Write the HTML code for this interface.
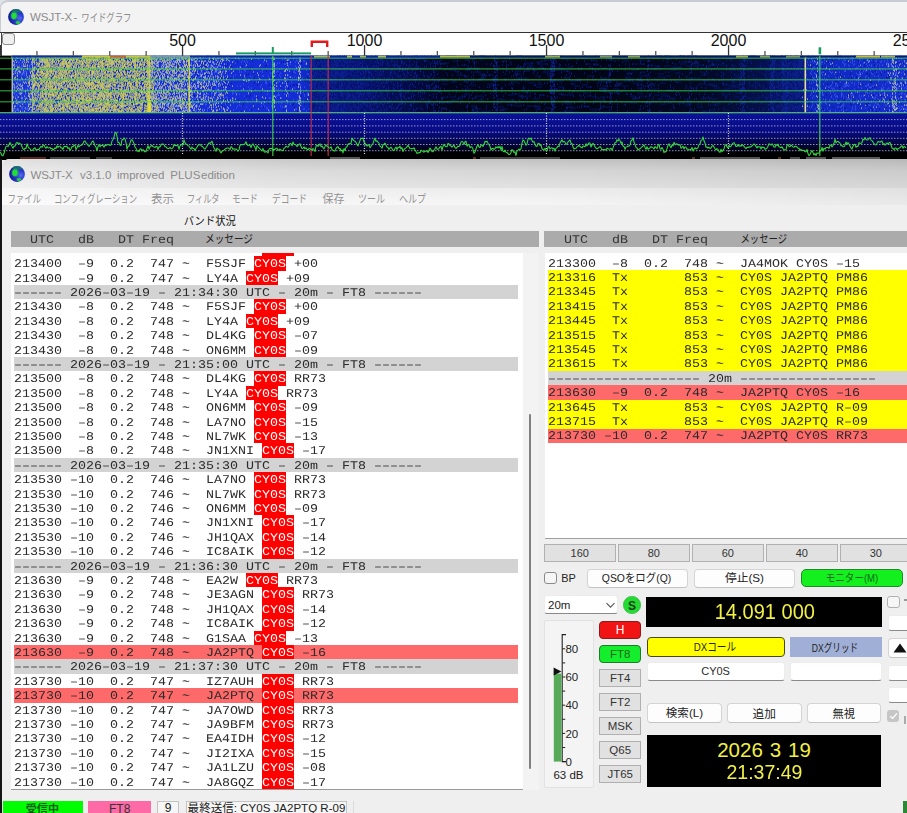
<!DOCTYPE html>
<html><head><meta charset="utf-8"><title>WSJT-X</title>
<style>
html,body{margin:0;padding:0}
body{width:907px;height:813px;overflow:hidden;position:relative;background:#f0f0f0;font-family:"Liberation Sans",sans-serif;font-size:11.5px;color:#111}
div,span,i,b,svg{position:absolute;box-sizing:border-box}
.mono{font-family:"Liberation Mono",monospace;font-size:13.333px;line-height:14.4px;white-space:pre;color:#2a2a2a}
.row{height:14.43px;overflow:visible}
.row .t{left:0;top:0.9px;transform:scaleX(1.12994);transform-origin:0 0;font-family:"Liberation Mono",monospace;font-size:11.8px;line-height:14.4px;white-space:pre;color:#2b2b2b;position:absolute;text-rendering:geometricPrecision}
.row b{position:static;font-weight:normal;color:#fff}
.row i{top:0;height:100%;width:32px;background:#fe0000}
.g{background:#d3d3d3}.r{background:#fe6a6a}.y{background:#ffff00}
.btn{background:#e1e1e1;border:1px solid #b0b0b0;text-align:center;color:#333;font-size:11px}
.wbtn{background:#fdfdfd;border:1px solid #d4d4d4;border-bottom-color:#c4c4c4;border-radius:4px;text-align:center}
.inp{background:#fff;border:1px solid #ececec;border-bottom:1px solid #8a8a8a;border-radius:3px}
.c{text-align:center}
</style></head><body>
<div style="left:0;top:0;width:907px;height:34px;background:#dfe2e7"></div><div style="left:0;top:0;width:915px;height:33px;background:#f3f3f3;border-top:2.5px solid #c8ccd2;border-left:1.5px solid #c8ccd2;border-top-left-radius:8px"></div><div style="left:0;top:31.5px;width:907px;height:1.3px;background:#333"></div><div style="left:0;top:32.8px;width:907px;height:23px;background:#fff"></div><div style="left:0.5px;top:32px;width:1.2px;height:24px;background:#444"></div><div style="left:2.4px;top:33.4px;width:12.2px;height:11.8px;background:#efefef;border:1px solid #8d8d8d;border-radius:3px"></div><svg style="left:6.9px;top:7.899999999999999px" width="18" height="18" viewBox="-9 -9 18 18"><defs><radialGradient id="gg16" cx=".74" cy=".58" r=".8"><stop offset="0" stop-color="#586af2"/><stop offset=".3" stop-color="#2e3ed2"/><stop offset=".75" stop-color="#1a22aa"/><stop offset="1" stop-color="#0e1478"/></radialGradient><clipPath id="gc16"><circle r="7.9"/></clipPath></defs><circle r="8.3" fill="#dfe6f4" opacity=".7"/><circle r="7.9" fill="url(#gg16)"/><g clip-path="url(#gc16)"><ellipse cx="1.6" cy="-7.4" rx="7" ry="3" fill="#148a60" opacity=".7"/><ellipse cx="-1.8" cy="-1.4" rx="3.8" ry="4.4" fill="#2aa66a" opacity=".5"/><ellipse cx="-2" cy="-1.2" rx="2.7" ry="3.2" fill="#22de38"/><ellipse cx="1.9" cy="5.6" rx="2.7" ry="2" fill="#2aa66a" opacity=".6"/><ellipse cx="1.9" cy="5.6" rx="1.9" ry="1.3" fill="#2cd03c"/></g></svg><svg style="left:0;top:33px" width="907" height="127" viewBox="0 33 907 127" shape-rendering="auto"><defs><linearGradient id="wfb" x1="0" x2="907" y1="0" y2="0" gradientUnits="userSpaceOnUse"><stop offset="0.0000" stop-color="#000000"/><stop offset="0.0127" stop-color="#000000"/><stop offset="0.0132" stop-color="#1a34d4"/><stop offset="0.2095" stop-color="#162ed8"/><stop offset="0.3308" stop-color="#142cd4"/><stop offset="0.3407" stop-color="#1028c0"/><stop offset="0.3440" stop-color="#0c1e92"/><stop offset="0.3969" stop-color="#09167a"/><stop offset="0.4520" stop-color="#050c48"/><stop offset="0.4906" stop-color="#02051c"/><stop offset="0.6615" stop-color="#020518"/><stop offset="0.7718" stop-color="#030824"/><stop offset="0.8379" stop-color="#06104a"/><stop offset="0.8732" stop-color="#0b1c80"/><stop offset="0.8864" stop-color="#0e2090"/><stop offset="0.8953" stop-color="#1028c0"/><stop offset="0.9482" stop-color="#122ac8"/><stop offset="1.0000" stop-color="#1830d0"/></linearGradient><linearGradient id="plb" x1="0" x2="0" y1="112.5" y2="153" gradientUnits="userSpaceOnUse"><stop offset="0" stop-color="#0a1298"/><stop offset=".45" stop-color="#080c84"/><stop offset=".75" stop-color="#040646"/><stop offset="1" stop-color="#000004"/></linearGradient><filter id="nb" x="0" y="0" width="100%" height="100%" filterUnits="userSpaceOnUse"><feGaussianBlur stdDeviation="0.35"/></filter></defs><rect x="0" y="55.6" width="907" height="56.99999999999999" fill="url(#wfb)"/><g fill="none" stroke-width="1.05" transform="translate(0,.1)" filter="url(#nb)"><path d="M0 56m23 0h2m7 0h1m2 0h2m2 0h1m4 0h1m3 0h1m1 0h2m1 0h2m4 0h1m4 0h4m3 0h1m2 0h1m3 0h2m2 0h1m2 0h1m1 0h1m4 0h1m1 0h1m2 0h3m1 0h1m1 0h1m2 0h4m2 0h1m4 0h1m2 0h1m2 0h1m8 0h1m2 0h1m2 0h1m3 0h1m1 0h1m1 0h1m1 0h1m30 0h1m5 0h2m5 0h1M0 57m16 0h1m11 0h1m2 0h1m2 0h1m2 0h1m1 0h1m4 0h1m3 0h1m3 0h2m2 0h4m2 0h2m3 0h1m1 0h1m1 0h1m2 0h1m1 0h1m1 0h1m2 0h2m2 0h1m6 0h1m2 0h4m1 0h2m2 0h1m1 0h1m1 0h2m1 0h2m3 0h1m3 0h1m1 0h2m3 0h1m1 0h2m1 0h3m1 0h1m1 0h2m3 0h2m3 0h1m5 0h1m19 0h1m2 0h1m11 0h1M0 58m39 0h2m2 0h1m4 0h2m1 0h1m2 0h1m4 0h1m3 0h1m1 0h2m3 0h1m1 0h2m1 0h1m1 0h2m1 0h4m1 0h2m2 0h1m6 0h4m2 0h1m1 0h1m3 0h2m2 0h2m1 0h1m2 0h2m3 0h1m5 0h1m1 0h2m2 0h3m7 0h7m32 0h2m32 0h1M0 59m39 0h2m1 0h4m1 0h1m1 0h1m3 0h1m10 0h2m1 0h1m1 0h3m1 0h1m2 0h2m4 0h1m1 0h1m1 0h6m2 0h2m1 0h1m1 0h1m1 0h1m2 0h7m4 0h2m1 0h1m10 0h1m2 0h1m1 0h3m1 0h1m2 0h2m3 0h1m1 0h1m6 0h1m3 0h1m4 0h1m6 0h1m5 0h1m7 0h1m35 0h1M0 60m33 0h1m2 0h1m5 0h3m1 0h2m4 0h2m3 0h2m1 0h1m3 0h1m6 0h1m2 0h1m1 0h4m1 0h1m1 0h1m2 0h1m1 0h3m2 0h1m2 0h2m2 0h1m1 0h1m1 0h1m3 0h4m2 0h1m1 0h1m2 0h1m4 0h1m7 0h4m5 0h1m2 0h2m5 0h1m10 0h2m3 0h1m15 0h1M0 61m40 0h1m1 0h1m1 0h1m2 0h1m4 0h1m1 0h1m1 0h1m1 0h1m3 0h5m2 0h1m2 0h1m3 0h1m2 0h1m2 0h1m7 0h2m1 0h1m1 0h1m5 0h2m3 0h1m2 0h7m2 0h3m4 0h1m1 0h1m4 0h6m1 0h1m1 0h1m4 0h1m1 0h2m1 0h2m5 0h1m10 0h1m13 0h2M0 62m24 0h1m1 0h1m1 0h1m4 0h2m5 0h3m1 0h1m1 0h2m1 0h2m1 0h3m1 0h1m1 0h1m2 0h3m1 0h2m2 0h1m2 0h1m2 0h2m1 0h1m1 0h1m3 0h3m1 0h2m3 0h1m2 0h1m1 0h5m2 0h2m1 0h2m1 0h3m1 0h2m1 0h2m2 0h1m1 0h1m1 0h5m1 0h3m2 0h1m2 0h1m1 0h2m1 0h1m1 0h1m4 0h2m4 0h1m2 0h1m22 0h1m1 0h1m14 0h1M0 63m34 0h1m2 0h1m6 0h5m2 0h1m3 0h1m4 0h1m1 0h1m1 0h3m2 0h1m1 0h1m6 0h1m4 0h1m1 0h1m2 0h3m3 0h1m3 0h1m1 0h1m1 0h3m2 0h1m2 0h4m5 0h1m2 0h2m1 0h1m2 0h1m2 0h1m1 0h1m12 0h2m1 0h1m4 0h1m15 0h1m5 0h1m6 0h1m12 0h1m24 0h1M0 64m23 0h1m1 0h1m10 0h1m1 0h1m3 0h1m5 0h2m2 0h1m3 0h1m2 0h1m2 0h2m1 0h2m4 0h1m2 0h1m5 0h1m2 0h1m3 0h1m5 0h1m1 0h1m1 0h2m2 0h2m2 0h1m2 0h6m4 0h1m3 0h1m2 0h1m3 0h3m2 0h2m3 0h5m3 0h1m3 0h2m12 0h2m1 0h2m4 0h1m3 0h1m37 0h1M0 65m27 0h1m14 0h1m3 0h5m3 0h1m5 0h4m2 0h7m2 0h2m4 0h2m1 0h1m1 0h1m1 0h1m3 0h1m1 0h2m2 0h1m1 0h1m1 0h1m1 0h1m3 0h1m2 0h2m1 0h1m1 0h1m1 0h1m1 0h1m8 0h2m2 0h4m2 0h3m6 0h3m15 0h1m2 0h1m9 0h1m4 0h1m3 0h1m2 0h1M0 66m27 0h1m11 0h1m4 0h4m1 0h1m1 0h3m5 0h2m5 0h4m3 0h2m5 0h1m2 0h1m2 0h3m3 0h1m1 0h1m2 0h1m1 0h1m2 0h2m3 0h1m1 0h1m1 0h1m2 0h1m3 0h1m3 0h2m1 0h1m2 0h1m2 0h1m2 0h2m1 0h1m1 0h1m8 0h1m3 0h1m23 0h1m8 0h1m13 0h1M0 67m18 0h1m15 0h2m4 0h2m1 0h3m1 0h1m1 0h1m2 0h1m1 0h2m1 0h2m2 0h1m1 0h1m2 0h2m1 0h1m3 0h3m2 0h2m2 0h1m2 0h1m2 0h1m1 0h1m1 0h4m1 0h1m3 0h1m1 0h1m3 0h1m1 0h1m2 0h2m1 0h2m2 0h2m1 0h2m1 0h2m4 0h1m2 0h1m3 0h2m1 0h1m1 0h1m1 0h1m5 0h1m15 0h2m3 0h1m6 0h1m5 0h1m7 0h1M0 68m32 0h1m1 0h1m1 0h1m3 0h1m3 0h1m1 0h1m2 0h1m6 0h1m1 0h1m1 0h1m1 0h1m4 0h1m1 0h3m1 0h1m1 0h1m2 0h1m1 0h1m1 0h1m1 0h1m1 0h3m3 0h2m1 0h1m4 0h1m3 0h1m6 0h1m6 0h1m4 0h1m1 0h3m1 0h1m4 0h1m1 0h3m4 0h2m2 0h2m3 0h2m25 0h1m7 0h1m6 0h1m9 0h1M0 69m36 0h1m1 0h1m1 0h5m1 0h2m2 0h2m1 0h2m2 0h1m5 0h1m1 0h1m1 0h2m4 0h1m1 0h1m1 0h1m4 0h1m1 0h1m2 0h1m2 0h1m3 0h1m5 0h1m2 0h3m2 0h1m2 0h2m1 0h1m2 0h1m1 0h1m1 0h1m4 0h1m5 0h1m4 0h1m2 0h2m1 0h3m1 0h1m4 0h1m2 0h1m11 0h1m1 0h1m4 0h1m1 0h1m1 0h1M0 70m23 0h1m9 0h2m2 0h2m2 0h1m1 0h1m1 0h1m1 0h1m1 0h2m2 0h1m4 0h3m1 0h6m1 0h1m2 0h1m1 0h1m2 0h1m4 0h1m1 0h1m1 0h1m9 0h1m2 0h1m1 0h1m1 0h2m6 0h3m1 0h1m3 0h2m3 0h1m5 0h1m3 0h1m6 0h1m5 0h1m1 0h4m5 0h1m8 0h2m14 0h1M0 71m32 0h1m1 0h1m2 0h1m2 0h2m2 0h1m2 0h1m2 0h6m5 0h2m3 0h1m2 0h1m1 0h2m2 0h1m1 0h1m3 0h1m1 0h1m4 0h1m2 0h2m2 0h5m1 0h2m4 0h2m1 0h1m3 0h2m3 0h1m2 0h3m2 0h1m2 0h1m5 0h2m1 0h2m6 0h1m2 0h1m8 0h1m19 0h1m9 0h1M0 72m32 0h1m5 0h1m2 0h1m4 0h2m1 0h3m3 0h3m1 0h2m1 0h1m2 0h2m1 0h1m6 0h1m1 0h5m2 0h3m1 0h2m2 0h1m4 0h1m3 0h1m3 0h1m1 0h2m2 0h1m4 0h1m3 0h1m3 0h2m1 0h2m1 0h1m3 0h1m1 0h1m2 0h1m1 0h3m1 0h1m1 0h2m4 0h1m3 0h1m2 0h1m21 0h1M0 73m33 0h1m7 0h1m2 0h1m2 0h2m2 0h1m1 0h1m1 0h1m5 0h1m1 0h1m4 0h1m1 0h1m1 0h2m1 0h2m10 0h2m5 0h1m4 0h1m5 0h1m6 0h2m2 0h1m1 0h1m1 0h2m5 0h1m4 0h1m2 0h3m6 0h1m2 0h1m4 0h1m16 0h1m16 0h1m38 0h1M0 74m13 0h1m22 0h1m3 0h2m2 0h1m1 0h3m1 0h1m1 0h2m1 0h2m2 0h1m1 0h2m2 0h2m9 0h1m1 0h3m1 0h1m2 0h2m2 0h1m1 0h1m3 0h3m3 0h1m1 0h1m2 0h1m1 0h1m2 0h2m2 0h1m1 0h1m3 0h2m2 0h1m8 0h2m1 0h1m1 0h1m4 0h1m2 0h1m6 0h1m3 0h1m5 0h1m3 0h1M0 75m32 0h4m3 0h1m2 0h2m1 0h3m2 0h1m3 0h1m3 0h2m1 0h5m5 0h4m7 0h1m1 0h2m1 0h1m1 0h3m2 0h1m4 0h2m1 0h1m2 0h3m1 0h1m7 0h1m1 0h4m2 0h1m2 0h3m1 0h2m2 0h2m1 0h1m2 0h1m1 0h1m3 0h2m2 0h1m7 0h1m3 0h1m6 0h2m6 0h1m6 0h1M0 76m29 0h1m1 0h1m1 0h2m3 0h1m2 0h2m1 0h5m2 0h1m2 0h3m1 0h1m1 0h1m1 0h1m4 0h1m1 0h1m2 0h1m2 0h1m4 0h1m2 0h1m1 0h1m8 0h2m4 0h1m3 0h1m4 0h1m1 0h2m3 0h1m2 0h1m3 0h1m2 0h1m1 0h3m2 0h1m5 0h1m2 0h2m3 0h1m1 0h2m5 0h1m16 0h1m4 0h1m29 0h1m8 0h1M0 77m31 0h2m1 0h1m1 0h1m2 0h1m9 0h1m3 0h4m5 0h1m1 0h1m3 0h1m6 0h1m1 0h2m2 0h2m2 0h1m6 0h1m3 0h1m2 0h1m1 0h1m1 0h1m1 0h3m1 0h1m2 0h1m2 0h3m3 0h1m2 0h1m3 0h1m3 0h2m1 0h1m5 0h1m1 0h3m2 0h2m3 0h1m2 0h1m14 0h1m5 0h1m6 0h1m3 0h1m24 0h1M0 78m33 0h1m1 0h3m1 0h1m2 0h1m2 0h1m3 0h1m4 0h1m1 0h1m1 0h2m2 0h1m2 0h3m6 0h1m4 0h1m1 0h3m3 0h3m3 0h1m2 0h1m7 0h2m7 0h1m4 0h1m2 0h1m1 0h2m11 0h1m1 0h1m2 0h1m4 0h2m3 0h1m10 0h1m6 0h1m14 0h1m3 0h1M0 79m31 0h1m1 0h2m2 0h1m1 0h1m4 0h1m3 0h1m5 0h2m1 0h1m1 0h1m2 0h1m1 0h1m3 0h1m2 0h2m3 0h1m4 0h3m2 0h1m2 0h1m2 0h3m1 0h2m2 0h2m1 0h1m2 0h1m1 0h2m2 0h1m1 0h2m1 0h1m2 0h2m3 0h2m1 0h1m2 0h1m1 0h2m1 0h4m1 0h1m5 0h1m5 0h2m5 0h1m22 0h1m1 0h1m2 0h1m2 0h1m13 0h1M0 80m33 0h2m5 0h1m1 0h1m1 0h2m2 0h2m3 0h1m2 0h3m2 0h1m3 0h2m6 0h1m2 0h1m1 0h1m2 0h1m1 0h1m1 0h1m2 0h4m2 0h1m1 0h1m4 0h1m1 0h2m6 0h2m1 0h1m2 0h1m3 0h1m2 0h2m5 0h2m2 0h3m1 0h1m3 0h1m4 0h1m1 0h1m1 0h1m12 0h1m3 0h1m17 0h1m4 0h2M0 81m31 0h2m1 0h2m4 0h1m1 0h1m3 0h2m1 0h3m3 0h2m2 0h2m2 0h2m1 0h4m3 0h2m2 0h3m2 0h2m2 0h2m1 0h1m2 0h1m4 0h3m1 0h1m1 0h2m2 0h4m3 0h1m2 0h1m1 0h1m3 0h5m1 0h1m4 0h1m1 0h2m2 0h1m3 0h3m4 0h2M0 82m29 0h1m2 0h1m2 0h2m2 0h1m1 0h1m1 0h2m4 0h2m3 0h1m1 0h1m4 0h2m3 0h1m1 0h1m4 0h2m2 0h1m1 0h1m1 0h1m2 0h2m2 0h2m1 0h1m1 0h1m1 0h1m3 0h1m2 0h1m6 0h1m2 0h2m2 0h3m10 0h1m2 0h2m1 0h3m1 0h1m4 0h5m1 0h1m1 0h1m1 0h1m12 0h1m15 0h1m40 0h1M0 83m35 0h2m1 0h1m1 0h3m2 0h1m2 0h1m1 0h1m1 0h1m1 0h1m2 0h3m1 0h1m1 0h1m3 0h1m1 0h1m7 0h1m2 0h1m1 0h1m2 0h1m2 0h5m6 0h2m1 0h2m1 0h1m2 0h1m2 0h1m4 0h1m3 0h2m1 0h1m3 0h2m1 0h2m3 0h2m2 0h1m7 0h1m16 0h1m4 0h1m28 0h1m4 0h1M0 84m18 0h1m10 0h1m4 0h1m5 0h2m2 0h1m1 0h3m1 0h1m2 0h1m1 0h1m1 0h3m1 0h1m4 0h1m2 0h1m1 0h2m1 0h1m1 0h1m1 0h2m5 0h1m2 0h7m2 0h1m2 0h3m6 0h1m2 0h1m2 0h1m6 0h1m2 0h1m1 0h2m1 0h2m1 0h1m2 0h1m2 0h1m2 0h1m1 0h1m1 0h2m1 0h1m3 0h1m10 0h2m4 0h1M0 85m14 0h1m4 0h1m14 0h4m5 0h1m2 0h1m3 0h1m1 0h1m1 0h1m1 0h1m2 0h1m5 0h1m1 0h1m1 0h2m2 0h1m1 0h3m2 0h2m1 0h1m1 0h1m1 0h5m1 0h1m1 0h4m2 0h4m4 0h2m4 0h1m2 0h1m3 0h1m1 0h2m1 0h1m1 0h3m4 0h2m6 0h1m1 0h2m3 0h1m2 0h1m46 0h1m18 0h1M0 86m34 0h1m2 0h2m5 0h9m11 0h2m1 0h2m1 0h1m2 0h1m1 0h1m1 0h1m5 0h1m1 0h1m3 0h1m1 0h1m1 0h3m1 0h2m2 0h2m3 0h5m3 0h1m2 0h3m3 0h1m3 0h4m2 0h1m3 0h1m3 0h1m3 0h1m35 0h1m20 0h1M0 87m16 0h1m17 0h1m7 0h1m3 0h1m1 0h1m1 0h3m5 0h1m2 0h2m4 0h7m4 0h1m1 0h1m1 0h3m2 0h1m4 0h1m1 0h2m2 0h1m1 0h3m2 0h5m2 0h1m8 0h1m2 0h1m1 0h1m3 0h1m1 0h1m2 0h1m3 0h1m1 0h1m1 0h1m2 0h3m1 0h4m5 0h1m14 0h1m12 0h1m16 0h1m6 0h1M0 88m30 0h1m2 0h1m2 0h1m1 0h1m13 0h1m1 0h1m4 0h2m1 0h2m1 0h2m3 0h3m1 0h3m2 0h2m1 0h1m1 0h1m1 0h2m2 0h3m1 0h2m3 0h1m2 0h1m1 0h1m5 0h1m1 0h4m1 0h2m2 0h2m5 0h1m1 0h2m1 0h1m3 0h1m3 0h1m2 0h1m2 0h2m1 0h1m2 0h1m15 0h2m10 0h1m7 0h1M0 89m14 0h1m17 0h2m4 0h3m1 0h1m1 0h2m2 0h1m2 0h1m1 0h3m1 0h3m4 0h1m1 0h1m4 0h1m2 0h2m2 0h1m2 0h1m1 0h3m2 0h1m2 0h3m1 0h1m1 0h1m2 0h1m1 0h1m1 0h1m1 0h4m8 0h1m2 0h1m5 0h2m2 0h2m1 0h1m3 0h1m2 0h1m2 0h1m1 0h1m2 0h1m2 0h2m1 0h1m14 0h1m4 0h1m8 0h2m3 0h1M0 90m27 0h1m2 0h1m3 0h1m9 0h1m1 0h1m1 0h1m1 0h4m1 0h1m3 0h1m3 0h1m2 0h1m1 0h1m4 0h1m3 0h4m2 0h1m2 0h1m2 0h3m4 0h4m2 0h1m3 0h1m5 0h1m1 0h2m2 0h1m1 0h1m2 0h2m1 0h1m1 0h1m1 0h3m3 0h1m3 0h2m2 0h1m2 0h2m3 0h1m16 0h1m3 0h1m8 0h2m6 0h1m14 0h1M0 91m31 0h1m3 0h1m1 0h2m2 0h2m1 0h1m1 0h1m2 0h2m2 0h1m3 0h2m6 0h2m5 0h1m3 0h2m1 0h3m2 0h1m1 0h2m5 0h3m1 0h2m2 0h1m1 0h1m1 0h1m7 0h2m1 0h1m3 0h1m1 0h3m1 0h3m1 0h1m1 0h4m6 0h1m1 0h1m2 0h1m3 0h1m16 0h1m4 0h1m2 0h1m2 0h1m2 0h1m11 0h1M0 92m33 0h1m6 0h1m1 0h1m2 0h1m4 0h3m1 0h4m2 0h1m1 0h1m3 0h1m3 0h1m1 0h3m5 0h4m1 0h4m3 0h1m1 0h1m1 0h1m2 0h2m4 0h2m4 0h2m6 0h1m1 0h1m1 0h2m2 0h4m4 0h2m5 0h3m5 0h2m3 0h1m1 0h1m16 0h1m6 0h1m6 0h1m3 0h1M0 93m28 0h1m1 0h2m2 0h1m1 0h2m3 0h2m1 0h2m2 0h1m3 0h1m2 0h2m3 0h2m2 0h2m3 0h1m2 0h1m1 0h2m1 0h4m5 0h1m3 0h1m2 0h1m1 0h1m3 0h5m1 0h6m2 0h2m1 0h1m1 0h1m1 0h2m1 0h1m1 0h1m3 0h1m4 0h4m1 0h1m4 0h2m11 0h1m5 0h2m21 0h1m38 0h1M0 94m31 0h1m2 0h1m3 0h1m1 0h1m1 0h3m1 0h7m4 0h1m2 0h4m4 0h2m1 0h1m1 0h1m2 0h2m2 0h1m1 0h1m1 0h2m1 0h3m3 0h1m1 0h1m1 0h2m2 0h1m1 0h1m4 0h5m2 0h1m5 0h3m1 0h1m4 0h1m1 0h1m1 0h1m1 0h1m1 0h2m2 0h2m3 0h1m1 0h1m6 0h1m15 0h1m6 0h1M0 95m28 0h1m6 0h1m2 0h3m5 0h1m1 0h1m1 0h3m2 0h1m2 0h1m1 0h2m2 0h1m1 0h1m3 0h1m1 0h4m6 0h2m2 0h2m1 0h1m2 0h2m4 0h4m1 0h1m1 0h4m4 0h1m2 0h1m1 0h1m1 0h1m1 0h2m1 0h3m7 0h4m1 0h1m5 0h3m5 0h1m29 0h1m38 0h1M0 96m32 0h1m4 0h1m3 0h1m1 0h1m1 0h1m2 0h1m3 0h1m2 0h2m1 0h2m1 0h1m1 0h1m2 0h1m4 0h1m1 0h3m2 0h1m3 0h2m10 0h2m1 0h2m1 0h3m4 0h2m1 0h1m6 0h2m1 0h1m1 0h4m3 0h2m3 0h1m1 0h1m2 0h2m7 0h2m1 0h1m1 0h1m2 0h1m3 0h2m1 0h1m13 0h1m11 0h1m29 0h1M0 97m18 0h1m19 0h1m1 0h1m1 0h2m1 0h2m1 0h3m3 0h1m2 0h1m4 0h2m3 0h1m1 0h1m2 0h2m3 0h1m3 0h1m1 0h1m2 0h2m1 0h1m4 0h3m2 0h1m2 0h2m1 0h1m1 0h1m2 0h3m1 0h1m1 0h1m4 0h1m8 0h1m2 0h3m1 0h3m3 0h1m2 0h3m1 0h1m11 0h1m2 0h2m19 0h1m5 0h1m7 0h1m16 0h1M0 98m15 0h1m5 0h1m12 0h1m1 0h1m3 0h1m3 0h1m2 0h1m2 0h1m5 0h2m2 0h1m3 0h1m2 0h1m1 0h1m2 0h3m1 0h1m2 0h5m2 0h1m2 0h3m1 0h1m1 0h1m3 0h1m4 0h1m4 0h2m3 0h1m2 0h1m2 0h1m5 0h1m1 0h1m2 0h1m9 0h1m1 0h1m4 0h3m3 0h1m9 0h3m6 0h1m6 0h1m30 0h1M0 99m29 0h1m3 0h1m1 0h1m5 0h1m2 0h1m1 0h1m5 0h2m3 0h1m2 0h1m2 0h2m2 0h2m5 0h1m4 0h2m1 0h2m1 0h2m2 0h1m1 0h1m1 0h1m7 0h1m2 0h1m2 0h2m2 0h1m3 0h1m3 0h2m1 0h1m1 0h2m4 0h1m5 0h1m1 0h1m1 0h1m6 0h2m18 0h1m2 0h1m2 0h1m8 0h1m2 0h1m11 0h1m10 0h1M0 100m16 0h1m13 0h2m1 0h2m1 0h2m1 0h2m1 0h1m1 0h2m2 0h2m1 0h1m2 0h1m9 0h3m4 0h1m3 0h1m1 0h2m3 0h1m2 0h2m1 0h5m4 0h1m2 0h4m1 0h1m1 0h2m2 0h1m3 0h1m3 0h1m2 0h1m7 0h1m1 0h1m8 0h1m1 0h2m2 0h1m1 0h1m1 0h1m2 0h1m3 0h1m10 0h1m4 0h1m4 0h1m2 0h1M0 101m24 0h1m9 0h1m1 0h1m5 0h2m1 0h3m2 0h1m1 0h1m5 0h1m1 0h2m1 0h4m1 0h1m4 0h1m4 0h2m2 0h3m1 0h1m1 0h3m4 0h2m3 0h1m3 0h1m2 0h2m3 0h1m1 0h1m2 0h1m3 0h1m1 0h2m1 0h2m2 0h1m4 0h1m1 0h1m2 0h3m2 0h4m5 0h2m10 0h1m5 0h1m3 0h1m12 0h1m35 0h1M0 102m33 0h1m10 0h1m2 0h4m3 0h1m2 0h2m1 0h1m1 0h1m2 0h1m2 0h1m1 0h5m1 0h3m1 0h1m2 0h2m3 0h2m1 0h1m1 0h1m1 0h1m1 0h1m5 0h1m1 0h1m1 0h1m1 0h1m1 0h1m3 0h1m1 0h1m3 0h2m1 0h2m3 0h1m1 0h2m2 0h1m1 0h1m1 0h1m3 0h1m5 0h1m3 0h1m7 0h2m8 0h1m10 0h1m4 0h1M0 103m33 0h1m5 0h2m1 0h2m2 0h1m5 0h1m5 0h2m3 0h2m3 0h1m1 0h1m5 0h1m5 0h1m2 0h1m8 0h1m1 0h2m2 0h3m1 0h3m11 0h1m3 0h1m3 0h2m2 0h1m2 0h1m3 0h3m2 0h1m4 0h1m1 0h1m15 0h1m8 0h1m2 0h1m1 0h1m10 0h1M0 104m40 0h3m1 0h1m3 0h1m1 0h2m4 0h1m2 0h4m2 0h1m1 0h2m2 0h3m2 0h2m1 0h2m5 0h3m3 0h1m2 0h1m2 0h2m1 0h1m3 0h2m1 0h2m2 0h1m4 0h1m1 0h1m1 0h2m4 0h1m2 0h1m3 0h2m1 0h1m2 0h3m7 0h2m21 0h1m9 0h1m6 0h1m22 0h1M0 105m33 0h3m1 0h1m1 0h3m4 0h1m2 0h1m1 0h1m2 0h4m5 0h3m5 0h3m2 0h1m1 0h2m3 0h2m6 0h1m2 0h1m3 0h7m1 0h2m1 0h2m2 0h2m2 0h1m1 0h2m2 0h3m3 0h1m1 0h1m9 0h1m2 0h1m2 0h1m1 0h1m1 0h1m4 0h1m2 0h1m13 0h1M0 106m14 0h1m5 0h1m15 0h2m8 0h1m1 0h1m1 0h3m2 0h1m4 0h1m5 0h4m5 0h2m1 0h1m2 0h1m2 0h2m2 0h2m1 0h1m4 0h3m5 0h2m2 0h2m1 0h5m1 0h1m2 0h1m1 0h3m3 0h1m10 0h1m5 0h3m1 0h1m20 0h1m19 0h2M0 107m36 0h1m2 0h2m1 0h2m1 0h1m4 0h2m4 0h1m6 0h1m2 0h2m1 0h1m4 0h2m4 0h2m3 0h1m2 0h1m2 0h1m1 0h1m5 0h1m2 0h6m1 0h1m1 0h2m2 0h2m2 0h1m2 0h1m6 0h2m6 0h1m2 0h2m5 0h2m1 0h1m3 0h1m1 0h1m25 0h1m4 0h1m33 0h1M0 108m25 0h1m8 0h1m3 0h1m2 0h1m1 0h2m1 0h1m2 0h2m1 0h1m7 0h2m1 0h2m6 0h1m5 0h1m1 0h1m2 0h2m4 0h1m3 0h1m1 0h6m2 0h3m2 0h1m3 0h1m2 0h1m4 0h2m2 0h1m3 0h1m1 0h1m7 0h1m2 0h1m4 0h1m2 0h2m11 0h1m7 0h1M0 109m29 0h1m2 0h1m1 0h1m1 0h1m2 0h1m4 0h2m5 0h2m4 0h4m1 0h2m1 0h1m4 0h4m2 0h2m2 0h2m2 0h3m2 0h5m1 0h1m1 0h2m1 0h3m1 0h1m1 0h1m1 0h1m4 0h3m1 0h1m6 0h1m4 0h4m2 0h2m3 0h1m1 0h1m5 0h2m1 0h1m14 0h1m4 0h1m17 0h1m10 0h1M0 110m13 0h1m27 0h1m2 0h2m1 0h2m1 0h2m2 0h1m1 0h1m2 0h1m5 0h1m1 0h1m4 0h1m8 0h1m2 0h2m2 0h2m1 0h3m2 0h1m3 0h1m2 0h13m1 0h3m5 0h2m1 0h1m4 0h1m1 0h1m1 0h1m1 0h1m4 0h1m2 0h1m2 0h2m4 0h2m11 0h1m23 0h2m29 0h1M0 111m20 0h1m14 0h1m2 0h1m3 0h1m1 0h1m2 0h2m1 0h3m2 0h3m5 0h1m4 0h1m2 0h1m2 0h1m6 0h2m6 0h4m2 0h2m1 0h4m3 0h1m4 0h1m2 0h1m1 0h2m1 0h1m1 0h2m1 0h1m3 0h2m1 0h1m1 0h3m4 0h2m3 0h1m1 0h2m1 0h2m3 0h2m2 0h1m4 0h1m3 0h1m2 0h1m1 0h1m1 0h1m9 0h1M0 112m31 0h1m9 0h2m1 0h4m1 0h1m2 0h1m1 0h2m3 0h8m1 0h2m5 0h2m4 0h4m1 0h3m1 0h1m3 0h2m1 0h1m1 0h9m2 0h1m2 0h1m3 0h5m2 0h1m1 0h1m2 0h1m1 0h2m6 0h1m1 0h1m1 0h3m1 0h1m2 0h1m24 0h1m3 0h1m15 0h1m4 0h1m15 0h1" stroke="#c6c262"/><path d="M0 56m33 0h1m3 0h1m8 0h1m5 0h1m2 0h1m5 0h1m1 0h1m5 0h1m18 0h1m1 0h1m2 0h1m11 0h1m8 0h1m3 0h1m6 0h4m4 0h1m3 0h1m12 0h1m23 0h1m12 0h1m8 0h1M0 57m33 0h1m4 0h1m4 0h1m2 0h2m1 0h1m1 0h1m3 0h1m4 0h1m5 0h1m6 0h1m5 0h2m2 0h1m15 0h1m18 0h1m16 0h1m14 0h1m28 0h1M0 58m21 0h1m14 0h1m5 0h1m3 0h1m8 0h1m8 0h1m2 0h1m8 0h1m14 0h2m13 0h1m19 0h1m13 0h2m11 0h1m17 0h1M0 59m28 0h1m1 0h1m1 0h2m12 0h1m3 0h1m5 0h1m1 0h1m2 0h2m5 0h1m23 0h2m23 0h1m3 0h1m1 0h1m13 0h1m7 0h1m3 0h1m72 0h1M0 60m49 0h1m13 0h1m5 0h2m1 0h2m13 0h1m6 0h2m2 0h1m4 0h1m2 0h1m5 0h1m8 0h3m3 0h1m2 0h1m7 0h1m8 0h1m6 0h1M0 61m27 0h1m4 0h1m1 0h1m4 0h1m6 0h1m4 0h1m7 0h1m20 0h2m4 0h1m2 0h1m10 0h1m4 0h1m2 0h1m7 0h1m7 0h1m19 0h1m2 0h1m14 0h1M0 62m16 0h1m19 0h1m8 0h1m22 0h1m8 0h1m1 0h1m2 0h1m37 0h2m9 0h1m19 0h1m5 0h1m7 0h1M0 63m39 0h1m12 0h1m5 0h1m2 0h1m1 0h1m4 0h1m13 0h1m18 0h1m7 0h1m4 0h1m1 0h1m10 0h1m7 0h1m4 0h1m7 0h1m1 0h1M0 64m39 0h1m7 0h1m7 0h1m1 0h1m2 0h1m3 0h1m2 0h1m2 0h1m5 0h1m4 0h2m13 0h1m2 0h1m3 0h1m3 0h1m9 0h1m6 0h1m2 0h1m9 0h1m6 0h1m4 0h1M0 65m13 0h1m22 0h1m4 0h1m45 0h1m1 0h2m10 0h1m3 0h3m14 0h1m1 0h1m3 0h1m8 0h1m6 0h1m2 0h1m57 0h1M0 66m48 0h1m7 0h1m6 0h2m5 0h1m5 0h1m21 0h1m11 0h1m5 0h1m7 0h1m2 0h1m18 0h1m6 0h1m3 0h1m5 0h1m8 0h1M0 67m42 0h1m38 0h1m7 0h1m8 0h1m3 0h1m14 0h1m17 0h1m14 0h1m3 0h1M0 68m33 0h1m5 0h1m11 0h1m13 0h1m2 0h1m21 0h1m8 0h1m7 0h2m3 0h1m9 0h1m5 0h1m6 0h1m5 0h1m4 0h1M0 69m33 0h1m14 0h1m10 0h1m1 0h1m17 0h1m1 0h1m1 0h1m2 0h1m8 0h1m1 0h1m3 0h1m7 0h1m5 0h2m3 0h1m12 0h1m15 0h1m39 0h1M0 70m51 0h1m19 0h1m17 0h2m1 0h1m13 0h1m7 0h1m6 0h1m15 0h1m5 0h2m3 0h1m10 0h1m12 0h1m11 0h1m1 0h1M0 71m31 0h1m6 0h1m3 0h1m3 0h1m2 0h1m8 0h1m1 0h1m4 0h1m2 0h1m18 0h1m1 0h1m3 0h1m9 0h1m1 0h1m3 0h1m1 0h1m5 0h1m14 0h4m10 0h1m21 0h1m4 0h1M0 72m20 0h1m9 0h1m6 0h1m2 0h1m1 0h1m21 0h1m4 0h1m21 0h1m1 0h1m10 0h1m7 0h1m4 0h1m3 0h1m24 0h1m2 0h1M0 73m30 0h1m5 0h1m5 0h2m14 0h3m5 0h1m11 0h1m10 0h1m2 0h2m1 0h1m1 0h1m6 0h1m19 0h1m13 0h1m1 0h2m6 0h1m8 0h1m60 0h1M0 74m37 0h1m5 0h1m31 0h1m16 0h1m5 0h1m3 0h1m4 0h1m1 0h2m3 0h1m3 0h2m4 0h1m2 0h1m93 0h1M0 75m37 0h2m1 0h1m8 0h1m7 0h1m2 0h1m6 0h1m1 0h1m5 0h1m4 0h2m10 0h1m19 0h1m18 0h1m6 0h1M0 76m50 0h1m13 0h1m6 0h1m1 0h1m2 0h1m9 0h1m2 0h1m7 0h2m3 0h1m5 0h1m9 0h1m13 0h1m2 0h1m1 0h1M0 77m15 0h1m29 0h2m10 0h3m1 0h1m9 0h1m2 0h1m12 0h1m9 0h1m4 0h1m7 0h1m8 0h1m2 0h1m2 0h1m4 0h1m3 0h1m7 0h1m8 0h1m26 0h1M0 78m34 0h1m5 0h1m5 0h1m1 0h1m4 0h1m7 0h1m2 0h1m6 0h1m3 0h1m1 0h1m6 0h1m6 0h1m9 0h1m9 0h2m21 0h1m4 0h2m3 0h1m9 0h1M0 79m40 0h2m1 0h1m6 0h1m1 0h1m10 0h1m2 0h1m6 0h1m6 0h1m17 0h1m6 0h1m4 0h2m1 0h1m5 0h1m2 0h2m5 0h1m16 0h1m64 0h1M0 80m30 0h1m6 0h1m3 0h1m5 0h1m19 0h1m1 0h2m1 0h1m4 0h1m1 0h1m2 0h1m3 0h1m5 0h1m2 0h1m1 0h1m1 0h1m9 0h2m2 0h1m6 0h1m5 0h2m14 0h1m2 0h1m7 0h1M0 81m29 0h1m13 0h2m7 0h1m1 0h1m7 0h1m2 0h1m15 0h1m2 0h1m10 0h1m15 0h1m1 0h1m19 0h1m45 0h1M0 82m46 0h2m5 0h1m9 0h2m5 0h1m21 0h1m3 0h3m2 0h1m12 0h2m5 0h1m6 0h1m9 0h1m12 0h1M0 83m34 0h1m11 0h1m2 0h1m1 0h1m4 0h1m3 0h1m3 0h1m5 0h1m4 0h1m3 0h1m1 0h1m4 0h2m5 0h1m4 0h1m5 0h1m14 0h1m5 0h1m3 0h1m12 0h2M0 84m33 0h1m4 0h1m15 0h1m18 0h1m1 0h1m8 0h1m2 0h1m15 0h1m10 0h1m22 0h1m7 0h1m31 0h1m16 0h1m17 0h1M0 85m29 0h1m3 0h1m5 0h1m2 0h1m5 0h1m12 0h1m37 0h2m5 0h1m1 0h1m5 0h1m20 0h1m38 0h1M0 86m33 0h1m5 0h1m15 0h1m4 0h2m19 0h1m4 0h1m1 0h1m3 0h1m3 0h1m14 0h1m9 0h2m13 0h1m3 0h1m3 0h1m1 0h1m6 0h1m8 0h1m13 0h1m10 0h1M0 87m32 0h2m4 0h1m4 0h1m5 0h1m5 0h2m17 0h1m14 0h1m13 0h1m23 0h1m3 0h1m1 0h2m9 0h1m4 0h1m11 0h1m63 0h1M0 88m47 0h1m2 0h1m4 0h1m2 0h1m18 0h1m3 0h1m7 0h1m3 0h1m6 0h1m2 0h1m38 0h1M0 89m36 0h1m15 0h1m3 0h1m8 0h1m30 0h1m8 0h1m14 0h1m5 0h1m16 0h1M0 90m42 0h2m1 0h1m3 0h1m4 0h1m6 0h1m20 0h1m2 0h1m21 0h2m16 0h1m7 0h1m4 0h1m4 0h1m26 0h1M0 91m34 0h1m12 0h1m3 0h1m12 0h1m6 0h1m1 0h2m3 0h1m4 0h1m1 0h1m5 0h1m8 0h1m3 0h1m2 0h1m4 0h1m2 0h1m5 0h1m3 0h1m13 0h3m4 0h1m1 0h3m29 0h2M0 92m38 0h1m24 0h2m4 0h1m5 0h1m1 0h1m11 0h1m3 0h1m1 0h1m5 0h1m2 0h1m5 0h1m6 0h2m7 0h1m4 0h1m1 0h1m7 0h1m3 0h1m1 0h2m34 0h1M0 93m46 0h1m2 0h1m7 0h1m1 0h1m10 0h1m10 0h1m1 0h1m1 0h1m5 0h1m2 0h1m16 0h1m3 0h1m25 0h1m4 0h1m4 0h1m1 0h1m15 0h1M0 94m45 0h1m7 0h1m11 0h1m1 0h1m13 0h1m17 0h1m6 0h1m11 0h2m4 0h1m10 0h1m10 0h1m8 0h1m12 0h1M0 95m32 0h1m9 0h1m6 0h1m3 0h2m4 0h1m25 0h1m16 0h1m1 0h1m5 0h1m3 0h1m48 0h1m50 0h1M0 96m42 0h1m10 0h1m27 0h1m2 0h1m6 0h1m1 0h1m10 0h1m6 0h1m2 0h1m6 0h1m4 0h1m4 0h1m13 0h3m2 0h1m1 0h1m2 0h1m17 0h1M0 97m32 0h2m24 0h1m2 0h1m4 0h1m9 0h1m11 0h1m11 0h1m3 0h1m3 0h1m8 0h1m4 0h2m20 0h1M0 98m58 0h1m9 0h1m8 0h1m9 0h1m9 0h2m4 0h1m19 0h1m1 0h1m9 0h1m1 0h1m1 0h1m7 0h1m4 0h1m3 0h1m25 0h1m20 0h1M0 99m30 0h1m14 0h1m1 0h1m2 0h1m4 0h1m16 0h2m7 0h1m2 0h1m5 0h1m3 0h1m1 0h3m4 0h1m8 0h1m10 0h1m2 0h2m7 0h1m10 0h1m2 0h1m30 0h1m3 0h1M0 100m35 0h1m10 0h1m15 0h1m5 0h1m5 0h1m1 0h1m2 0h1m3 0h1m3 0h1m25 0h2m1 0h2m11 0h1m5 0h1M0 101m33 0h1m14 0h1m2 0h1m1 0h1m18 0h1m3 0h2m9 0h1m5 0h1m4 0h1m11 0h1m5 0h1m5 0h1m10 0h1m44 0h1M0 102m19 0h1m14 0h1m3 0h1m2 0h2m2 0h1m5 0h1m1 0h1m27 0h2m3 0h2m2 0h1m9 0h1m7 0h1m5 0h1m5 0h1m9 0h1m2 0h1m4 0h1m3 0h1m2 0h1m1 0h1M0 103m47 0h2m12 0h1m5 0h1m1 0h1m7 0h1m2 0h2m1 0h1m4 0h2m2 0h2m13 0h2m4 0h1m2 0h1m4 0h1m7 0h1m6 0h1m3 0h2m12 0h1m17 0h1M0 104m29 0h1m3 0h1m12 0h1m28 0h1m2 0h1m12 0h1m8 0h1m6 0h1m2 0h1m3 0h1m18 0h1m2 0h1m11 0h2M0 105m47 0h1m4 0h1m6 0h1m2 0h1m3 0h2m22 0h1m5 0h1m11 0h1m6 0h1m5 0h2m3 0h1m6 0h1m8 0h1m2 0h1m33 0h1m6 0h1m1 0h1M0 106m38 0h2m1 0h1m2 0h1m13 0h2m3 0h1m6 0h1m2 0h1m6 0h1m14 0h1m10 0h1m9 0h1m4 0h1m3 0h1m8 0h1m17 0h1m29 0h1M0 107m30 0h1m15 0h1m7 0h1m7 0h1m15 0h1m3 0h1m1 0h1m1 0h2m12 0h1m13 0h1m6 0h1m11 0h1m4 0h2m2 0h1m6 0h1m12 0h1m5 0h1m2 0h1m14 0h1M0 108m45 0h1m7 0h1m1 0h1m1 0h1m4 0h1m6 0h1m16 0h1m13 0h1m11 0h1m13 0h1m4 0h1m9 0h1m4 0h1m9 0h2M0 109m33 0h1m4 0h1m3 0h1m7 0h1m2 0h1m1 0h1m5 0h1m7 0h1m9 0h1m7 0h1m8 0h1m6 0h1m3 0h1m8 0h1m10 0h1m10 0h1m8 0h1m2 0h1m1 0h1M0 110m37 0h1m14 0h1m7 0h1m2 0h1m11 0h1m3 0h2m1 0h1m11 0h1m26 0h1m1 0h1m7 0h1m6 0h1m2 0h1m4 0h1M0 111m32 0h1m7 0h1m5 0h1m29 0h1m8 0h1m7 0h1m3 0h1m9 0h1m11 0h1m28 0h1m27 0h1M0 112m33 0h2m2 0h1m12 0h2m19 0h2m1 0h1m2 0h1m18 0h1m12 0h1m17 0h1m5 0h2m5 0h1m10 0h2m3 0h1m5 0h1m21 0h1" stroke="#dcd648"/><path d="M0 56m40 0h1m1 0h1m4 0h1m9 0h1m2 0h1m1 0h1m10 0h1m6 0h1m2 0h1m2 0h1m2 0h1m6 0h1m5 0h1m26 0h1m1 0h1m15 0h1m11 0h1m3 0h1M0 57m61 0h1m22 0h1m5 0h1m14 0h1m1 0h1m2 0h1m3 0h2m10 0h1m19 0h1m2 0h1m10 0h1M0 58m34 0h1m6 0h1m20 0h1m5 0h1m2 0h1m23 0h1m15 0h1m5 0h1m16 0h1m41 0h1M0 59m27 0h1m6 0h1m1 0h1m14 0h1m3 0h1m18 0h2m7 0h1m18 0h1m8 0h1m2 0h1m15 0h1m2 0h1m5 0h1m7 0h1m4 0h1M0 60m35 0h1m3 0h2m4 0h1m2 0h1m6 0h1m10 0h2m16 0h2m5 0h2m24 0h1m18 0h1m5 0h1m3 0h1m39 0h1M0 61m53 0h1m33 0h1m11 0h1m17 0h1m5 0h1m14 0h1m1 0h1m1 0h1m23 0h1m27 0h1m7 0h1M0 62m43 0h1m7 0h1m12 0h1m5 0h1m2 0h2m6 0h1m5 0h1m4 0h1m14 0h1m15 0h1m14 0h1m5 0h1m58 0h1m5 0h1M0 63m32 0h1m5 0h1m10 0h2m16 0h1m4 0h2m2 0h1m2 0h2m5 0h2m7 0h1m9 0h1m2 0h1m12 0h1m15 0h1m1 0h1m2 0h1M0 64m34 0h1m11 0h1m22 0h1m5 0h1m3 0h1m6 0h1m1 0h1m25 0h1m1 0h1m2 0h2m51 0h1m30 0h1M0 65m44 0h1m8 0h1m5 0h1m4 0h1m9 0h1m3 0h1m44 0h1m19 0h1m32 0h1M0 66m29 0h1m7 0h1m4 0h2m6 0h1m4 0h1m25 0h1m2 0h2m7 0h1m1 0h1m5 0h1m6 0h1m6 0h1m26 0h2m3 0h1m1 0h1M0 67m19 0h1m26 0h1m6 0h1m5 0h2m15 0h1m9 0h1m4 0h1m12 0h1m16 0h1m6 0h1m1 0h1m1 0h1m15 0h1M0 68m45 0h1m4 0h1m10 0h1m1 0h1m12 0h1m4 0h1m12 0h1m1 0h1m9 0h1m2 0h1m4 0h1m4 0h3m8 0h1m18 0h1m5 0h1m2 0h1M0 69m39 0h1m18 0h1m1 0h1m24 0h1m2 0h1m3 0h2m8 0h1m7 0h1m13 0h1m2 0h3m4 0h1m11 0h1m3 0h1m2 0h1m9 0h1M0 70m52 0h1m4 0h1m3 0h1m8 0h1m7 0h4m3 0h1m5 0h1m2 0h1m7 0h1m5 0h1m1 0h1m20 0h1m1 0h1m6 0h1m1 0h1m21 0h1M0 71m48 0h1m21 0h1m5 0h1m2 0h1m5 0h2m7 0h1m17 0h1m7 0h1m10 0h1m16 0h2M0 72m48 0h1m4 0h1m7 0h1m12 0h1m7 0h2m3 0h1m10 0h1m3 0h1m26 0h1m2 0h1m11 0h1m10 0h1m11 0h1M0 73m45 0h2m3 0h1m5 0h1m8 0h1m1 0h1m1 0h1m9 0h1m4 0h1m1 0h1m4 0h1m8 0h2m1 0h1m6 0h1m6 0h1m16 0h1m8 0h1m10 0h1m3 0h1m35 0h1M0 74m39 0h1m5 0h1m3 0h1m13 0h1m3 0h1m4 0h1m8 0h1m1 0h1m20 0h2m7 0h1m12 0h1m4 0h1m8 0h1m7 0h1m2 0h1m9 0h1M0 75m26 0h1m25 0h1m2 0h1m12 0h1m7 0h3m14 0h1m2 0h1m1 0h1m2 0h1m6 0h1m2 0h1m1 0h1m2 0h1m10 0h1M0 76m32 0h1m3 0h1m24 0h1m1 0h1m1 0h1m11 0h1m3 0h2m1 0h1m6 0h2m12 0h1m11 0h1m2 0h1m13 0h1m1 0h1m7 0h1m10 0h1m25 0h1M0 77m42 0h3m2 0h1m17 0h3m8 0h1m2 0h2m3 0h1m3 0h1m1 0h1m4 0h1m2 0h1m5 0h1m13 0h1m19 0h1m8 0h1M0 78m43 0h2m5 0h1m1 0h1m15 0h2m8 0h1m1 0h1m21 0h1m11 0h1m4 0h1m2 0h1m2 0h1m4 0h1m12 0h1m26 0h1M0 79m38 0h1m7 0h2m5 0h1m2 0h1m13 0h1m3 0h1m2 0h2m23 0h1m4 0h1m16 0h1m7 0h1m15 0h2m21 0h1M0 80m43 0h1m10 0h1m8 0h1m7 0h1m2 0h1m9 0h1m22 0h1m26 0h1m6 0h1M0 81m41 0h1m15 0h1m13 0h2m3 0h1m3 0h1m24 0h1m15 0h1m27 0h1m7 0h1M0 82m33 0h1m8 0h1m8 0h1m3 0h1m2 0h1m16 0h1m7 0h1m2 0h2m18 0h3m11 0h1m1 0h1m4 0h1m2 0h2m11 0h1M0 83m37 0h1m6 0h1m27 0h1m28 0h1m4 0h2m4 0h1m4 0h1m4 0h1m15 0h1m1 0h1m4 0h1m3 0h2m22 0h1m3 0h1M0 84m13 0h1m23 0h1m7 0h1m5 0h1m10 0h2m6 0h1m6 0h1m3 0h1m17 0h1m4 0h1m3 0h1m4 0h1m7 0h1m26 0h1m2 0h1M0 85m38 0h1m8 0h1m1 0h1m1 0h1m3 0h1m22 0h1m3 0h1m3 0h1m20 0h1m5 0h1m7 0h1m1 0h1m28 0h1m17 0h1m7 0h1M0 86m53 0h1m24 0h1m8 0h1m15 0h2m7 0h1m25 0h1M0 87m39 0h1m19 0h2m2 0h1m1 0h1m9 0h1m3 0h1m1 0h1m9 0h1m5 0h1m1 0h1m18 0h1m21 0h1m31 0h1M0 88m41 0h2m3 0h1m2 0h1m1 0h1m4 0h1m40 0h1m9 0h1m8 0h1m17 0h3m9 0h1m2 0h1m15 0h1M0 89m19 0h1m21 0h1m31 0h1m8 0h1m20 0h1m8 0h1m22 0h2m2 0h1m8 0h1m7 0h1m6 0h1m16 0h1M0 90m57 0h1m7 0h1m8 0h1m17 0h1m2 0h1m8 0h2m16 0h1m14 0h1m11 0h1m26 0h1M0 91m36 0h1m8 0h1m16 0h2m11 0h1m12 0h1m3 0h1m9 0h1m5 0h1M0 92m37 0h1m8 0h1m18 0h1m1 0h2m9 0h1m12 0h1m10 0h1m5 0h1m16 0h1m6 0h1m7 0h1M0 93m20 0h1m22 0h1m9 0h2m8 0h1m9 0h1m10 0h1m4 0h1m27 0h1m1 0h1m2 0h1m1 0h1m8 0h1m8 0h1m5 0h1M0 94m35 0h1m19 0h2m7 0h1m25 0h1m1 0h1m11 0h1m2 0h1m5 0h1m6 0h1m10 0h1m9 0h1m6 0h1m2 0h1m10 0h1M0 95m36 0h1m4 0h1m14 0h1m8 0h1m12 0h3m36 0h1m3 0h1m7 0h1m15 0h1m3 0h2m38 0h1M0 96m24 0h1m21 0h1m2 0h2m3 0h1m9 0h1m4 0h2m17 0h1m1 0h1m15 0h1m2 0h1m18 0h1m3 0h1m51 0h1M0 97m35 0h1m5 0h1m9 0h1m7 0h2m7 0h1m2 0h1m2 0h1m3 0h1m3 0h1m48 0h2m9 0h1m21 0h1m4 0h1m7 0h1M0 98m26 0h1m8 0h1m3 0h1m6 0h1m12 0h1m2 0h1m3 0h1m4 0h1m6 0h1m13 0h1m1 0h1m5 0h2m4 0h1m8 0h1m5 0h1m14 0h1m5 0h1m1 0h1m23 0h1m14 0h1M0 99m32 0h1m4 0h1m1 0h1m9 0h1m6 0h1m1 0h2m2 0h1m6 0h1m5 0h1m12 0h1m10 0h2m4 0h1m4 0h1m17 0h1m3 0h1m1 0h1m2 0h1m5 0h1M0 100m43 0h1m6 0h1m12 0h1m5 0h1m3 0h1m19 0h1m12 0h1m3 0h1m12 0h1m10 0h1m3 0h1M0 101m38 0h1m2 0h1m2 0h1m17 0h1m4 0h1m1 0h1m1 0h1m25 0h1m1 0h1m5 0h1m3 0h1m3 0h1m14 0h1m3 0h1m3 0h1m13 0h1m24 0h1m5 0h1M0 102m46 0h1m8 0h1m5 0h1m4 0h2m7 0h1m9 0h1m12 0h1m2 0h1m25 0h2m7 0h1m9 0h1m3 0h1m23 0h1M0 103m38 0h1m12 0h1m1 0h1m1 0h1m10 0h1m5 0h1m11 0h1m10 0h1m15 0h1m23 0h1m12 0h1m4 0h1M0 104m28 0h1m10 0h1m5 0h1m1 0h1m1 0h1m24 0h1m9 0h1m9 0h1m9 0h1m6 0h1m6 0h1m5 0h1m22 0h1m6 0h1M0 105m28 0h1m16 0h1m12 0h1m1 0h1m8 0h1m4 0h1m5 0h1m1 0h1m22 0h1m12 0h1m8 0h1m2 0h1m17 0h1m8 0h1m33 0h1M0 106m33 0h1m6 0h1m8 0h1m6 0h2m4 0h1m2 0h1m13 0h1m2 0h1m48 0h1m4 0h1m4 0h1m6 0h1m1 0h2m24 0h1M0 107m41 0h1m6 0h2m5 0h1m2 0h1m11 0h1m2 0h1m15 0h1m6 0h1m1 0h1m9 0h1m1 0h1m2 0h1m6 0h1m23 0h1m19 0h1m25 0h1M0 108m42 0h1m4 0h1m3 0h1m16 0h1m11 0h1m4 0h1m1 0h1m5 0h1m12 0h1m8 0h1m6 0h1m5 0h1m9 0h2m7 0h1M0 109m17 0h1m19 0h1m5 0h1m2 0h3m15 0h1m1 0h1m8 0h1m45 0h2m5 0h1m8 0h1m16 0h1m64 0h1M0 110m18 0h1m17 0h1m16 0h1m16 0h2m4 0h1m9 0h1m3 0h1m10 0h1m20 0h1m11 0h1m10 0h1m24 0h1M0 111m41 0h1m3 0h1m3 0h1m10 0h1m1 0h1m1 0h1m7 0h1m2 0h1m1 0h1m1 0h2m7 0h1m15 0h1m17 0h1m3 0h1m9 0h2m7 0h1M0 112m30 0h1m9 0h1m7 0h1m24 0h1m6 0h1m54 0h1m2 0h1m7 0h1m14 0h1m7 0h1" stroke="#98b078"/><path d="M0 56m95 0h1m14 0h1m45 0h2m2 0h1m7 0h1m4 0h1m14 0h1m1 0h1m18 0h1m2 0h1m652 0h1m18 0h1m21 0h1M0 57m32 0h1m8 0h1m100 0h1m14 0h2m6 0h1m17 0h1m6 0h1m1 0h1m16 0h1m10 0h1m53 0h1m24 0h2m515 0h2m34 0h1m2 0h1m30 0h1M0 58m93 0h1m58 0h1m1 0h1m6 0h1m7 0h1m2 0h2m3 0h1m18 0h1m12 0h1m2 0h1m72 0h1m542 0h1m63 0h1m1 0h1M0 59m26 0h1m14 0h1m10 0h1m69 0h1m30 0h1m24 0h2m3 0h1m4 0h1m2 0h1m2 0h1m20 0h1m11 0h1m45 0h1m25 0h1m592 0h1M0 60m20 0h1m20 0h1m23 0h1m90 0h1m7 0h1m1 0h1m3 0h1m5 0h2m1 0h2m6 0h1m3 0h1m30 0h1m5 0h1m35 0h1m21 0h1m1 0h1m578 0h1m25 0h1M0 61m43 0h1m26 0h1m84 0h2m2 0h2m4 0h1m7 0h1m1 0h1m3 0h1m8 0h1m6 0h1m3 0h1m4 0h1m5 0h1m11 0h1m6 0h1m36 0h1m547 0h1m54 0h1m23 0h1M0 62m14 0h1m7 0h1m71 0h1m15 0h1m52 0h2m2 0h1m2 0h1m3 0h3m2 0h1m3 0h1m11 0h1m14 0h1m1 0h1m77 0h1m526 0h1m46 0h1m3 0h1m27 0h1M0 63m42 0h1m27 0h1m63 0h1m18 0h1m2 0h1m6 0h1m3 0h2m3 0h1m15 0h1m2 0h1m9 0h1m5 0h1m5 0h1m60 0h1m12 0h1m529 0h1m77 0h1M0 64m31 0h1m19 0h1m9 0h1m64 0h1m21 0h1m5 0h2m2 0h1m29 0h2m16 0h1m17 0h1m48 0h2m31 0h1m509 0h1m13 0h1m55 0h1m1 0h1m2 0h1M0 65m121 0h1m34 0h1m7 0h1m5 0h1m18 0h2m20 0h1m7 0h1m10 0h1m68 0h1m560 0h1m38 0h1M0 66m14 0h1m42 0h1m20 0h1m41 0h1m15 0h1m13 0h2m4 0h1m9 0h1m1 0h2m1 0h1m1 0h1m8 0h1m6 0h1m5 0h1m1 0h2m13 0h1m7 0h1m52 0h2m25 0h1m591 0h1m2 0h1M0 67m137 0h1m9 0h1m5 0h1m9 0h1m1 0h2m7 0h1m38 0h1m3 0h1m4 0h1m1 0h1m15 0h1m57 0h1m1 0h1m592 0h1M0 68m55 0h1m42 0h1m32 0h1m7 0h2m15 0h1m8 0h1m3 0h2m12 0h1m4 0h1m13 0h1m7 0h1m3 0h1m9 0h1m71 0h1m520 0h1m80 0h1M0 69m16 0h1m4 0h1m33 0h1m16 0h1m26 0h1m48 0h1m10 0h1m22 0h1m10 0h1m1 0h1m20 0h1m55 0h1m13 0h1m542 0h1m66 0h1m9 0h1M0 70m16 0h1m29 0h1m7 0h1m20 0h1m98 0h1m1 0h1m4 0h1m11 0h1m1 0h1m78 0h1m12 0h1m578 0h1m29 0h1M0 71m15 0h1m2 0h1m119 0h1m17 0h1m5 0h1m3 0h1m3 0h1m1 0h1m1 0h1m8 0h2m10 0h1m1 0h1m18 0h1m8 0h1m7 0h1m40 0h1m10 0h1m3 0h1m9 0h1m594 0h1M0 72m19 0h1m3 0h1m70 0h1m1 0h1m13 0h1m22 0h1m18 0h1m12 0h2m13 0h1m4 0h1m4 0h1m17 0h1m2 0h1m60 0h2m26 0h1m598 0h1M0 73m15 0h1m10 0h1m75 0h1m58 0h2m3 0h1m7 0h1m1 0h1m7 0h1m2 0h1m1 0h1m14 0h1m2 0h1m49 0h1m16 0h1m613 0h1m4 0h1M0 74m22 0h1m37 0h1m33 0h1m5 0h1m49 0h1m21 0h1m6 0h2m3 0h3m5 0h1m5 0h1m1 0h1m3 0h1m7 0h1m86 0h1m560 0h1m32 0h1M0 75m17 0h1m13 0h1m51 0h1m4 0h1m46 0h1m11 0h1m2 0h1m39 0h1m81 0h1m616 0h1m5 0h1M0 76m70 0h1m17 0h1m21 0h1m40 0h1m5 0h1m1 0h1m2 0h1m1 0h1m3 0h1m18 0h1m8 0h1m3 0h1m4 0h1m4 0h1m10 0h1m51 0h2m541 0h1M0 77m27 0h1m42 0h1m55 0h2m31 0h1m2 0h1m5 0h1m1 0h1m19 0h1m12 0h2m22 0h1m62 0h1m9 0h1m515 0h1M0 78m60 0h1m33 0h1m12 0h1m40 0h1m1 0h1m4 0h1m7 0h2m10 0h2m2 0h1m9 0h1m14 0h1m2 0h1m1 0h1m75 0h1m13 0h1m558 0h1m32 0h1m10 0h1M0 79m15 0h1m6 0h1m2 0h1m32 0h1m26 0h1m1 0h1m28 0h1m42 0h1m10 0h1m1 0h1m5 0h2m15 0h1m17 0h1m58 0h1m544 0h1m76 0h1M0 80m93 0h1m55 0h1m6 0h1m2 0h1m2 0h1m8 0h1m6 0h1m7 0h1m62 0h1M0 81m153 0h1m14 0h1m1 0h1m1 0h1m11 0h1m1 0h1m6 0h1m4 0h1m9 0h2m4 0h1m3 0h1m4 0h1m49 0h1m11 0h1m608 0h1M0 82m23 0h1m1 0h1m2 0h1m49 0h1m26 0h1m43 0h1m9 0h1m2 0h1m3 0h1m2 0h1m3 0h1m23 0h3m1 0h1m7 0h1m6 0h1m41 0h1m587 0h1m42 0h1m5 0h1m9 0h1M0 83m16 0h1m9 0h1m5 0h1m20 0h1m1 0h1m27 0h1m69 0h1m4 0h2m10 0h1m16 0h1m1 0h1m1 0h1m8 0h1m5 0h1m1 0h1m3 0h1m1 0h1m10 0h1m60 0h1m559 0h1m43 0h1m4 0h1m4 0h2m3 0h1M0 84m20 0h1m14 0h1m71 0h1m46 0h1m1 0h1m4 0h1m4 0h1m14 0h1m1 0h1m1 0h1m41 0h1m70 0h2m597 0h1M0 85m57 0h1m61 0h1m37 0h1m5 0h1m11 0h1m9 0h1m4 0h1m2 0h1m1 0h1m2 0h1m7 0h1m3 0h1m3 0h1m71 0h1m529 0h2m78 0h1m4 0h1m1 0h1M0 86m20 0h1m6 0h2m29 0h2m2 0h1m52 0h1m33 0h1m10 0h1m6 0h1m4 0h2m17 0h1m5 0h1m20 0h1m61 0h1m17 0h1m595 0h1m4 0h1M0 87m14 0h1m7 0h1m54 0h1m97 0h1m13 0h1m4 0h1m3 0h1m24 0h1m2 0h1m58 0h1m14 0h1m592 0h1m1 0h1M0 88m18 0h1m3 0h1m8 0h1m69 0h1m24 0h1m18 0h1m5 0h1m3 0h2m3 0h1m19 0h1m15 0h1m628 0h1m70 0h1M0 89m22 0h1m54 0h1m8 0h1m23 0h1m8 0h1m10 0h1m2 0h1m13 0h1m20 0h1m4 0h1m3 0h1m10 0h1m36 0h1m17 0h1m29 0h1m11 0h1m14 0h1m516 0h1m83 0h1M0 90m21 0h1m16 0h1m48 0h2m46 0h1m10 0h1m8 0h2m2 0h3m2 0h1m3 0h1m5 0h1m4 0h1m1 0h1m3 0h2m1 0h1m15 0h1m4 0h2m12 0h1m49 0h2m592 0h1m13 0h1M0 91m25 0h1m26 0h1m29 0h1m34 0h1m35 0h1m3 0h1m3 0h1m15 0h1m10 0h1m13 0h1m23 0h1m40 0h1m4 0h1m1 0h1m11 0h1m13 0h1m515 0h1m1 0h1M0 92m25 0h1m6 0h1m2 0h1m13 0h1m65 0h2m37 0h1m4 0h1m8 0h1m22 0h1m2 0h1m21 0h1m596 0h1m43 0h1M0 93m19 0h1m12 0h1m49 0h1m69 0h1m6 0h2m4 0h1m8 0h1m2 0h2m5 0h1m21 0h1m7 0h1m6 0h1m65 0h1m9 0h1m2 0h1m550 0h1m32 0h1m7 0h1m2 0h1M0 94m20 0h1m73 0h1m5 0h1m1 0h1m49 0h2m3 0h1m12 0h1m11 0h1m1 0h1m3 0h1m2 0h1m7 0h2m18 0h1m672 0h1M0 95m91 0h1m41 0h1m8 0h1m10 0h1m4 0h1m8 0h1m1 0h1m9 0h1m23 0h1m14 0h1m3 0h1m85 0h1m578 0h1M0 96m40 0h1m35 0h1m2 0h1m12 0h1m10 0h1m61 0h1m15 0h1m74 0h1m16 0h1m12 0h1m608 0h1M0 97m29 0h1m23 0h1m25 0h1m26 0h1m21 0h1m22 0h1m9 0h1m8 0h1m3 0h2m3 0h3m3 0h1m10 0h2m1 0h1m13 0h1m61 0h1m23 0h1m502 0h1m14 0h1m54 0h1m22 0h1m4 0h1m5 0h1M0 98m22 0h1m14 0h1m5 0h1m63 0h1m47 0h1m3 0h1m2 0h1m9 0h1m6 0h1m4 0h1m3 0h1m29 0h1m80 0h1m595 0h1M0 99m31 0h1m19 0h1m25 0h1m35 0h1m37 0h3m1 0h1m5 0h1m6 0h1m3 0h1m16 0h1m12 0h1m2 0h1m67 0h1m591 0h1m25 0h1M0 100m137 0h1m4 0h1m16 0h2m9 0h1m4 0h2m15 0h1m8 0h1m6 0h1m3 0h1m19 0h1m39 0h1m1 0h1m11 0h1m12 0h1m584 0h1M0 101m54 0h1m60 0h1m33 0h1m6 0h1m23 0h1m2 0h1m4 0h1m21 0h1m76 0h1m10 0h1m583 0h1m9 0h1M0 102m13 0h1m4 0h1m5 0h1m5 0h1m95 0h1m21 0h1m8 0h1m8 0h1m5 0h1m7 0h1m3 0h1m4 0h1m3 0h1m2 0h1m25 0h1m16 0h1m24 0h1m8 0h1m618 0h1M0 103m34 0h1m25 0h1m30 0h1m23 0h1m39 0h1m7 0h2m3 0h2m5 0h1m11 0h1m33 0h1m39 0h1m36 0h2m557 0h1m36 0h1M0 104m30 0h1m32 0h1m59 0h1m4 0h2m25 0h1m3 0h2m6 0h2m2 0h1m22 0h1m6 0h1m97 0h1m560 0h1m26 0h1M0 105m42 0h1m45 0h1m8 0h1m42 0h1m11 0h1m2 0h1m6 0h1m3 0h1m1 0h1m2 0h1m4 0h1m1 0h1m1 0h2m14 0h1m16 0h1m1 0h1m14 0h1m41 0h1m27 0h1m516 0h1m11 0h1m35 0h1m26 0h1m3 0h1m9 0h1M0 106m15 0h1m74 0h1m3 0h1m8 0h1m49 0h1m6 0h1m6 0h1m5 0h1m1 0h1m1 0h1m7 0h1m9 0h2m2 0h1m86 0h1m531 0h1m70 0h1m2 0h3M0 107m52 0h1m7 0h1m15 0h2m5 0h1m6 0h1m32 0h1m10 0h1m20 0h1m35 0h1m17 0h1m3 0h1m13 0h1m46 0h1m10 0h1m587 0h1m2 0h1M0 108m14 0h1m58 0h1m10 0h1m4 0h1m19 0h1m53 0h2m7 0h1m7 0h1m3 0h1m7 0h1m35 0h1m43 0h1m624 0h1M0 109m74 0h1m36 0h1m13 0h1m32 0h1m15 0h1m3 0h1m9 0h1m34 0h2m74 0h1m518 0h1m76 0h1M0 110m28 0h1m2 0h1m11 0h1m14 0h1m15 0h1m27 0h1m46 0h1m8 0h1m9 0h1m3 0h1m3 0h1m6 0h1m1 0h3m2 0h1m11 0h1m1 0h1m21 0h1m41 0h1m17 0h1m602 0h1m4 0h2M0 111m66 0h1m35 0h1m11 0h1m23 0h1m29 0h1m14 0h1m3 0h1m2 0h1m626 0h1M0 112m36 0h1m52 0h1m33 0h1m13 0h1m11 0h1m21 0h1m13 0h1m2 0h1m2 0h1m6 0h1m26 0h1m73 0h1m543 0h1m42 0h1m5 0h1m11 0h1" stroke="#9cb0e0"/><path d="M0 56m21 0h1m9 0h1m13 0h1m24 0h1m50 0h1m19 0h1m16 0h1m16 0h1m13 0h1m4 0h1m8 0h1m1 0h1m12 0h1m6 0h1m651 0h1m8 0h1m7 0h1M0 57m27 0h1m26 0h1m58 0h1m23 0h1m9 0h1m3 0h1m14 0h2m1 0h1m1 0h1m9 0h2m4 0h1m11 0h2m2 0h1m10 0h1m13 0h1m43 0h1m619 0h1M0 58m17 0h1m34 0h1m4 0h1m29 0h1m19 0h1m55 0h1m10 0h1m6 0h2m3 0h1m8 0h1m4 0h1m12 0h1m3 0h1m8 0h1m8 0h1m2 0h1m34 0h1m622 0h1M0 59m23 0h1m39 0h1m32 0h1m47 0h1m5 0h2m4 0h2m2 0h2m5 0h1m1 0h1m2 0h1m9 0h1m10 0h1m3 0h1m11 0h1m3 0h1m37 0h1m22 0h1m542 0h1M0 60m15 0h1m8 0h1m1 0h1m5 0h1m17 0h1m86 0h1m30 0h1m9 0h1m2 0h1m6 0h2m2 0h1m23 0h1m6 0h1m2 0h1m60 0h1m12 0h1m591 0h1M0 61m13 0h1m27 0h1m3 0h1m37 0h2m12 0h1m9 0h1m20 0h1m35 0h1m6 0h1m5 0h1m8 0h2m8 0h1m4 0h1m3 0h1m2 0h1m11 0h1m78 0h2m525 0h1m21 0h1m55 0h1M0 62m31 0h1m16 0h1m86 0h1m12 0h2m4 0h1m14 0h1m7 0h1m2 0h1m7 0h2m23 0h1m3 0h1m14 0h1m659 0h1m2 0h1M0 63m75 0h1m15 0h1m52 0h1m6 0h2m4 0h1m20 0h1m24 0h1m15 0h1m78 0h1m7 0h1m525 0h1m60 0h1m12 0h1M0 64m14 0h1m22 0h1m7 0h1m31 0h1m28 0h1m56 0h1m9 0h1m10 0h1m1 0h1m10 0h1m16 0h1m685 0h1M0 65m38 0h1m113 0h1m4 0h1m4 0h1m8 0h1m13 0h2m6 0h1m1 0h1m1 0h1m2 0h1m5 0h1m1 0h1m9 0h1m27 0h1m13 0h1m13 0h1m12 0h1m522 0h1M0 66m23 0h3m12 0h1m43 0h1m17 0h1m57 0h1m2 0h1m5 0h1m16 0h1m2 0h1m19 0h1m51 0h1m628 0h1m15 0h1M0 67m17 0h1m44 0h1m5 0h1m2 0h1m27 0h1m75 0h2m3 0h1m2 0h1m3 0h1m15 0h1m7 0h1m17 0h1M0 68m14 0h1m12 0h1m20 0h1m10 0h1m31 0h1m10 0h1m48 0h1m9 0h2m3 0h1m9 0h1m3 0h2m11 0h1m6 0h1m73 0h1m24 0h1m526 0h1M0 69m13 0h1m3 0h1m9 0h1m6 0h1m45 0h1m77 0h1m1 0h1m4 0h1m4 0h1m12 0h1m2 0h1m1 0h1m1 0h1m15 0h2m2 0h1m4 0h1m15 0h1m67 0h1m595 0h1M0 70m83 0h1m70 0h1m2 0h1m8 0h1m4 0h1m1 0h1m4 0h1m8 0h1m24 0h1m72 0h1m13 0h1m593 0h2M0 71m19 0h1m36 0h1m7 0h1m87 0h1m10 0h1m13 0h1m4 0h1m2 0h1m1 0h1m4 0h1m1 0h1m6 0h1m9 0h1m3 0h1m4 0h1m5 0h1m46 0h1m10 0h1m13 0h1m518 0h1M0 72m39 0h1m23 0h1m59 0h1m26 0h2m2 0h1m14 0h1m2 0h1m1 0h1m1 0h1m4 0h1m2 0h1m21 0h1m12 0h2m1 0h1m30 0h1m581 0h1M0 73m17 0h1m14 0h1m19 0h1m11 0h1m15 0h1m48 0h1m37 0h1m5 0h1m1 0h1m9 0h1m4 0h2m5 0h1m7 0h1m3 0h1m21 0h1m40 0h1m26 0h1m590 0h1m7 0h1M0 74m33 0h1m43 0h1m71 0h1m13 0h1m6 0h1m18 0h1m12 0h1m8 0h1m60 0h1m552 0h1m78 0h1M0 75m134 0h1m11 0h1m9 0h1m1 0h1m3 0h1m11 0h1m1 0h1m1 0h1m2 0h2m1 0h1m6 0h1m9 0h1m38 0h1m17 0h1m26 0h1m1 0h1m12 0h1m515 0h1M0 76m17 0h1m89 0h1m44 0h1m14 0h1m4 0h1m6 0h2m1 0h2m4 0h1m12 0h1m13 0h1m11 0h1m16 0h1m27 0h1m624 0h1M0 77m91 0h1m37 0h1m25 0h1m7 0h1m3 0h1m17 0h1m1 0h1m7 0h1m9 0h1m12 0h1m4 0h1m48 0h2m24 0h1m541 0h1M0 78m14 0h1m6 0h1m7 0h1m129 0h2m11 0h1m1 0h1m8 0h1m11 0h1m21 0h1m2 0h1m63 0h1m13 0h1m591 0h1m4 0h1M0 79m17 0h1m31 0h1m85 0h1m6 0h2m13 0h1m7 0h1m1 0h1m6 0h4m4 0h1m1 0h1m8 0h2m11 0h1m2 0h1m13 0h1m2 0h1m32 0h1m9 0h1M0 80m51 0h1m12 0h1m15 0h1m21 0h1m12 0h1m6 0h1m50 0h2m1 0h1m4 0h1m2 0h1m18 0h1m17 0h1m21 0h2m3 0h1m24 0h2m23 0h1m1 0h1m569 0h1m24 0h1M0 81m94 0h1m52 0h2m16 0h2m7 0h1m5 0h2m22 0h1m8 0h1m2 0h1m29 0h1m569 0h1M0 82m52 0h1m104 0h1m10 0h1m1 0h1m11 0h1m21 0h1m23 0h1m43 0h1M0 83m24 0h1m3 0h2m54 0h1m25 0h1m41 0h1m2 0h1m24 0h2m15 0h1m21 0h1m56 0h1m5 0h1m609 0h1m1 0h1M0 84m31 0h1m54 0h1m23 0h1m44 0h1m3 0h1m11 0h1m7 0h1m2 0h1m4 0h1m12 0h2m4 0h1m7 0h1m3 0h1m3 0h1m49 0h1m543 0h1m43 0h1m32 0h1m1 0h1M0 85m22 0h1m35 0h1m1 0h1m7 0h1m70 0h1m9 0h2m7 0h1m5 0h1m6 0h1m4 0h1m4 0h1m26 0h1m4 0h1m1 0h1m58 0h1m601 0h1M0 86m17 0h1m3 0h1m78 0h1m4 0h1m14 0h1m11 0h1m17 0h1m18 0h1m5 0h1m2 0h1m3 0h1m1 0h1m3 0h1m4 0h1m1 0h1m2 0h1m4 0h1m1 0h1m1 0h1m24 0h1m43 0h1m10 0h1m517 0h1m11 0h1M0 87m30 0h1m14 0h1m91 0h1m19 0h1m4 0h1m2 0h1m2 0h1m1 0h1m5 0h1m13 0h1m1 0h1m8 0h1m1 0h1m69 0h1m24 0h1m593 0h1M0 88m43 0h1m1 0h1m2 0h1m15 0h1m94 0h1m1 0h1m14 0h3m9 0h1m2 0h1m3 0h1m4 0h2m2 0h1m1 0h1m65 0h1m1 0h1m619 0h1m6 0h1M0 89m17 0h1m2 0h1m14 0h1m10 0h1m3 0h1m16 0h1m11 0h1m34 0h1m9 0h1m53 0h2m2 0h1m25 0h1m2 0h1m50 0h1m29 0h1m599 0h1M0 90m121 0h1m36 0h1m4 0h1m1 0h2m20 0h1m3 0h1m3 0h1m11 0h1m10 0h1m2 0h1m581 0h1m2 0h1m85 0h1m2 0h2M0 91m16 0h1m37 0h1m97 0h1m1 0h1m8 0h1m3 0h1m3 0h1m12 0h1m5 0h2m5 0h1m5 0h1m9 0h1m37 0h1m21 0h1m620 0h1M0 92m47 0h1m59 0h1m41 0h1m2 0h1m5 0h1m2 0h1m1 0h2m1 0h2m11 0h1m10 0h1m6 0h1m28 0h1M0 93m21 0h1m18 0h1m30 0h1m75 0h1m13 0h1m11 0h1m2 0h1m8 0h1m3 0h1m7 0h2m1 0h1m14 0h1m11 0h1m20 0h1M0 94m29 0h1m66 0h1m30 0h1m37 0h2m7 0h1m10 0h2m5 0h1m11 0h1m15 0h1m15 0h1m71 0h1M0 95m34 0h1m10 0h1m63 0h1m29 0h1m20 0h1m20 0h1m1 0h1m2 0h1m3 0h1m6 0h1m22 0h2m64 0h1m561 0h1m15 0h1m6 0h1m8 0h1m3 0h1M0 96m28 0h2m57 0h1m11 0h1m35 0h1m30 0h1m9 0h1m2 0h1m8 0h1m2 0h1m5 0h1m8 0h1m67 0h1m24 0h1m516 0h1m89 0h1M0 97m13 0h1m71 0h1m7 0h1m3 0h1m55 0h2m1 0h1m14 0h1m31 0h1m1 0h1m2 0h1m14 0h1m38 0h1m10 0h1m574 0h1m4 0h1m31 0h1m6 0h1m8 0h1M0 98m32 0h1m99 0h1m1 0h1m16 0h1m1 0h1m4 0h1m4 0h1m11 0h1m1 0h2m31 0h1m9 0h1m11 0h1m32 0h1m14 0h1m19 0h1M0 99m25 0h1m50 0h1m29 0h1m49 0h2m4 0h1m12 0h2m11 0h1m1 0h1m10 0h1m10 0h1m4 0h1m17 0h1m20 0h1m15 0h1m34 0h1m499 0h1m75 0h1M0 100m152 0h1m8 0h1m9 0h2m7 0h1m4 0h1m3 0h1m13 0h1m12 0h1m6 0h1m3 0h1m2 0h1m42 0h1m26 0h1m591 0h1m3 0h1M0 101m94 0h1m49 0h1m7 0h1m11 0h1m2 0h1m14 0h1m15 0h1m5 0h1m1 0h1m5 0h1m10 0h1m32 0h1m17 0h1m583 0h1m20 0h1m13 0h2M0 102m79 0h1m19 0h1m4 0h1m11 0h1m2 0h1m34 0h1m1 0h1m19 0h1m2 0h1m3 0h1m2 0h1m3 0h2m6 0h1m10 0h1m18 0h1m45 0h1m25 0h1m583 0h1m10 0h1m3 0h1M0 103m13 0h1m2 0h2m32 0h1m14 0h1m32 0h1m21 0h1m2 0h1m26 0h1m5 0h1m3 0h1m1 0h1m19 0h3m24 0h1m6 0h1m1 0h1m53 0h1m1 0h1m613 0h1m3 0h1m3 0h1M0 104m22 0h1m35 0h1m7 0h1m14 0h1m21 0h1m54 0h1m3 0h3m7 0h1m1 0h1m5 0h3m3 0h3m11 0h1m1 0h1m12 0h1m677 0h1m1 0h1M0 105m32 0h1m131 0h1m18 0h2m8 0h1m16 0h2m606 0h1m85 0h1M0 106m28 0h1m103 0h1m21 0h2m1 0h1m4 0h1m9 0h1m5 0h3m11 0h1m25 0h1m34 0h1m20 0h1m10 0h1m516 0h1m4 0h1M0 107m31 0h2m31 0h1m87 0h1m4 0h4m19 0h2m3 0h1m6 0h1m3 0h1m14 0h1m4 0h1m55 0h1m26 0h1m517 0h1m76 0h1M0 108m29 0h1m37 0h1m64 0h1m11 0h1m6 0h1m18 0h1m2 0h2m6 0h1m1 0h1m2 0h1m7 0h1m28 0h1m75 0h1m518 0h1m42 0h1m31 0h1m2 0h1M0 109m40 0h1m77 0h1m36 0h2m6 0h1m8 0h1m4 0h1m3 0h1m16 0h1m12 0h1m46 0h1m560 0h1m64 0h1m9 0h1m1 0h1m6 0h1M0 110m46 0h1m40 0h1m42 0h1m23 0h1m4 0h1m5 0h1m8 0h2m23 0h1m13 0h1m2 0h2m9 0h1m47 0h1m18 0h1m4 0h1M0 111m24 0h1m42 0h1m5 0h1m57 0h1m20 0h2m28 0h1m6 0h1m22 0h2m10 0h1m5 0h1m13 0h1m41 0h1m13 0h1m515 0h1m75 0h1M0 112m15 0h1m4 0h1m22 0h1m110 0h1m3 0h1m1 0h1m9 0h1m5 0h1m1 0h1m1 0h2m5 0h1m15 0h1m663 0h1m25 0h1m2 0h1" stroke="#c4c890"/><path d="M0 56m29 0h2m7 0h1m115 0h1m7 0h1m2 0h1m1 0h1m4 0h1m3 0h1m20 0h1m9 0h2m11 0h1m6 0h1m61 0h1m8 0h1m509 0h1m3 0h1m26 0h1m11 0h1m9 0h1m21 0h1m4 0h1m11 0h1M0 57m19 0h1m139 0h1m2 0h3m11 0h1m1 0h1m6 0h1m12 0h1m23 0h1m20 0h1m52 0h1m509 0h1m16 0h1m3 0h1m2 0h1m13 0h1m4 0h1m11 0h1m7 0h1m6 0h1m4 0h1m7 0h1m5 0h1m8 0h1M0 58m20 0h1m1 0h2m4 0h1m130 0h1m7 0h1m2 0h1m43 0h1m4 0h1m24 0h1m4 0h1m21 0h1m21 0h1m6 0h1m511 0h1m10 0h2m5 0h1m13 0h1m1 0h1m4 0h1m1 0h1m4 0h2m5 0h1m21 0h1m10 0h1M0 59m16 0h1m153 0h1m9 0h2m8 0h1m5 0h1m3 0h2m6 0h1m8 0h1m2 0h1m18 0h1m18 0h1m12 0h1m10 0h1m1 0h1m4 0h1m3 0h1m514 0h1m2 0h1m9 0h1m11 0h1m4 0h2m1 0h1m8 0h1m1 0h1m6 0h1m2 0h1m13 0h1m24 0h1M0 60m22 0h1m4 0h2m9 0h1m118 0h3m5 0h1m8 0h1m18 0h1m3 0h1m4 0h1m9 0h1m2 0h1m2 0h1m5 0h1m17 0h1m3 0h1m49 0h1m2 0h1m512 0h1m11 0h1m18 0h3m3 0h1m2 0h1m7 0h1m5 0h1m1 0h1m2 0h1m15 0h1M0 61m16 0h2m5 0h1m12 0h1m144 0h1m7 0h1m7 0h2m16 0h1m2 0h1m14 0h1m10 0h1m52 0h1m5 0h2m507 0h1m39 0h1m1 0h1m20 0h2m4 0h1m2 0h1m6 0h1m7 0h1M0 62m18 0h2m7 0h1m4 0h1m138 0h2m9 0h1m8 0h1m1 0h1m12 0h1m14 0h1m19 0h1m2 0h1m2 0h1m15 0h1m31 0h1m4 0h1m506 0h1m2 0h1m4 0h1m5 0h2m6 0h1m12 0h1m7 0h1m8 0h1m20 0h1m23 0h1M0 63m14 0h1m3 0h1m2 0h1m13 0h1m141 0h1m7 0h1m8 0h1m17 0h1m1 0h2m19 0h1m9 0h1m27 0h1m3 0h1m1 0h1m6 0h1m526 0h1m4 0h1m5 0h1m18 0h1m8 0h1m10 0h2m21 0h2m14 0h1m2 0h1M0 64m13 0h1m148 0h1m1 0h1m16 0h1m9 0h1m2 0h1m18 0h1m5 0h1m6 0h1m40 0h1m16 0h2m4 0h1m14 0h1m511 0h1m3 0h1m9 0h1m12 0h2m8 0h1m11 0h1m10 0h1m12 0h1M0 65m16 0h2m1 0h1m1 0h1m3 0h1m4 0h1m6 0h1m116 0h2m5 0h1m1 0h1m3 0h2m11 0h1m2 0h1m23 0h1m2 0h1m48 0h1m12 0h1m3 0h1m531 0h1m9 0h1m17 0h1m11 0h1m4 0h1m15 0h1m1 0h1m7 0h1m2 0h1m8 0h1M0 66m15 0h1m6 0h1m3 0h1m5 0h1m3 0h1m127 0h2m14 0h1m10 0h2m1 0h1m13 0h1m1 0h1m7 0h2m25 0h1m42 0h1m6 0h1m530 0h1m6 0h1m10 0h1m4 0h1m8 0h2m2 0h1m4 0h1m3 0h1m4 0h1m10 0h1m1 0h1m1 0h1m5 0h1M0 67m21 0h2m4 0h1m1 0h1m3 0h1m2 0h1m119 0h1m32 0h1m7 0h1m10 0h1m1 0h1m4 0h2m22 0h1m574 0h1m2 0h1m20 0h2M0 68m20 0h1m3 0h1m1 0h1m3 0h1m119 0h1m9 0h1m6 0h1m3 0h2m2 0h1m8 0h1m7 0h1m14 0h1m1 0h1m1 0h1m14 0h1m10 0h1m43 0h1m6 0h1m15 0h1m502 0h1m2 0h1m2 0h1m6 0h1m15 0h1m19 0h2m10 0h1m10 0h1m8 0h1m3 0h1m2 0h1M0 69m29 0h2m1 0h1m2 0h1m118 0h1m1 0h1m4 0h1m6 0h1m6 0h1m8 0h1m26 0h2m7 0h1m4 0h1m25 0h2m13 0h1m3 0h1m8 0h1m29 0h1m502 0h1m10 0h1m1 0h1m22 0h1m1 0h1m4 0h1m8 0h1m1 0h1m5 0h1m3 0h1m2 0h1m2 0h1m11 0h1m2 0h1M0 70m13 0h1m7 0h1m7 0h2m8 0h1m130 0h1m20 0h1m8 0h1m1 0h1m2 0h1m5 0h1m5 0h4m8 0h1m9 0h1m4 0h1m17 0h1m31 0h1m1 0h1m9 0h1m511 0h1m26 0h1m14 0h1m9 0h1m9 0h1m4 0h1m18 0h1M0 71m13 0h1m3 0h1m6 0h3m2 0h1m123 0h2m3 0h1m34 0h1m12 0h2m15 0h1m21 0h1m14 0h1m16 0h1m533 0h1m17 0h1m14 0h2m5 0h1m11 0h1m1 0h1M0 72m14 0h1m1 0h1m9 0h1m7 0h1m124 0h1m8 0h1m17 0h1m14 0h1m12 0h3m1 0h1m13 0h1m6 0h1m1 0h1m20 0h1m13 0h1m1 0h1m14 0h2m527 0h2m6 0h1m1 0h1m3 0h1m2 0h1m19 0h1m16 0h1m4 0h1m5 0h1m8 0h1m6 0h1M0 73m14 0h1m5 0h1m1 0h3m125 0h1m2 0h1m1 0h1m14 0h1m22 0h1m6 0h1m1 0h1m5 0h1m3 0h1m1 0h1m2 0h1m4 0h1m47 0h1m9 0h1m14 0h1m514 0h1m3 0h1m6 0h1m9 0h1m24 0h1m3 0h1m1 0h1m8 0h1m15 0h1m4 0h1m2 0h2m4 0h1M0 74m19 0h1m1 0h1m12 0h1m3 0h1m121 0h1m1 0h1m3 0h1m26 0h1m5 0h1m19 0h1m24 0h1m62 0h2m502 0h1m3 0h1m18 0h1m6 0h1m15 0h1m1 0h1m12 0h1M0 75m16 0h1m5 0h1m1 0h1m5 0h1m137 0h3m6 0h1m7 0h1m14 0h1m4 0h1m4 0h1m1 0h1m7 0h1m2 0h1m3 0h1m7 0h1m39 0h1m3 0h1m8 0h1m517 0h1m15 0h1m1 0h1m33 0h1m31 0h1m1 0h1m3 0h1m8 0h1M0 76m21 0h1m132 0h1m5 0h1m4 0h1m19 0h1m4 0h1m2 0h1m17 0h1m4 0h1m8 0h1m4 0h1m2 0h1m16 0h1m11 0h2m4 0h1m29 0h1m10 0h1m518 0h1m15 0h1m7 0h1m7 0h1m5 0h1m7 0h1m3 0h1m8 0h1m6 0h1M0 77m26 0h1m145 0h1m6 0h1m1 0h1m4 0h1m12 0h1m1 0h1m5 0h1m4 0h1m2 0h1m28 0h1m7 0h1m5 0h1m21 0h1m8 0h1m4 0h1m517 0h1m5 0h1m16 0h1m2 0h1m19 0h2m5 0h1m26 0h1m5 0h1m7 0h1M0 78m26 0h1m1 0h1m123 0h1m20 0h1m3 0h1m3 0h1m3 0h1m11 0h2m2 0h1m8 0h3m2 0h1m17 0h1m11 0h1m41 0h1m4 0h1m3 0h1m5 0h1m510 0h2m5 0h1m3 0h1m29 0h1m13 0h1m28 0h1m3 0h1M0 79m16 0h1m4 0h1m5 0h2m121 0h2m12 0h1m31 0h1m1 0h1m2 0h1m16 0h2m24 0h1m3 0h1m2 0h1m8 0h1m17 0h1m27 0h1m500 0h1m11 0h1m2 0h1m3 0h1m9 0h1m1 0h2m2 0h1m22 0h1m13 0h1m10 0h2M0 80m14 0h1m4 0h1m8 0h1m125 0h2m1 0h1m10 0h1m6 0h1m21 0h1m7 0h2m2 0h1m5 0h1m70 0h1m22 0h1m502 0h1m2 0h1m11 0h1m28 0h1m1 0h1m19 0h1m12 0h1m13 0h1M0 81m15 0h1m1 0h1m1 0h2m1 0h1m4 0h1m2 0h1m7 0h1m121 0h1m3 0h1m11 0h1m19 0h1m3 0h3m18 0h1m34 0h1m8 0h1m13 0h1m4 0h1m524 0h1m9 0h1m5 0h1m52 0h1m9 0h1m4 0h1m10 0h2M0 82m17 0h1m8 0h1m144 0h1m12 0h2m3 0h1m2 0h1m12 0h1m7 0h1m1 0h1m1 0h1m30 0h1m7 0h1m9 0h1m3 0h1m6 0h2m12 0h1m521 0h1m2 0h1m15 0h1m7 0h1m11 0h1m5 0h1m28 0h1m5 0h1m10 0h1M0 83m17 0h2m3 0h1m134 0h1m10 0h1m3 0h1m10 0h2m10 0h1m6 0h1m7 0h1m2 0h1m2 0h1m4 0h1m43 0h2m17 0h1m524 0h1m1 0h1m20 0h1m2 0h1m9 0h1m2 0h1m2 0h1m2 0h1m5 0h1m28 0h1m16 0h1M0 84m14 0h1m157 0h1m5 0h1m9 0h1m4 0h1m9 0h2m4 0h2m32 0h1m579 0h1m11 0h2m7 0h1m13 0h1m9 0h1m16 0h1M0 85m17 0h2m136 0h1m17 0h1m3 0h1m13 0h1m7 0h1m19 0h1m2 0h1m6 0h1m31 0h1m38 0h1m8 0h1m508 0h1m12 0h1m5 0h1m7 0h3m1 0h1m4 0h1m6 0h1m5 0h2m5 0h1m7 0h1M0 86m13 0h1m2 0h1m139 0h1m20 0h1m1 0h2m9 0h1m10 0h1m10 0h1m3 0h1m2 0h2m16 0h1m2 0h1m36 0h1m541 0h1m6 0h1m3 0h1m4 0h1m1 0h1m5 0h1m1 0h2m1 0h1m16 0h2m5 0h2m17 0h1m6 0h1m2 0h1m1 0h1m2 0h1M0 87m13 0h1m1 0h1m4 0h1m7 0h1m126 0h1m27 0h2m12 0h1m2 0h1m7 0h1m7 0h1m31 0h1m11 0h1m9 0h1m16 0h1m16 0h1m504 0h1m7 0h2m9 0h2m14 0h1m13 0h1m10 0h3m11 0h1m17 0h1M0 88m15 0h2m4 0h1m5 0h1m1 0h1m4 0h1m127 0h1m3 0h1m5 0h2m5 0h1m2 0h1m4 0h1m4 0h1m1 0h1m23 0h1m2 0h1m29 0h1m42 0h1m517 0h1m6 0h1m11 0h1m1 0h1m7 0h1m19 0h1m8 0h1m10 0h1m6 0h1m9 0h1m5 0h1m1 0h1M0 89m23 0h1m1 0h1m1 0h1m1 0h2m3 0h1m2 0h1m120 0h1m10 0h1m11 0h1m1 0h1m3 0h1m13 0h1m13 0h3m6 0h1m24 0h1m26 0h1m1 0h1m1 0h1m531 0h1m1 0h1m5 0h1m11 0h1m1 0h1m7 0h1m11 0h1m12 0h1m6 0h1m6 0h3m3 0h1m9 0h1M0 90m18 0h1m3 0h1m2 0h2m1 0h1m142 0h1m5 0h1m19 0h1m13 0h1m5 0h1m1 0h1m6 0h1m6 0h1m7 0h1m8 0h1m4 0h1m50 0h1m515 0h1m5 0h1m8 0h1m10 0h1m25 0h2m6 0h1m6 0h1m10 0h1M0 91m21 0h1m2 0h1m7 0h1m127 0h1m3 0h1m31 0h1m9 0h1m3 0h1m1 0h1m7 0h1m26 0h1m16 0h2m3 0h1m555 0h1m3 0h1m25 0h1m25 0h1m2 0h1m20 0h1M0 92m13 0h1m1 0h1m3 0h1m2 0h1m11 0h1m145 0h1m8 0h1m3 0h1m17 0h1m3 0h1m2 0h2m12 0h1m2 0h1m59 0h1m2 0h1m4 0h1m511 0h1m4 0h1m1 0h1m7 0h1m2 0h1m7 0h1m17 0h1m5 0h2m4 0h1M0 93m13 0h2m3 0h1m3 0h1m2 0h1m12 0h2m110 0h1m7 0h1m22 0h1m9 0h1m3 0h1m7 0h2m6 0h2m3 0h1m2 0h1m13 0h1m44 0h1m28 0h1m503 0h1m10 0h1m29 0h1m2 0h1m11 0h1m1 0h1m4 0h1m4 0h1m21 0h2M0 94m14 0h1m1 0h1m2 0h1m5 0h1m10 0h2m120 0h1m37 0h2m9 0h2m2 0h1m13 0h1m6 0h1m6 0h1m8 0h1m18 0h1m16 0h1m3 0h1m15 0h1m517 0h1m7 0h1m4 0h1m5 0h2m7 0h1m14 0h1m16 0h1m1 0h2m9 0h1m3 0h1m1 0h1m2 0h1M0 95m16 0h1m4 0h1m8 0h1m2 0h1m3 0h1m114 0h1m4 0h1m6 0h1m3 0h1m16 0h1m6 0h1m12 0h2m8 0h1m20 0h1m40 0h3m27 0h1m502 0h1m11 0h2m10 0h1m6 0h1m10 0h2m5 0h1m3 0h1m12 0h1m2 0h1M0 96m15 0h1m1 0h1m3 0h1m9 0h1m2 0h1m4 0h1m117 0h1m9 0h1m6 0h1m7 0h1m2 0h1m19 0h1m5 0h1m8 0h2m22 0h1m9 0h1m21 0h1m11 0h1m9 0h1m5 0h1m508 0h1m17 0h1m4 0h2m5 0h1m7 0h1m9 0h1m1 0h1m4 0h1m8 0h1m12 0h1m14 0h1M0 97m17 0h1m7 0h1m4 0h1m124 0h1m7 0h1m24 0h1m4 0h1m4 0h1m5 0h1m2 0h1m18 0h1m604 0h1m3 0h1m1 0h1m3 0h1m4 0h1m12 0h1m15 0h1m18 0h1M0 98m13 0h1m10 0h1m6 0h1m142 0h1m1 0h1m13 0h2m3 0h1m1 0h1m2 0h1m1 0h1m6 0h1m4 0h1m10 0h1m1 0h1m5 0h1m29 0h1m5 0h2m10 0h1m530 0h1m30 0h1m29 0h2m2 0h1m4 0h1m9 0h1m3 0h1m1 0h1m1 0h1M0 99m16 0h2m3 0h2m4 0h1m149 0h1m3 0h1m5 0h1m4 0h4m2 0h1m1 0h1m3 0h1m2 0h1m8 0h1m7 0h1m27 0h1m23 0h1m23 0h1m522 0h1m1 0h1m7 0h1m13 0h3m1 0h1m8 0h1m14 0h1m2 0h1m19 0h1m5 0h1M0 100m15 0h1m5 0h1m5 0h1m4 0h1m130 0h1m1 0h2m10 0h1m3 0h1m16 0h1m16 0h1m4 0h1m12 0h1m12 0h1m10 0h1m35 0h1m3 0h1m10 0h1m508 0h1m7 0h1m3 0h1m6 0h1m9 0h1m3 0h2m4 0h1m3 0h1m4 0h1m14 0h1m7 0h1m12 0h1m3 0h1M0 101m15 0h1m1 0h2m2 0h2m5 0h1m2 0h1m3 0h1m1 0h1m119 0h1m2 0h2m12 0h1m17 0h2m3 0h1m3 0h1m3 0h1m3 0h1m4 0h1m5 0h1m32 0h1m28 0h1m20 0h1m515 0h1m10 0h1m5 0h1m3 0h1m10 0h1m11 0h1m3 0h1m3 0h1m1 0h1m13 0h1m16 0h1M0 102m20 0h1m4 0h1m10 0h1m127 0h1m2 0h1m13 0h1m3 0h1m18 0h1m1 0h1m3 0h1m3 0h1m2 0h2m2 0h1m11 0h1m3 0h1m9 0h1m24 0h1m23 0h1m6 0h1m503 0h1m4 0h1m7 0h1m16 0h1m15 0h2m2 0h1m3 0h1m3 0h1m3 0h1m1 0h1m14 0h2M0 103m15 0h1m2 0h1m1 0h4m3 0h1m1 0h1m2 0h1m133 0h2m13 0h1m10 0h2m1 0h1m1 0h1m5 0h1m10 0h2m9 0h1m7 0h1m42 0h1m1 0h1m2 0h1m5 0h1m13 0h1m519 0h1m3 0h1m11 0h3m13 0h1m4 0h1m16 0h1m19 0h1M0 104m17 0h2m6 0h1m9 0h1m2 0h1m114 0h1m24 0h1m10 0h1m2 0h1m10 0h1m1 0h2m5 0h1m12 0h1m37 0h1m9 0h1m16 0h1m525 0h1m9 0h1m16 0h1m33 0h2M0 105m17 0h1m1 0h1m9 0h1m120 0h1m12 0h1m8 0h1m9 0h1m14 0h1m7 0h1m33 0h1m567 0h1m4 0h1m29 0h1m25 0h3m3 0h1m10 0h1m19 0h1M0 106m19 0h1m3 0h1m135 0h1m1 0h1m2 0h1m1 0h1m7 0h1m8 0h1m4 0h2m7 0h1m11 0h1m10 0h1m16 0h1m3 0h1m19 0h1m2 0h1m6 0h1m8 0h1m20 0h1m539 0h1m1 0h1m11 0h1m20 0h1m2 0h1m6 0h1m11 0h1m2 0h1M0 107m21 0h2m4 0h1m5 0h1m138 0h1m4 0h1m10 0h1m9 0h1m47 0h1m35 0h1m1 0h1m524 0h1m1 0h1m25 0h2m1 0h1m11 0h1m39 0h1m2 0h1m6 0h1M0 108m13 0h1m3 0h1m3 0h2m1 0h1m2 0h2m6 0h1m119 0h1m3 0h1m11 0h1m6 0h1m3 0h1m4 0h3m3 0h1m13 0h2m6 0h1m5 0h1m5 0h1m8 0h1m29 0h2m18 0h1m534 0h1m5 0h1m15 0h1m11 0h1m9 0h1m33 0h1M0 109m13 0h1m1 0h1m2 0h1m3 0h1m2 0h2m1 0h1m155 0h2m7 0h1m2 0h1m5 0h1m92 0h2m6 0h2m3 0h1m506 0h1m36 0h1m21 0h1m26 0h1m2 0h3M0 110m15 0h3m9 0h1m125 0h1m13 0h1m28 0h1m10 0h1m13 0h1m11 0h1m15 0h1m557 0h1m16 0h1m5 0h1m10 0h1m1 0h1m2 0h1m8 0h1m14 0h1m3 0h1m17 0h1m7 0h1m5 0h1M0 111m13 0h2m3 0h1m3 0h1m14 0h1m113 0h1m12 0h1m1 0h1m8 0h1m5 0h1m13 0h2m2 0h1m2 0h2m3 0h1m61 0h1m36 0h1m515 0h1m6 0h2m4 0h1m15 0h1m18 0h1m18 0h1m9 0h1M0 112m19 0h1m3 0h1m1 0h1m129 0h1m1 0h1m32 0h1m3 0h1m15 0h1m3 0h1m6 0h1m17 0h1m13 0h1m20 0h1m541 0h1m1 0h1m12 0h1m7 0h1m39 0h1m25 0h1" stroke="#4060f0" opacity="0.8"/><path d="M0 56m259 0h1m21 0h1m33 0h3m2 0h1m1 0h1m5 0h2m1 0h1m8 0h1m1 0h1m1 0h1m1 0h1m2 0h1m12 0h1m2 0h2m8 0h1m2 0h1m4 0h1m1 0h4m8 0h1m1 0h1m13 0h1m1 0h3m2 0h1m6 0h1m2 0h1m6 0h1m327 0h1m3 0h2m10 0h1m3 0h2m3 0h1m4 0h3m4 0h1m18 0h1m13 0h1m1 0h1m2 0h1m13 0h1M0 57m219 0h1m46 0h1m47 0h1m3 0h1m2 0h2m4 0h1m5 0h1m4 0h1m9 0h1m9 0h3m1 0h1m2 0h1m14 0h1m7 0h1m1 0h1m12 0h1m12 0h1m1 0h3m1 0h1m9 0h1m327 0h1m1 0h1m2 0h1m7 0h1m1 0h1m6 0h2m3 0h1m3 0h1m4 0h1M0 58m221 0h1m87 0h1m6 0h1m10 0h1m2 0h1m2 0h1m6 0h1m4 0h2m4 0h1m4 0h1m3 0h1m12 0h1m8 0h2m2 0h1m9 0h1m1 0h1m1 0h1m9 0h1m2 0h1m2 0h1m8 0h2m334 0h1m8 0h1m3 0h6m7 0h1m9 0h3m2 0h1m45 0h1m5 0h1m14 0h1m27 0h1M0 59m211 0h1m16 0h1m57 0h1m25 0h1m5 0h1m5 0h1m6 0h1m3 0h1m3 0h1m1 0h1m9 0h2m3 0h2m5 0h1m1 0h1m1 0h1m3 0h1m4 0h1m1 0h1m1 0h2m2 0h1m3 0h2m1 0h1m6 0h3m13 0h1m9 0h1m348 0h1m2 0h2m2 0h1m2 0h1m3 0h1m3 0h3m1 0h1m109 0h1M0 60m311 0h2m3 0h2m5 0h1m2 0h1m2 0h2m13 0h1m6 0h1m1 0h1m1 0h1m1 0h1m2 0h1m2 0h1m1 0h3m7 0h1m1 0h1m6 0h2m3 0h1m4 0h1m4 0h1m8 0h1m6 0h1m4 0h1m10 0h1m2 0h1m329 0h2m4 0h1m16 0h1m3 0h1m1 0h1m2 0h1m29 0h1m5 0h1M0 61m252 0h1m33 0h1m1 0h1m26 0h1m3 0h1m2 0h1m11 0h1m10 0h1m8 0h1m10 0h1m2 0h1m15 0h1m4 0h1m4 0h1m6 0h1m8 0h1m6 0h1m5 0h2m2 0h1m1 0h1m3 0h1m1 0h1m2 0h1m326 0h1m10 0h2m9 0h1m1 0h2m13 0h1m44 0h1m8 0h1m5 0h1M0 62m205 0h1m9 0h1m21 0h1m43 0h1m1 0h1m26 0h1m5 0h1m15 0h3m2 0h1m3 0h1m12 0h1m5 0h1m3 0h1m1 0h1m5 0h2m1 0h1m2 0h1m7 0h1m12 0h1m5 0h1m2 0h1m6 0h1m2 0h1m4 0h4m8 0h2m326 0h1m5 0h1m4 0h1m7 0h1m4 0h1m4 0h1m1 0h1m1 0h2m5 0h1m2 0h1m18 0h1m2 0h1m44 0h1m3 0h1m22 0h1M0 63m205 0h1m38 0h1m56 0h1m8 0h1m5 0h1m13 0h1m3 0h1m5 0h1m2 0h1m7 0h1m2 0h1m1 0h1m3 0h1m6 0h2m1 0h1m1 0h1m4 0h1m6 0h1m4 0h2m2 0h1m6 0h1m4 0h2m6 0h1m4 0h1m3 0h1m2 0h1m1 0h1m335 0h1m1 0h1m12 0h2m4 0h1m2 0h2m15 0h1m92 0h1m5 0h1M0 64m227 0h1m92 0h1m2 0h1m3 0h1m1 0h1m4 0h1m2 0h1m1 0h1m4 0h3m2 0h1m2 0h2m7 0h2m2 0h1m4 0h1m1 0h1m1 0h4m3 0h2m1 0h1m4 0h2m5 0h1m1 0h1m6 0h1m3 0h1m9 0h1m1 0h1m2 0h1m5 0h1m5 0h1m1 0h1m323 0h3m1 0h1m2 0h1m21 0h1m5 0h1m4 0h1m10 0h1m71 0h1M0 65m266 0h1m48 0h1m1 0h1m2 0h2m7 0h2m3 0h2m9 0h1m12 0h1m1 0h1m2 0h2m2 0h1m1 0h1m1 0h1m4 0h1m6 0h1m5 0h1m6 0h1m1 0h1m3 0h1m3 0h1m15 0h1m2 0h1m4 0h1m2 0h1m1 0h1m2 0h1m326 0h1m14 0h1m3 0h1m3 0h1m2 0h1m67 0h1m4 0h1m9 0h1m3 0h1m21 0h1M0 66m205 0h1m19 0h1m5 0h1m10 0h1m22 0h1m6 0h1m46 0h1m11 0h1m1 0h1m1 0h2m8 0h1m5 0h1m9 0h1m8 0h1m1 0h1m3 0h1m8 0h1m1 0h1m8 0h1m1 0h2m8 0h1m1 0h1m7 0h1m6 0h1m2 0h3m5 0h1m2 0h1m325 0h1m4 0h1m12 0h1m1 0h1m4 0h1m1 0h1m24 0h1m7 0h1m6 0h1M0 67m312 0h1m5 0h1m1 0h1m6 0h1m7 0h2m3 0h1m7 0h1m2 0h1m2 0h1m25 0h2m1 0h1m2 0h1m3 0h3m8 0h1m2 0h3m2 0h1m9 0h1m8 0h1m8 0h1m327 0h1m1 0h1m3 0h1m1 0h1m5 0h1m5 0h1m6 0h1m3 0h1m5 0h2m7 0h1m10 0h1m13 0h1M0 68m248 0h1m1 0h1m1 0h1m72 0h1m4 0h2m2 0h1m2 0h2m2 0h2m6 0h1m11 0h1m2 0h1m15 0h1m5 0h1m2 0h1m2 0h1m1 0h1m4 0h1m2 0h3m4 0h1m1 0h1m4 0h2m15 0h2m328 0h1m5 0h1m2 0h1m2 0h1m2 0h1m10 0h1m2 0h1m35 0h1m22 0h1m25 0h2M0 69m223 0h1m26 0h1m53 0h1m25 0h1m4 0h1m1 0h1m10 0h1m6 0h1m3 0h1m6 0h1m4 0h1m1 0h2m11 0h3m3 0h1m10 0h1m8 0h1m14 0h1m5 0h1m334 0h1m12 0h1m1 0h1m1 0h2m12 0h1m4 0h1M0 70m209 0h1m39 0h1m10 0h1m50 0h1m3 0h1m4 0h1m1 0h1m6 0h2m8 0h1m4 0h1m11 0h2m6 0h1m16 0h2m1 0h1m7 0h2m3 0h1m12 0h1m1 0h1m7 0h2m5 0h1m10 0h2m322 0h1m2 0h1m3 0h1m14 0h1m2 0h2m6 0h1m7 0h2m18 0h1m37 0h1m26 0h1m8 0h1M0 71m266 0h1m4 0h1m39 0h1m2 0h1m3 0h1m4 0h2m8 0h1m2 0h1m2 0h1m4 0h1m3 0h1m4 0h2m5 0h1m2 0h1m5 0h1m2 0h1m9 0h1m6 0h1m6 0h1m2 0h1m17 0h2m10 0h1m6 0h1m323 0h1m1 0h3m1 0h1m3 0h1m7 0h3m10 0h2m1 0h1m3 0h1m2 0h1m33 0h1m39 0h1m10 0h1M0 72m195 0h1m121 0h2m2 0h1m5 0h1m1 0h1m3 0h1m6 0h1m6 0h1m2 0h1m1 0h1m7 0h2m1 0h2m8 0h1m1 0h1m8 0h1m1 0h1m17 0h1m1 0h1m1 0h2m1 0h1m2 0h1m3 0h1m3 0h1m5 0h1m335 0h1m3 0h1m3 0h1m2 0h1m1 0h1m3 0h1m9 0h1m2 0h1m9 0h1m67 0h1m11 0h1m20 0h1M0 73m206 0h1m46 0h1m24 0h1m13 0h1m19 0h1m7 0h1m4 0h1m3 0h1m19 0h1m2 0h2m4 0h1m3 0h1m1 0h1m1 0h2m4 0h1m6 0h2m4 0h2m6 0h1m5 0h2m1 0h1m4 0h1m5 0h1m1 0h3m12 0h1m2 0h1m337 0h2m2 0h1m8 0h1m1 0h1m12 0h1m2 0h1m47 0h1m6 0h1m9 0h1m12 0h1M0 74m207 0h1m38 0h1m1 0h1m64 0h1m1 0h1m7 0h2m8 0h2m19 0h1m1 0h1m2 0h1m2 0h1m1 0h1m1 0h2m12 0h2m6 0h1m6 0h1m14 0h1m7 0h1m5 0h3m2 0h1m8 0h1m339 0h1m7 0h1m7 0h1m3 0h1m4 0h1m36 0h1m9 0h1m15 0h1m9 0h1M0 75m197 0h1m48 0h1m26 0h1m43 0h1m7 0h1m7 0h1m4 0h1m2 0h1m7 0h1m16 0h1m2 0h1m3 0h2m1 0h1m4 0h1m3 0h3m2 0h1m7 0h1m1 0h1m2 0h1m3 0h1m6 0h1m3 0h1m1 0h1m6 0h1m3 0h2m4 0h2m321 0h1m5 0h1m3 0h1m8 0h1m1 0h1m3 0h1m4 0h1m7 0h1m1 0h1m68 0h1m11 0h1M0 76m310 0h1m4 0h1m3 0h1m1 0h3m14 0h2m2 0h1m3 0h1m1 0h1m3 0h1m7 0h2m5 0h1m13 0h1m7 0h1m2 0h3m8 0h1m12 0h1m7 0h1m6 0h1m4 0h1m325 0h1m3 0h1m13 0h1m1 0h2m3 0h1m1 0h1m4 0h1m3 0h1m1 0h2m35 0h1m3 0h1m46 0h1m16 0h1M0 77m254 0h1m16 0h1m35 0h1m3 0h1m4 0h1m7 0h2m5 0h1m7 0h1m5 0h1m1 0h1m2 0h1m12 0h1m2 0h1m3 0h1m4 0h1m1 0h1m8 0h1m1 0h1m1 0h1m8 0h1m20 0h1m2 0h1m2 0h2m2 0h1m2 0h1m3 0h1m325 0h1m5 0h1m9 0h2m10 0h1m9 0h1m1 0h1m7 0h1m44 0h1m29 0h1m2 0h1M0 78m230 0h1m52 0h1m30 0h2m2 0h1m7 0h1m4 0h2m4 0h1m6 0h1m5 0h2m3 0h1m5 0h1m2 0h1m1 0h1m4 0h1m5 0h1m2 0h2m2 0h3m3 0h1m3 0h1m5 0h1m2 0h1m4 0h1m1 0h1m2 0h1m5 0h2m2 0h2m1 0h1m7 0h1m1 0h1m324 0h2m5 0h1m3 0h2m1 0h1m4 0h1m3 0h1m3 0h1m10 0h1m10 0h1m40 0h1m8 0h1m26 0h1m1 0h1M0 79m221 0h1m31 0h1m35 0h1m15 0h1m9 0h1m3 0h1m2 0h2m4 0h1m9 0h2m8 0h3m4 0h1m2 0h1m8 0h1m7 0h1m8 0h1m3 0h1m6 0h2m1 0h1m1 0h1m4 0h1m2 0h1m5 0h3m6 0h1m10 0h1m3 0h1m323 0h1m13 0h1m5 0h1m48 0h1m16 0h1m43 0h1M0 80m223 0h1m80 0h1m8 0h2m5 0h3m5 0h1m6 0h1m4 0h1m2 0h1m6 0h2m23 0h2m4 0h2m1 0h2m3 0h1m15 0h1m1 0h1m3 0h2m2 0h1m2 0h1m11 0h1m1 0h2m1 0h1m1 0h1m328 0h1m4 0h1m3 0h1m4 0h2m3 0h1m1 0h1m9 0h1m1 0h1m4 0h1m19 0h1m3 0h1m11 0h1m35 0h1m7 0h1M0 81m225 0h1m31 0h1m30 0h1m16 0h1m1 0h1m5 0h1m4 0h1m12 0h1m6 0h1m3 0h1m1 0h1m1 0h1m3 0h1m24 0h2m5 0h4m5 0h1m13 0h1m4 0h1m1 0h1m2 0h1m6 0h1m3 0h1m3 0h1m350 0h1m4 0h1m1 0h2m10 0h1m3 0h1m30 0h2m16 0h1M0 82m193 0h1m93 0h1m30 0h1m4 0h1m6 0h1m9 0h1m14 0h2m6 0h1m15 0h1m1 0h1m6 0h1m5 0h1m2 0h1m12 0h2m2 0h1m1 0h1m11 0h1m3 0h2m5 0h1m321 0h1m12 0h1m3 0h1m5 0h1m2 0h1m2 0h2m4 0h1m4 0h1m1 0h1m4 0h1m61 0h2m20 0h1m5 0h1M0 83m231 0h1m22 0h1m4 0h1m13 0h1m36 0h2m7 0h1m2 0h1m4 0h1m9 0h1m5 0h1m3 0h1m14 0h1m1 0h1m3 0h1m4 0h1m3 0h2m2 0h1m3 0h2m2 0h1m3 0h2m1 0h1m1 0h1m2 0h1m2 0h1m4 0h1m1 0h3m3 0h1m1 0h1m5 0h1m4 0h1m1 0h1m2 0h2m323 0h1m2 0h1m1 0h1m3 0h1m1 0h1m1 0h1m2 0h1m2 0h1m3 0h1m12 0h2m5 0h1m99 0h1M0 84m316 0h1m3 0h2m3 0h1m11 0h2m1 0h1m4 0h2m4 0h1m4 0h1m1 0h2m8 0h2m6 0h1m9 0h2m4 0h1m11 0h2m2 0h1m1 0h1m3 0h2m1 0h1m4 0h1m16 0h1m322 0h1m6 0h1m1 0h1m4 0h1m1 0h1m1 0h1m7 0h1m3 0h1m34 0h1m6 0h1M0 85m202 0h1m8 0h1m16 0h1m28 0h1m11 0h1m23 0h2m1 0h2m19 0h1m10 0h2m2 0h2m3 0h2m1 0h1m9 0h1m2 0h2m1 0h1m12 0h1m5 0h1m1 0h1m5 0h1m1 0h1m3 0h1m1 0h2m8 0h1m3 0h2m4 0h1m5 0h2m2 0h1m343 0h1m1 0h1m5 0h1m1 0h1m5 0h1m11 0h1m3 0h1m5 0h1m15 0h1m39 0h1m2 0h1m41 0h1M0 86m221 0h1m7 0h1m41 0h1m18 0h1m20 0h1m1 0h1m2 0h1m4 0h1m5 0h1m7 0h2m1 0h1m4 0h3m5 0h1m3 0h1m2 0h2m9 0h2m3 0h1m9 0h3m3 0h1m3 0h1m6 0h1m2 0h1m6 0h1m6 0h2m4 0h1m9 0h3m325 0h1m3 0h1m1 0h2m4 0h1m6 0h1m15 0h2m21 0h1m53 0h1M0 87m311 0h1m2 0h1m1 0h1m4 0h1m2 0h1m11 0h3m3 0h1m10 0h1m1 0h1m4 0h2m5 0h2m4 0h1m3 0h1m9 0h1m10 0h2m4 0h1m1 0h1m8 0h1m1 0h1m12 0h1m4 0h1m3 0h1m323 0h1m1 0h1m2 0h1m2 0h1m5 0h1m1 0h1m14 0h1m5 0h1m2 0h1m35 0h1m32 0h1M0 88m280 0h1m4 0h1m2 0h1m28 0h1m1 0h1m3 0h1m4 0h4m6 0h1m5 0h1m6 0h2m11 0h1m2 0h1m4 0h1m3 0h1m3 0h2m6 0h2m1 0h1m4 0h1m1 0h1m10 0h1m13 0h1m1 0h1m4 0h1m3 0h1m326 0h1m2 0h1m1 0h1m9 0h1m3 0h1m12 0h1m5 0h2m1 0h1m71 0h1M0 89m221 0h1m77 0h1m12 0h1m6 0h1m6 0h1m20 0h1m3 0h1m3 0h1m13 0h2m4 0h1m8 0h1m2 0h1m1 0h1m4 0h1m2 0h1m7 0h1m2 0h1m1 0h1m2 0h1m2 0h1m1 0h1m2 0h1m8 0h1m7 0h1m336 0h2m8 0h1m2 0h2m1 0h1m2 0h1m3 0h1m12 0h1m58 0h1m29 0h1M0 90m235 0h1m3 0h1m13 0h1m60 0h1m10 0h1m6 0h1m11 0h1m8 0h1m1 0h2m3 0h1m8 0h1m14 0h1m6 0h1m1 0h1m5 0h1m4 0h1m8 0h2m1 0h1m1 0h1m1 0h1m13 0h1m327 0h1m7 0h1m6 0h1m5 0h2m40 0h1m30 0h1m9 0h1M0 91m276 0h1m19 0h1m5 0h1m12 0h1m1 0h2m3 0h1m1 0h1m1 0h1m3 0h1m7 0h1m11 0h1m4 0h1m10 0h1m20 0h1m3 0h2m7 0h1m3 0h2m3 0h1m4 0h1m3 0h1m1 0h1m1 0h1m1 0h2m1 0h1m4 0h1m327 0h1m9 0h1m4 0h1m1 0h1m3 0h2m1 0h1m3 0h1m4 0h1m1 0h1m1 0h2m3 0h1m12 0h1m22 0h1m29 0h1M0 92m225 0h1m57 0h1m5 0h1m25 0h2m5 0h1m3 0h1m3 0h1m2 0h1m4 0h1m4 0h1m1 0h1m4 0h1m2 0h1m4 0h1m2 0h1m1 0h1m3 0h1m6 0h1m2 0h1m7 0h1m4 0h1m4 0h1m9 0h1m5 0h2m4 0h1m6 0h3m2 0h1m1 0h1m333 0h1m7 0h1m16 0h1m1 0h1m2 0h1m102 0h1M0 93m261 0h1m42 0h1m8 0h2m18 0h1m1 0h1m1 0h2m7 0h1m4 0h1m2 0h1m3 0h1m6 0h1m3 0h1m4 0h1m2 0h3m4 0h1m9 0h2m1 0h1m2 0h2m1 0h1m6 0h1m2 0h1m13 0h2m7 0h1m1 0h1m326 0h1m2 0h1m1 0h1m1 0h3m6 0h1m18 0h1m8 0h1m3 0h1m3 0h1M0 94m272 0h1m43 0h1m7 0h1m3 0h1m3 0h1m6 0h1m6 0h1m14 0h1m10 0h1m4 0h2m6 0h1m1 0h1m3 0h1m3 0h1m6 0h1m3 0h2m2 0h1m4 0h1m4 0h1m4 0h2m4 0h3m326 0h1m12 0h3m4 0h1m1 0h1m1 0h1m2 0h2m13 0h2m45 0h1m5 0h1m8 0h1M0 95m193 0h1m56 0h1m61 0h1m1 0h1m3 0h1m5 0h1m8 0h1m1 0h1m2 0h1m6 0h1m7 0h1m2 0h1m8 0h1m7 0h3m9 0h1m3 0h2m4 0h1m1 0h1m4 0h1m5 0h1m5 0h2m23 0h1m320 0h1m1 0h1m1 0h1m9 0h1m2 0h1m1 0h4m4 0h1m2 0h1m2 0h1m7 0h1m18 0h1m5 0h1m3 0h1m42 0h1m4 0h1M0 96m194 0h1m51 0h1m54 0h1m13 0h1m2 0h1m3 0h1m2 0h1m4 0h1m4 0h1m8 0h2m5 0h1m2 0h1m7 0h1m13 0h1m8 0h1m4 0h2m7 0h1m9 0h1m1 0h1m1 0h2m3 0h1m2 0h1m14 0h1m324 0h1m2 0h3m3 0h2m9 0h2m1 0h1m6 0h1m8 0h1m1 0h1m17 0h1m26 0h1m33 0h1m17 0h1M0 97m249 0h1m7 0h1m59 0h1m10 0h2m2 0h2m4 0h3m4 0h1m5 0h1m1 0h1m6 0h1m3 0h1m2 0h1m3 0h1m12 0h1m1 0h1m1 0h1m5 0h1m4 0h1m1 0h1m4 0h1m4 0h1m6 0h1m4 0h1m8 0h2m2 0h2m332 0h3m2 0h1m2 0h1m6 0h1m1 0h2m4 0h1m83 0h1M0 98m310 0h1m4 0h2m2 0h1m12 0h1m8 0h2m1 0h1m4 0h1m6 0h2m10 0h1m2 0h1m5 0h1m1 0h1m6 0h1m2 0h1m1 0h2m13 0h1m3 0h2m4 0h1m1 0h1m5 0h2m1 0h1m6 0h2m337 0h1m1 0h1m4 0h1m3 0h3m7 0h1m4 0h1m18 0h1m5 0h1m17 0h1m35 0h1m27 0h1M0 99m225 0h1m60 0h1m23 0h1m1 0h1m2 0h1m3 0h1m6 0h1m1 0h1m6 0h1m4 0h1m2 0h1m2 0h1m24 0h1m6 0h1m7 0h2m1 0h1m2 0h1m4 0h1m3 0h2m11 0h1m2 0h1m6 0h3m10 0h1m326 0h1m3 0h1m3 0h1m1 0h1m6 0h1m2 0h2m8 0h1m2 0h3m89 0h1M0 100m199 0h1m38 0h1m75 0h1m3 0h1m10 0h1m6 0h1m1 0h1m1 0h1m2 0h1m1 0h1m6 0h1m7 0h1m2 0h2m3 0h1m1 0h2m2 0h1m5 0h1m1 0h1m1 0h3m4 0h1m8 0h2m4 0h2m1 0h1m6 0h1m5 0h1m6 0h3m2 0h1m328 0h1m4 0h1m1 0h1m23 0h2m2 0h1m1 0h1m1 0h1m35 0h1m5 0h1m7 0h1m37 0h1M0 101m321 0h1m2 0h1m7 0h1m1 0h1m15 0h1m1 0h1m2 0h1m3 0h3m3 0h1m1 0h1m1 0h1m1 0h1m5 0h3m9 0h1m2 0h3m2 0h1m3 0h1m3 0h2m1 0h1m3 0h1m8 0h1m2 0h1m2 0h1m338 0h1m15 0h1m2 0h1m6 0h1m3 0h1m47 0h1m44 0h1m8 0h1M0 102m231 0h1m12 0h1m8 0h1m13 0h1m26 0h1m18 0h1m7 0h1m4 0h1m5 0h1m9 0h1m5 0h1m2 0h2m3 0h1m2 0h1m4 0h1m4 0h1m6 0h1m5 0h3m8 0h1m3 0h2m6 0h1m8 0h1m3 0h1m3 0h1m7 0h1m3 0h1m1 0h1m2 0h1m327 0h2m5 0h1m11 0h1m1 0h1m4 0h1m7 0h1M0 103m226 0h1m41 0h1m8 0h1m15 0h1m30 0h1m1 0h1m3 0h1m6 0h1m3 0h1m5 0h1m1 0h1m5 0h1m4 0h1m11 0h1m8 0h1m7 0h1m4 0h1m10 0h1m6 0h1m1 0h1m12 0h1m2 0h1m3 0h3m330 0h3m7 0h2m12 0h1m5 0h1m1 0h1m9 0h1m58 0h1m10 0h1m10 0h1m6 0h1M0 104m243 0h1m49 0h1m6 0h1m3 0h1m5 0h1m2 0h2m3 0h1m6 0h1m3 0h1m1 0h2m4 0h1m10 0h3m1 0h1m3 0h1m6 0h1m4 0h1m11 0h1m5 0h2m9 0h1m10 0h2m5 0h1m4 0h1m9 0h1m1 0h1m2 0h1m3 0h1m322 0h1m1 0h1m9 0h3m5 0h1m1 0h2m13 0h1m8 0h1m31 0h1m9 0h1m7 0h1m6 0h2m34 0h1M0 105m212 0h1m79 0h1m18 0h1m1 0h3m2 0h1m11 0h1m3 0h1m7 0h1m3 0h1m4 0h1m4 0h2m3 0h1m1 0h1m24 0h1m4 0h2m3 0h2m9 0h1m2 0h1m5 0h1m7 0h1m6 0h1m330 0h1m3 0h1m5 0h2m7 0h2m4 0h1m3 0h2m1 0h2m3 0h1m2 0h1m10 0h1m35 0h1m15 0h1m19 0h1M0 106m222 0h1m19 0h1m68 0h2m1 0h1m2 0h1m4 0h1m4 0h1m6 0h1m12 0h1m11 0h2m11 0h1m1 0h1m5 0h3m5 0h2m1 0h1m2 0h1m4 0h1m9 0h1m1 0h1m9 0h1m5 0h1m1 0h1m331 0h1m4 0h2m1 0h1m5 0h1m11 0h1m12 0h1M0 107m224 0h1m29 0h1m8 0h1m30 0h1m6 0h1m9 0h1m1 0h1m6 0h2m17 0h2m2 0h1m11 0h1m8 0h1m7 0h1m1 0h2m5 0h1m3 0h1m4 0h1m2 0h1m4 0h1m3 0h1m9 0h1m1 0h1m6 0h2m8 0h2m327 0h1m3 0h1m1 0h2m2 0h1m3 0h2m6 0h2m1 0h1m5 0h1m3 0h1m2 0h1m34 0h1m52 0h1M0 108m285 0h1m25 0h1m2 0h1m12 0h1m2 0h1m1 0h1m17 0h3m10 0h1m1 0h1m2 0h1m12 0h1m9 0h1m2 0h1m4 0h1m1 0h1m9 0h1m1 0h1m1 0h1m22 0h1m321 0h2m4 0h2m1 0h1m3 0h1m1 0h1m5 0h1m3 0h1m6 0h1m45 0h1m5 0h2m25 0h1M0 109m311 0h3m3 0h1m18 0h1m7 0h1m3 0h1m4 0h1m2 0h1m4 0h2m5 0h1m9 0h2m6 0h1m2 0h1m4 0h1m3 0h1m1 0h3m8 0h1m1 0h2m4 0h1m4 0h1m10 0h1m2 0h1m328 0h2m2 0h1m1 0h1m11 0h1m4 0h1m4 0h1m1 0h1m2 0h1m22 0h1m55 0h1m10 0h1M0 110m251 0h1m31 0h1m28 0h1m7 0h1m7 0h1m19 0h1m6 0h1m4 0h2m2 0h1m3 0h1m4 0h1m3 0h1m1 0h1m10 0h1m7 0h3m2 0h1m12 0h1m6 0h1m2 0h1m3 0h1m1 0h1m330 0h1m6 0h1m2 0h1m1 0h2m1 0h1m1 0h2m4 0h1m1 0h1m2 0h1m7 0h1m2 0h1m8 0h1m9 0h1m47 0h1m2 0h1M0 111m226 0h1m14 0h1m55 0h1m14 0h1m9 0h3m26 0h1m6 0h1m5 0h1m2 0h1m11 0h1m12 0h1m4 0h1m11 0h3m1 0h1m4 0h2m3 0h3m1 0h1m8 0h1m1 0h1m325 0h3m1 0h1m2 0h1m2 0h2m2 0h2m5 0h1m1 0h1m3 0h2m1 0h1m8 0h2m6 0h1m19 0h1m44 0h1m10 0h1m8 0h1M0 112m312 0h1m1 0h1m1 0h1m3 0h3m3 0h1m1 0h1m4 0h1m2 0h1m2 0h1m7 0h1m2 0h1m5 0h2m2 0h1m2 0h1m5 0h1m1 0h1m2 0h2m6 0h1m10 0h1m1 0h1m3 0h1m3 0h2m2 0h1m1 0h1m11 0h1m7 0h1m9 0h1m321 0h1m3 0h1m10 0h1m10 0h1m3 0h1m4 0h1m4 0h2m4 0h1m18 0h1m19 0h1" stroke="#06104e" opacity="0.55"/><path d="M0 56m446 0h10m23 0h6m31 0h6m134 0h6m2 0h6m9 0h6m2 0h10m53 0h6M0 57m489 0h6m22 0h6m41 0h6m15 0h6m5 0h6m70 0h6m39 0h6m41 0h6M0 58m450 0h6m23 0h6m19 0h6m36 0h6m24 0h6m23 0h6m117 0h6m41 0h6M0 59m470 0h6m85 0h6m16 0h6m17 0h6m9 0h6m39 0h6m41 0h6m23 0h11m30 0h6M0 60m544 0h6m40 0h6m13 0h6m24 0h6m59 0h6m31 0h6m17 0h6M0 61m453 0h6m42 0h6m33 0h6m78 0h6m78 0h6m1 0h6m22 0h9m31 0h6M0 62m536 0h6m139 0h10m3 0h6M0 63m430 0h6m2 0h11m75 0h10m17 0h6m136 0h6m43 0h6M0 64m440 0h6m91 0h11m37 0h6m2 0h6m33 0h6m1 0h6m35 0h6m6 0h6m13 0h6m42 0h6M0 65m461 0h6m60 0h6m60 0h6m49 0h6m44 0h6m5 0h7m3 0h6m16 0h6M0 66m494 0h6m51 0h6m97 0h6m4 0h6m16 0h6m1 0h6m6 0h6m20 0h6m6 0h6m19 0h6M0 67m451 0h6m62 0h6m3 0h7m32 0h6m98 0h11m74 0h6M0 68m466 0h11m38 0h6m17 0h6m13 0h6m38 0h6m47 0h6m15 0h6m19 0h6m43 0h6M0 69m445 0h6m23 0h6m59 0h6m106 0h6m72 0h6m22 0h8m19 0h6M0 70m450 0h6m9 0h6m61 0h6m6 0h6m3 0h12m29 0h6m7 0h6m18 0h6m33 0h6m54 0h6m6 0h6m17 0h6M0 71m454 0h6m55 0h6m3 0h6m34 0h6m195 0h6M0 72m473 0h8m62 0h6m91 0h6M0 73m627 0h6m42 0h6m22 0h6M0 74m479 0h6m30 0h6m105 0h6m26 0h6M0 75m457 0h6m18 0h6m1 0h6m19 0h6m125 0h6m51 0h6m27 0h6m33 0h6M0 76m463 0h6m12 0h6m48 0h6m6 0h6m34 0h6m46 0h6m20 0h6m112 0h6M0 77m625 0h6m27 0h6m69 0h10m42 0h6M0 78m480 0h6m6 0h6m19 0h10m37 0h6m31 0h6m78 0h16m36 0h6m33 0h6M0 79m441 0h6m31 0h6m32 0h6m79 0h6m21 0h6m2 0h6m10 0h6m131 0h15M0 80m469 0h6m1 0h6m9 0h6m56 0h6m17 0h6m27 0h6m22 0h6m19 0h6m59 0h7m33 0h6M0 81m433 0h6m3 0h6m103 0h6m1 0h6m6 0h9m19 0h6m2 0h6m12 0h6m8 0h6m59 0h6m62 0h6M0 82m451 0h6m54 0h6m32 0h6m48 0h6m66 0h6m96 0h6M0 83m529 0h6m61 0h6m15 0h6m10 0h6m21 0h6m88 0h6M0 84m442 0h6m39 0h6m15 0h6m23 0h6m27 0h6m40 0h6m28 0h6m44 0h6m3 0h6M0 85m468 0h6m19 0h6m83 0h6m27 0h6m16 0h6m5 0h6m52 0h7m10 0h6m2 0h9m12 0h6M0 86m489 0h6m79 0h6m22 0h6m6 0h6m2 0h6m84 0h6m11 0h6m13 0h6m5 0h6m16 0h6M0 87m433 0h6m97 0h6m16 0h6m22 0h6m141 0h6m38 0h6M0 88m599 0h6m32 0h6m44 0h10m17 0h6m8 0h6m38 0h6M0 89m465 0h6m81 0h6m41 0h6m8 0h6m32 0h6m66 0h6m59 0h7M0 90m431 0h6m15 0h6m93 0h6m2 0h6m38 0h6m57 0h6M0 91m434 0h6m4 0h6m129 0h6m15 0h6m11 0h6m45 0h6m48 0h6M0 92m523 0h6m75 0h6m170 0h6M0 93m583 0h6m25 0h6m17 0h6m93 0h6M0 94m464 0h6m44 0h6m38 0h6m97 0h6m125 0h6M0 95m508 0h6m25 0h6m17 0h12m80 0h6m62 0h6m49 0h6M0 96m475 0h8m35 0h6m1 0h6m55 0h6m38 0h6m2 0h6m1 0h6m10 0h9m105 0h6M0 97m441 0h6m2 0h6m4 0h6m55 0h6m66 0h6m2 0h6m128 0h6m19 0h9M0 98m471 0h6m155 0h6m32 0h6m27 0h9m33 0h15m5 0h6m10 0h6M0 99m457 0h6m34 0h6m30 0h6m93 0h6m19 0h6m2 0h6m13 0h6m10 0h6m5 0h6M0 100m452 0h6m20 0h6m17 0h6m2 0h6m64 0h6m14 0h6m160 0h6M0 101m447 0h6m110 0h6m24 0h6m88 0h6m56 0h8m16 0h6M0 102m442 0h6m48 0h6m4 0h6m6 0h6m8 0h6m28 0h6m54 0h6m10 0h6m2 0h6m85 0h6m21 0h6M0 103m439 0h6m1 0h6m179 0h6m9 0h6m15 0h6m5 0h6m2 0h6m22 0h6m20 0h6m6 0h6m32 0h6M0 104m566 0h6m88 0h6m129 0h6M0 105m507 0h6m172 0h6m22 0h6M0 106m471 0h6m39 0h6m5 0h6m1 0h6m43 0h6m185 0h6M0 107m498 0h6m31 0h6m26 0h6m11 0h6m10 0h12m85 0h6m72 0h8M0 108m441 0h6m25 0h6m67 0h6m19 0h6M0 109m440 0h7m28 0h6m21 0h6m27 0h6m55 0h6m146 0h6M0 110m499 0h6m204 0h6m8 0h6m43 0h6m3 0h6M0 111m472 0h6m4 0h9m73 0h10m127 0h6m92 0h6M0 112m459 0h6m11 0h6m69 0h6m3 0h6m8 0h6m11 0h6m6 0h6m1 0h6m87 0h12m18 0h6m3 0h6" stroke="#0b1a74" opacity="0.6"/><path d="M0 56m326 0h1m1 0h1m8 0h1m1 0h1m4 0h1m7 0h1m18 0h1m8 0h1m2 0h1m20 0h1m17 0h1m1 0h1m6 0h1m3 0h1m3 0h1m30 0h1m24 0h1m56 0h3m2 0h1m3 0h1m22 0h1m11 0h1m17 0h1m14 0h1m18 0h1m31 0h1m10 0h1m51 0h1m3 0h1m15 0h1m8 0h1m1 0h1m7 0h1m2 0h1m1 0h2m2 0h1M0 57m312 0h1m15 0h1m4 0h2m1 0h1m4 0h1m4 0h1m8 0h1m2 0h1m40 0h1m5 0h1m9 0h1m4 0h1m16 0h1m27 0h1m14 0h1m13 0h1m58 0h1m2 0h1m6 0h1m38 0h1m10 0h1m27 0h1m6 0h1m3 0h1m25 0h1m6 0h1m38 0h1m6 0h1m9 0h1m15 0h1m2 0h1m10 0h1m4 0h1m6 0h3m1 0h2M0 58m311 0h1m5 0h1m43 0h2m26 0h1m2 0h1m2 0h1m4 0h1m7 0h1m10 0h1m2 0h1m34 0h1m9 0h1m25 0h2m1 0h1m12 0h1m17 0h1m16 0h1m7 0h2m8 0h1m19 0h1m28 0h1m35 0h1m5 0h1m3 0h1m23 0h1m12 0h1m18 0h1m16 0h1m12 0h1m39 0h3m1 0h1M0 59m314 0h1m3 0h1m5 0h1m9 0h1m10 0h1m10 0h1m19 0h1m2 0h3m9 0h1m5 0h1m2 0h1m7 0h1m7 0h2m1 0h2m2 0h1m70 0h1m2 0h1m11 0h1m11 0h1m12 0h1m17 0h1m1 0h2m13 0h1m41 0h1m19 0h1m35 0h2m7 0h1m12 0h1m13 0h1m26 0h1m13 0h1m25 0h1m1 0h1m3 0h1m9 0h1m1 0h1M0 60m311 0h2m2 0h1m9 0h1m2 0h1m11 0h1m2 0h1m6 0h1m41 0h1m17 0h1m13 0h1m1 0h1m5 0h1m7 0h1m24 0h1m1 0h2m3 0h1m8 0h1m12 0h1m30 0h1m24 0h2m1 0h2m12 0h1m9 0h1m13 0h1m1 0h1m7 0h1m4 0h1m4 0h1m6 0h1m29 0h1m14 0h1m62 0h1m4 0h1m11 0h2m25 0h1m1 0h1m1 0h2m6 0h1m2 0h2M0 61m320 0h1m13 0h1m4 0h1m4 0h1m19 0h1m12 0h1m4 0h1m3 0h1m4 0h1m9 0h1m22 0h2m8 0h1m2 0h1m1 0h1m17 0h1m36 0h2m10 0h1m46 0h1m2 0h1m27 0h1m11 0h1m18 0h1m24 0h1m6 0h3m35 0h1m3 0h1m1 0h1m3 0h2m43 0h1m3 0h1m27 0h3M0 62m322 0h1m5 0h1m5 0h1m10 0h1m5 0h2m1 0h1m20 0h1m18 0h1m2 0h1m3 0h2m6 0h1m4 0h1m1 0h1m11 0h1m8 0h1m31 0h1m3 0h2m1 0h1m19 0h2m5 0h1m6 0h1m40 0h3m68 0h1m44 0h1m11 0h1m8 0h1m19 0h1m63 0h1m1 0h1m7 0h1M0 63m337 0h1m8 0h1m13 0h2m15 0h2m3 0h1m5 0h1m12 0h1m2 0h1m29 0h1m1 0h1m37 0h1m16 0h1m3 0h2m34 0h1m6 0h1m14 0h1m22 0h1m63 0h1m31 0h1m19 0h1m19 0h1m9 0h2m17 0h1m9 0h1m20 0h1m1 0h1m8 0h1m2 0h1m1 0h2M0 64m322 0h1m4 0h1m7 0h1m8 0h1m14 0h1m20 0h1m6 0h1m8 0h1m6 0h1m12 0h1m13 0h1m4 0h1m1 0h1m2 0h1m16 0h1m16 0h1m11 0h1m9 0h1m9 0h1m4 0h1m12 0h1m22 0h1m4 0h1m1 0h1m4 0h1m8 0h1m17 0h1m7 0h1m30 0h1m3 0h1m2 0h1m10 0h1m31 0h1m15 0h1m26 0h1m20 0h1m1 0h1m30 0h1m1 0h1m7 0h2M0 65m316 0h1m4 0h1m3 0h1m3 0h1m4 0h1m1 0h2m24 0h1m19 0h1m9 0h1m1 0h2m10 0h1m2 0h1m2 0h1m51 0h1m25 0h1m2 0h1m2 0h1m5 0h1m5 0h1m9 0h1m6 0h1m25 0h1m8 0h1m4 0h1m42 0h1m1 0h1m8 0h1m28 0h1m42 0h1m11 0h1m8 0h2m12 0h1m5 0h1m10 0h1m26 0h3m9 0h3m1 0h1m1 0h1M0 66m313 0h1m8 0h1m1 0h1m8 0h1m2 0h1m11 0h1m4 0h1m13 0h1m4 0h1m1 0h1m1 0h1m12 0h1m7 0h2m1 0h1m15 0h1m9 0h1m6 0h1m1 0h1m11 0h1m10 0h1m9 0h1m5 0h1m18 0h2m11 0h1m16 0h1m17 0h1m8 0h1m1 0h3m4 0h1m12 0h1m27 0h1m8 0h1m37 0h2m2 0h1m6 0h1m47 0h1m10 0h1m8 0h1m13 0h1m1 0h1m1 0h1m26 0h1m2 0h1m4 0h1m5 0h1M0 67m331 0h1m3 0h1m25 0h2m4 0h1m10 0h1m15 0h1m4 0h1m8 0h1m1 0h1m4 0h1m1 0h2m5 0h1m5 0h1m9 0h1m30 0h1m25 0h1m8 0h1m10 0h1m2 0h1m6 0h1m2 0h1m21 0h1m1 0h1m35 0h1m19 0h1m18 0h1m67 0h1m8 0h1m10 0h1m42 0h1m9 0h1m3 0h1m7 0h1M0 68m315 0h1m21 0h1m10 0h1m3 0h1m11 0h2m7 0h1m13 0h1m11 0h1m2 0h1m2 0h1m14 0h1m14 0h1m3 0h1m38 0h1m15 0h1m48 0h1m6 0h2m1 0h1m24 0h1m2 0h1m7 0h1m2 0h1m55 0h1m41 0h2m9 0h1m6 0h1m5 0h1m15 0h1m9 0h2m1 0h2m21 0h1m2 0h2m1 0h2m8 0h2m3 0h2M0 69m315 0h1m12 0h1m6 0h2m3 0h1m3 0h1m5 0h1m4 0h1m4 0h1m5 0h2m9 0h1m8 0h1m10 0h1m2 0h1m1 0h1m2 0h1m1 0h1m6 0h1m1 0h2m2 0h1m48 0h1m17 0h1m6 0h3m30 0h2m4 0h1m9 0h1m1 0h1m4 0h2m2 0h1m23 0h1m1 0h1m11 0h1m18 0h1m25 0h2m8 0h1m12 0h1m73 0h1m15 0h1m19 0h1m2 0h1m8 0h2m2 0h1M0 70m313 0h1m12 0h1m1 0h1m10 0h1m11 0h1m1 0h1m3 0h1m7 0h1m25 0h2m6 0h1m3 0h1m1 0h1m6 0h1m20 0h1m10 0h1m22 0h1m28 0h2m8 0h1m26 0h1m17 0h2m1 0h1m54 0h1m15 0h1m65 0h1m19 0h1m14 0h1m11 0h1m4 0h2m3 0h1m34 0h2M0 71m320 0h1m7 0h1m15 0h1m7 0h1m10 0h1m2 0h1m1 0h1m6 0h1m4 0h1m2 0h1m10 0h1m4 0h1m2 0h1m4 0h1m12 0h1m56 0h1m28 0h1m5 0h1m11 0h1m9 0h1m15 0h5m12 0h1m27 0h1m16 0h1m4 0h1m29 0h1m58 0h1m33 0h1m2 0h1m7 0h1m21 0h2m8 0h1m1 0h1M0 72m336 0h1m5 0h1m22 0h1m2 0h2m12 0h1m7 0h2m19 0h1m3 0h1m7 0h1m9 0h2m22 0h1m13 0h1m15 0h1m6 0h2m1 0h1m5 0h1m5 0h1m13 0h1m37 0h1m30 0h1m17 0h1m39 0h1m14 0h1m2 0h1m21 0h2m9 0h1m19 0h1m9 0h1m9 0h1m1 0h1m27 0h1m1 0h2m6 0h2m4 0h1M0 73m317 0h1m5 0h2m10 0h1m2 0h1m2 0h1m1 0h1m2 0h1m2 0h1m10 0h1m2 0h1m5 0h1m9 0h1m10 0h1m3 0h1m8 0h1m3 0h2m5 0h1m31 0h1m13 0h1m54 0h1m1 0h1m15 0h1m3 0h1m11 0h1m1 0h2m16 0h1m1 0h1m12 0h1m24 0h1m30 0h1m82 0h1m17 0h1m1 0h2m26 0h2m10 0h1m4 0h1m6 0h1M0 74m314 0h2m8 0h3m8 0h1m1 0h1m13 0h1m19 0h1m8 0h1m14 0h1m8 0h1m10 0h1m15 0h1m5 0h1m67 0h1m17 0h1m23 0h1m2 0h1m1 0h1m1 0h1m16 0h1m37 0h2m20 0h1m16 0h1m33 0h1m6 0h1m14 0h1m11 0h1m17 0h1m5 0h1m1 0h1m1 0h1m25 0h1m12 0h2m2 0h1m6 0h1M0 75m316 0h1m4 0h1m11 0h1m5 0h1m1 0h1m4 0h1m14 0h1m15 0h1m3 0h1m8 0h1m7 0h1m5 0h1m5 0h1m5 0h1m6 0h1m6 0h1m3 0h1m12 0h1m4 0h1m11 0h1m8 0h1m10 0h1m4 0h1m6 0h1m53 0h1m2 0h1m12 0h1m42 0h2m112 0h1m19 0h1m9 0h1m11 0h1m5 0h3m5 0h1m8 0h1m1 0h1M0 76m312 0h1m14 0h1m11 0h1m2 0h1m1 0h1m8 0h1m43 0h1m2 0h1m6 0h1m5 0h1m3 0h1m6 0h1m2 0h1m37 0h1m29 0h1m1 0h1m15 0h1m2 0h1m4 0h1m29 0h2m17 0h1m3 0h1m18 0h1m14 0h1m37 0h1m32 0h1m6 0h1m34 0h1m19 0h1m1 0h1m4 0h1m22 0h1M0 77m314 0h2m27 0h1m20 0h1m4 0h1m3 0h1m18 0h1m6 0h1m5 0h1m8 0h1m1 0h1m11 0h2m3 0h1m31 0h1m5 0h1m11 0h1m11 0h1m15 0h1m27 0h1m10 0h1m10 0h1m3 0h1m3 0h1m30 0h1m48 0h1m29 0h1m61 0h1m2 0h1m25 0h1m1 0h2m8 0h1m1 0h1m2 0h1m2 0h1M0 78m319 0h1m5 0h1m34 0h1m2 0h1m4 0h2m8 0h1m5 0h1m3 0h2m13 0h1m7 0h1m7 0h1m39 0h1m13 0h1m76 0h2m40 0h1m16 0h1m16 0h1m13 0h1m23 0h1m26 0h1m31 0h1m7 0h1m8 0h1m12 0h1m2 0h1m9 0h1m6 0h1M0 79m315 0h1m9 0h1m5 0h1m3 0h1m17 0h1m6 0h1m1 0h1m3 0h1m2 0h1m3 0h1m2 0h1m1 0h1m1 0h1m6 0h1m4 0h1m9 0h1m11 0h1m1 0h1m15 0h1m18 0h1m16 0h1m24 0h4m7 0h1m1 0h1m7 0h1m4 0h1m5 0h1m24 0h1m18 0h1m9 0h1m7 0h1m7 0h1m41 0h1m9 0h1m33 0h1m10 0h1m15 0h1m3 0h2m20 0h1m9 0h1m21 0h1m3 0h1m1 0h1m1 0h1m7 0h3m3 0h1M0 80m330 0h1m8 0h1m3 0h1m3 0h1m47 0h1m4 0h2m4 0h1m8 0h1m8 0h1m1 0h1m12 0h1m15 0h1m49 0h1m15 0h1m5 0h2m21 0h2m2 0h1m24 0h1m13 0h1m14 0h1m5 0h1m2 0h1m10 0h1m18 0h1m9 0h1m16 0h1m14 0h1m24 0h1m4 0h1m2 0h1m17 0h1m2 0h2m25 0h2m10 0h2m2 0h1m8 0h1M0 81m316 0h1m4 0h1m1 0h2m1 0h1m4 0h2m8 0h1m15 0h1m13 0h1m14 0h1m1 0h1m12 0h1m2 0h1m22 0h1m10 0h1m14 0h1m10 0h2m2 0h1m24 0h2m2 0h1m27 0h1m24 0h1m1 0h1m77 0h1m1 0h1m15 0h1m22 0h1m32 0h1m28 0h1m6 0h1m3 0h1m25 0h1m1 0h2m4 0h1m3 0h1m2 0h2m1 0h1M0 82m326 0h1m8 0h1m40 0h1m6 0h1m2 0h1m4 0h1m5 0h1m17 0h1m3 0h1m14 0h1m31 0h2m5 0h1m21 0h1m15 0h1m27 0h1m10 0h1m1 0h1m27 0h1m6 0h1m18 0h1m2 0h2m5 0h1m59 0h1m55 0h1m1 0h1m7 0h1m1 0h1m4 0h1m5 0h1m14 0h1m6 0h1m4 0h2m3 0h2M0 83m319 0h1m3 0h1m4 0h2m27 0h2m2 0h2m15 0h1m2 0h1m3 0h1m1 0h1m9 0h1m24 0h1m48 0h1m46 0h1m25 0h1m2 0h1m13 0h1m44 0h1m40 0h1m3 0h1m38 0h1m13 0h1m17 0h2m15 0h1m4 0h1m24 0h1m2 0h1m7 0h1m1 0h1m1 0h1m2 0h2M0 84m315 0h1m8 0h1m2 0h1m22 0h1m9 0h1m3 0h1m28 0h1m7 0h1m8 0h1m1 0h1m5 0h1m3 0h1m9 0h1m27 0h1m32 0h1m1 0h1m57 0h2m2 0h1m14 0h1m33 0h1m34 0h1m57 0h1m23 0h1m2 0h1m13 0h5m4 0h1m21 0h1m1 0h1m4 0h1m4 0h2m1 0h1m4 0h1m3 0h1M0 85m313 0h1m1 0h1m11 0h1m13 0h2m1 0h1m23 0h1m5 0h1m19 0h1m5 0h1m25 0h1m1 0h1m2 0h1m3 0h1m39 0h1m17 0h3m9 0h1m28 0h2m14 0h1m3 0h1m45 0h1m14 0h1m21 0h1m11 0h1m8 0h1m11 0h1m45 0h1m22 0h1m19 0h1m10 0h3m7 0h1m1 0h2M0 86m312 0h1m26 0h1m1 0h1m11 0h1m4 0h2m17 0h1m6 0h1m12 0h2m1 0h1m8 0h1m3 0h1m12 0h2m1 0h1m6 0h1m1 0h1m26 0h1m27 0h1m56 0h1m1 0h3m42 0h1m9 0h1m2 0h1m32 0h1m1 0h1m1 0h2m5 0h1m31 0h1m3 0h1m6 0h1m16 0h1m27 0h1m29 0h1m1 0h1m8 0h1m2 0h1m1 0h1M0 87m314 0h1m2 0h1m2 0h1m34 0h1m2 0h1m1 0h1m1 0h1m20 0h1m4 0h1m26 0h1m13 0h1m6 0h1m19 0h1m10 0h1m11 0h1m7 0h1m1 0h1m5 0h1m27 0h1m27 0h1m30 0h1m7 0h1m57 0h1m2 0h1m18 0h1m30 0h1m41 0h1m11 0h1m13 0h2m2 0h1m2 0h1m1 0h1m7 0h2M0 88m319 0h1m1 0h1m2 0h1m1 0h1m12 0h1m6 0h1m46 0h1m3 0h1m28 0h1m1 0h1m5 0h2m2 0h1m1 0h1m52 0h1m2 0h1m4 0h2m8 0h2m11 0h1m26 0h1m2 0h1m8 0h1m11 0h1m4 0h1m25 0h1m17 0h1m16 0h1m16 0h1m14 0h1m11 0h1m5 0h1m4 0h1m8 0h1m33 0h1m2 0h3m10 0h1m7 0h1m7 0h1m1 0h2m7 0h2m1 0h1m1 0h1m4 0h1m1 0h1M0 89m316 0h1m1 0h1m4 0h1m1 0h1m10 0h1m14 0h1m17 0h1m8 0h1m7 0h1m1 0h1m5 0h1m5 0h3m6 0h1m11 0h1m7 0h1m2 0h1m11 0h1m17 0h1m31 0h3m4 0h1m10 0h1m10 0h1m26 0h1m5 0h1m6 0h1m41 0h1m25 0h1m12 0h1m4 0h1m43 0h1m46 0h5m21 0h1m3 0h1m3 0h1m5 0h1m4 0h3M0 90m320 0h1m1 0h1m8 0h1m24 0h1m5 0h1m4 0h1m1 0h1m10 0h1m4 0h1m7 0h1m1 0h1m7 0h1m1 0h1m16 0h2m11 0h1m29 0h1m9 0h1m4 0h1m13 0h1m27 0h1m5 0h1m20 0h1m1 0h2m1 0h1m4 0h1m9 0h1m70 0h1m7 0h1m47 0h1m38 0h1m5 0h1m6 0h1m16 0h1m8 0h1m11 0h1M0 91m323 0h1m2 0h1m4 0h1m5 0h1m1 0h2m12 0h1m4 0h1m1 0h1m3 0h1m2 0h1m19 0h1m10 0h3m7 0h1m6 0h1m22 0h1m1 0h1m25 0h1m26 0h1m1 0h1m5 0h1m47 0h2m1 0h2m3 0h1m15 0h2m50 0h1m7 0h1m13 0h1m42 0h2m13 0h1m23 0h1m11 0h2m2 0h1m15 0h1m8 0h1m1 0h1m1 0h1m1 0h1m7 0h2M0 92m322 0h3m7 0h1m25 0h1m13 0h1m2 0h2m3 0h1m20 0h1m5 0h2m9 0h1m1 0h1m18 0h1m16 0h1m15 0h1m10 0h1m9 0h1m2 0h1m29 0h1m23 0h2m2 0h1m17 0h1m4 0h1m12 0h1m18 0h1m6 0h1m41 0h1m17 0h1m1 0h1m61 0h1m31 0h1m3 0h1m9 0h4M0 93m334 0h1m7 0h1m13 0h1m3 0h1m3 0h1m2 0h3m22 0h1m12 0h1m6 0h1m9 0h1m1 0h1m16 0h1m48 0h1m4 0h1m9 0h1m6 0h1m14 0h1m2 0h1m3 0h1m15 0h5m14 0h1m40 0h3m38 0h1m36 0h1m33 0h1m18 0h1m3 0h1m7 0h1m16 0h1m12 0h2m1 0h1m1 0h1M0 94m324 0h1m1 0h1m1 0h1m1 0h1m3 0h1m6 0h1m4 0h1m11 0h2m1 0h1m1 0h1m6 0h1m10 0h1m5 0h1m4 0h1m6 0h3m16 0h1m14 0h1m2 0h1m12 0h1m65 0h1m19 0h1m17 0h1m7 0h1m33 0h1m14 0h1m7 0h1m7 0h2m2 0h2m17 0h1m25 0h1m3 0h1m11 0h1m7 0h1m4 0h1m7 0h1m16 0h1m44 0h1m1 0h1m10 0h1m2 0h1M0 95m311 0h1m10 0h1m9 0h1m2 0h1m5 0h1m6 0h2m2 0h1m22 0h1m24 0h1m13 0h1m14 0h1m41 0h1m13 0h1m7 0h1m2 0h1m24 0h1m18 0h1m2 0h1m35 0h1m3 0h1m6 0h1m19 0h1m39 0h1m25 0h1m85 0h1m7 0h3m4 0h1m6 0h1m1 0h2M0 96m325 0h1m1 0h2m20 0h1m3 0h1m5 0h1m3 0h1m4 0h1m4 0h1m4 0h1m8 0h1m13 0h1m1 0h1m7 0h1m1 0h1m6 0h1m34 0h1m6 0h1m1 0h2m3 0h1m26 0h2m5 0h1m43 0h1m6 0h1m18 0h1m6 0h1m14 0h1m53 0h1m17 0h1m21 0h1m52 0h1m1 0h2m24 0h1m11 0h2m2 0h2M0 97m341 0h1m6 0h1m5 0h1m3 0h1m15 0h1m21 0h1m3 0h1m32 0h1m2 0h1m10 0h1m27 0h1m7 0h1m10 0h1m40 0h1m3 0h1m10 0h2m2 0h1m2 0h1m26 0h1m22 0h1m1 0h1m1 0h1m23 0h1m3 0h1m5 0h1m7 0h1m15 0h1m10 0h1m8 0h1m13 0h1m4 0h1m16 0h2m15 0h2m27 0h1m2 0h1m6 0h1m2 0h1m1 0h1M0 98m318 0h1m5 0h1m6 0h1m3 0h1m11 0h1m5 0h1m1 0h1m15 0h1m12 0h1m4 0h1m14 0h1m3 0h2m1 0h1m24 0h1m4 0h2m15 0h1m9 0h1m24 0h1m28 0h1m4 0h1m24 0h1m2 0h1m42 0h1m4 0h1m6 0h1m28 0h1m21 0h1m27 0h1m53 0h1m28 0h1m9 0h1m2 0h1M0 99m315 0h3m5 0h1m1 0h1m5 0h1m1 0h1m12 0h1m9 0h1m10 0h1m29 0h1m3 0h1m4 0h1m14 0h1m1 0h1m18 0h1m29 0h1m8 0h1m5 0h1m38 0h1m24 0h1m43 0h1m53 0h1m2 0h1m19 0h1m21 0h1m1 0h1m43 0h3m23 0h1m4 0h1m5 0h1m4 0h2M0 100m311 0h1m1 0h1m9 0h1m19 0h1m11 0h1m2 0h2m1 0h1m9 0h1m5 0h1m5 0h1m1 0h1m15 0h1m12 0h1m13 0h1m24 0h1m43 0h1m14 0h1m6 0h1m31 0h1m1 0h2m49 0h1m6 0h1m4 0h1m42 0h1m14 0h1m12 0h1m21 0h1m15 0h1m4 0h1m9 0h1m3 0h1m11 0h1m1 0h1m15 0h2m8 0h2m2 0h1M0 101m313 0h1m3 0h1m4 0h1m11 0h2m13 0h1m2 0h1m7 0h1m2 0h1m11 0h1m13 0h1m1 0h1m2 0h1m7 0h1m26 0h1m7 0h1m1 0h1m1 0h1m20 0h1m31 0h1m57 0h3m55 0h1m4 0h1m31 0h1m5 0h1m12 0h1m83 0h1m13 0h1m5 0h2m1 0h1m9 0h3m1 0h1M0 102m317 0h1m5 0h1m1 0h1m6 0h2m2 0h1m10 0h1m5 0h1m10 0h2m1 0h1m21 0h1m8 0h1m1 0h1m24 0h1m2 0h1m64 0h1m3 0h1m15 0h1m1 0h1m11 0h1m23 0h2m1 0h1m50 0h1m5 0h1m9 0h1m34 0h1m7 0h1m19 0h1m13 0h1m13 0h1m31 0h1m26 0h1m10 0h1m1 0h1m2 0h1M0 103m317 0h1m23 0h1m7 0h1m13 0h2m4 0h1m3 0h1m1 0h2m3 0h2m2 0h1m2 0h2m12 0h2m2 0h1m7 0h1m12 0h1m2 0h1m3 0h1m5 0h1m20 0h1m8 0h1m24 0h1m3 0h1m17 0h1m24 0h1m3 0h1m5 0h1m13 0h1m8 0h1m9 0h1m8 0h1m6 0h1m8 0h2m35 0h1m2 0h1m33 0h1m47 0h1m8 0h2m1 0h1m17 0h1m8 0h1m1 0h1m1 0h1m11 0h1M0 104m316 0h1m4 0h1m1 0h1m4 0h1m4 0h1m4 0h1m9 0h1m12 0h1m2 0h1m5 0h1m3 0h1m4 0h1m12 0h1m6 0h1m1 0h1m2 0h1m5 0h1m16 0h1m3 0h1m3 0h1m57 0h2m1 0h1m47 0h1m6 0h4m7 0h1m49 0h1m4 0h1m6 0h1m54 0h1m10 0h1m6 0h1m3 0h1m6 0h1m19 0h1m7 0h1m5 0h1m1 0h1m25 0h1m13 0h2M0 105m329 0h1m1 0h1m5 0h2m5 0h1m15 0h1m5 0h1m15 0h2m14 0h1m11 0h2m14 0h1m5 0h2m3 0h1m29 0h1m29 0h1m13 0h1m2 0h1m8 0h1m28 0h1m28 0h1m18 0h1m24 0h1m23 0h1m23 0h1m15 0h1m20 0h1m4 0h1m24 0h1m27 0h1m4 0h1m8 0h1m4 0h1M0 106m343 0h1m11 0h1m2 0h1m8 0h1m1 0h1m7 0h1m11 0h2m7 0h1m12 0h1m15 0h1m39 0h1m18 0h1m6 0h1m40 0h1m17 0h2m30 0h1m18 0h1m36 0h1m4 0h1m1 0h1m95 0h1m3 0h1m37 0h1M0 107m319 0h2m2 0h1m1 0h1m11 0h1m6 0h1m10 0h1m2 0h1m2 0h1m15 0h1m11 0h1m1 0h1m5 0h1m29 0h1m11 0h1m26 0h2m8 0h1m17 0h2m1 0h1m56 0h2m10 0h1m10 0h1m1 0h1m1 0h1m29 0h1m5 0h1m55 0h1m69 0h1m27 0h2m10 0h1m2 0h1m8 0h1M0 108m319 0h1m12 0h1m3 0h1m13 0h1m35 0h1m6 0h1m2 0h2m3 0h1m15 0h1m2 0h1m6 0h1m5 0h1m52 0h1m7 0h1m58 0h1m12 0h2m32 0h1m42 0h1m30 0h1m15 0h1m32 0h1m14 0h1m3 0h1m28 0h3m10 0h2m1 0h2m3 0h1M0 109m336 0h1m4 0h1m9 0h1m5 0h1m13 0h1m1 0h1m17 0h1m3 0h1m4 0h1m8 0h1m3 0h1m2 0h1m5 0h1m73 0h2m28 0h1m11 0h1m12 0h3m36 0h1m2 0h1m17 0h1m28 0h1m8 0h1m44 0h1m19 0h1m3 0h1m21 0h1m1 0h1m9 0h1m15 0h1m1 0h1m1 0h2m9 0h1m1 0h2M0 110m313 0h1m27 0h1m16 0h1m5 0h1m7 0h1m3 0h1m4 0h1m2 0h1m1 0h1m12 0h1m15 0h1m18 0h1m11 0h1m25 0h2m18 0h1m2 0h3m2 0h1m1 0h1m21 0h1m19 0h1m7 0h1m42 0h1m3 0h1m9 0h1m7 0h1m21 0h1m7 0h1m2 0h1m19 0h1m20 0h1m17 0h1m33 0h2m14 0h1m3 0h1m4 0h1m4 0h2m6 0h1m5 0h1M0 111m336 0h1m6 0h1m21 0h1m12 0h2m33 0h1m19 0h1m1 0h1m2 0h1m2 0h1m7 0h2m16 0h1m9 0h1m58 0h1m14 0h1m13 0h1m61 0h1m20 0h2m10 0h1m28 0h1m19 0h1m31 0h2m1 0h1m28 0h2m7 0h1m1 0h4M0 112m315 0h1m8 0h2m9 0h1m5 0h1m2 0h1m14 0h1m19 0h1m5 0h1m6 0h2m3 0h1m1 0h1m2 0h1m5 0h1m26 0h1m2 0h2m12 0h1m2 0h1m40 0h1m21 0h1m34 0h1m46 0h1m40 0h1m7 0h1m8 0h1m30 0h1m1 0h1m1 0h1m23 0h1m23 0h1m8 0h1m35 0h1" stroke="#1024a0" opacity="0.8"/></g><rect x="11.6" y="56" width="1.2" height="56.5" fill="#d8dcc8"/><rect x="32" y="56" width="1" height="56.5" fill="#a8c0a0" opacity=".7"/><rect x="45.5" y="56" width="1" height="56.5" fill="#a8c0a0" opacity=".5"/><rect x="148.6" y="56" width="1.6" height="56.5" fill="#d8d84a" opacity=".75"/><rect x="147.6" y="100" width="3.6" height="12" fill="#e8e030" opacity=".8"/><rect x="188.6" y="56" width="1.4" height="56.5" fill="#dcd84c" opacity=".9"/><rect x="804.5" y="56" width="1.6" height="56.5" fill="#e4dca4"/><rect x="12" y="55.6" width="895" height="1.6" fill="#1a36c8" opacity=".5"/><rect x="12" y="55.6" width="70" height="2" fill="#0c22a0" opacity=".85"/><rect x="82" y="55.6" width="28" height="2" fill="#e8d030" opacity=".85"/><rect x="110" y="55.6" width="16" height="2" fill="#f05a18" opacity=".85"/><rect x="126" y="55.6" width="24" height="2" fill="#e0d038" opacity=".85"/><rect x="150" y="55.6" width="40" height="2" fill="#8aa0b0" opacity=".85"/><rect x="190" y="55.6" width="250" height="2" fill="#0c22a0" opacity=".85"/><rect x="440" y="55.6" width="467" height="2" fill="#081460" opacity=".85"/><rect x="314" y="55.6" width="16" height="2" fill="#c8cc60" opacity=".85"/><rect x="347" y="55.6" width="5" height="2" fill="#d8d848" opacity=".85"/><rect x="360" y="55.6" width="6" height="2" fill="#c8cc50" opacity=".85"/><rect x="378" y="55.6" width="8" height="2" fill="#d0d050" opacity=".85"/><rect x="440" y="55.6" width="30" height="2" fill="#d8d848" opacity=".85"/><rect x="545" y="55.6" width="15" height="2" fill="#b8c058" opacity=".85"/><rect x="600" y="55.6" width="12" height="2" fill="#9aa870" opacity=".85"/><rect x="628" y="55.6" width="12" height="2" fill="#a8b460" opacity=".85"/><rect x="736" y="55.6" width="12" height="2" fill="#c0c458" opacity=".85"/><rect x="760" y="55.6" width="10" height="2" fill="#a8b860" opacity=".85"/><rect x="786" y="55.6" width="14" height="2" fill="#98a860" opacity=".85"/><rect x="856" y="55.6" width="24" height="2" fill="#f0d838" opacity=".85"/><rect x="881" y="55.6" width="14" height="2" fill="#c0c860" opacity=".85"/><rect x="0" y="57.6" width="907" height="1.2" fill="#38d848" opacity=".72"/><rect x="0" y="68.30000000000001" width="907" height="1.2" fill="#38d848" opacity=".72"/><rect x="0" y="79.2" width="907" height="1.2" fill="#38d848" opacity=".72"/><rect x="0" y="90.2" width="907" height="1.2" fill="#38d848" opacity=".72"/><rect x="0" y="101.2" width="907" height="1.2" fill="#38d848" opacity=".72"/><rect x="0" y="112.0" width="907" height="1.2" fill="#38d848" opacity=".72"/><rect x="0" y="113.2" width="907" height="40" fill="url(#plb)"/><rect x="0" y="152.5" width="907" height="7.5" fill="#000"/><line x1="0" x2="907" y1="119.6" y2="119.6" stroke="#dcdcf4" stroke-width=".9" stroke-dasharray="1.5 1.5" opacity=".72"/><line x1="0" x2="907" y1="125.9" y2="125.9" stroke="#dcdcf4" stroke-width=".9" stroke-dasharray="1.5 1.5" opacity=".72"/><line x1="0" x2="907" y1="132.2" y2="132.2" stroke="#dcdcf4" stroke-width=".9" stroke-dasharray="1.5 1.5" opacity=".72"/><line x1="0" x2="907" y1="138.3" y2="138.3" stroke="#dcdcf4" stroke-width=".9" stroke-dasharray="1.5 1.5" opacity=".72"/><line x1="0" x2="907" y1="144.5" y2="144.5" stroke="#dcdcf4" stroke-width=".9" stroke-dasharray="1.5 1.5" opacity=".72"/><line x1="0" x2="907" y1="150.7" y2="150.7" stroke="#dcdcf4" stroke-width=".9" stroke-dasharray="1.5 1.5" opacity=".72"/><line x1="182.5" x2="182.5" y1="113" y2="155" stroke="#f0f0f8" stroke-width="1.2" stroke-dasharray="1 1.5" opacity=".9"/><line x1="364.5" x2="364.5" y1="113" y2="155" stroke="#f0f0f8" stroke-width="1.2" stroke-dasharray="1 1.5" opacity=".9"/><line x1="546.5" x2="546.5" y1="113" y2="155" stroke="#f0f0f8" stroke-width="1.2" stroke-dasharray="1 1.5" opacity=".9"/><line x1="728.5" x2="728.5" y1="113" y2="155" stroke="#f0f0f8" stroke-width="1.2" stroke-dasharray="1 1.5" opacity=".9"/><rect x="272.3" y="56" width="1.05" height="100" fill="#3ee03e"/><rect x="819.3" y="56" width="1.05" height="100" fill="#3ee04a"/><rect x="310.6" y="56" width="1.1" height="100" fill="#c83048"/><rect x="327.6" y="56" width="1.1" height="100" fill="#c83048"/><path d="M0.0 152.2 1.0 153.3 2.0 155.6 3.0 155.8 4.0 153.3 5.0 149.5 6.0 146.6 7.0 145.9 8.0 146.6 9.0 144.4 10.0 142.4 11.0 144.6 12.0 146.5 13.0 148.3 14.0 146.0 15.0 146.3 16.0 143.3 17.0 142.4 18.0 143.7 19.0 142.8 20.0 143.8 21.0 143.9 22.0 146.8 23.0 148.9 24.0 149.6 25.0 148.3 26.0 148.4 27.0 143.8 28.0 146.5 29.0 148.1 30.0 148.6 31.0 150.2 32.0 150.5 33.0 149.7 34.0 148.3 35.0 147.7 36.0 150.1 37.0 149.6 38.0 149.3 39.0 149.4 40.0 147.8 41.0 146.4 42.0 147.4 43.0 145.3 44.0 145.0 45.0 147.1 46.0 148.3 47.0 146.6 48.0 147.8 49.0 147.9 50.0 147.4 51.0 148.9 52.0 148.3 53.0 150.1 54.0 149.2 55.0 147.8 56.0 148.5 57.0 145.8 58.0 147.4 59.0 146.2 60.0 146.2 61.0 148.1 62.0 147.7 63.0 149.4 64.0 146.7 65.0 146.2 66.0 146.8 67.0 146.3 68.0 148.6 69.0 147.7 70.0 150.0 71.0 149.1 72.0 146.5 73.0 146.8 74.0 145.0 75.0 145.3 76.0 149.6 77.0 147.7 78.0 145.2 79.0 147.0 80.0 145.7 81.0 145.2 82.0 145.0 83.0 143.6 84.0 141.3 85.0 141.1 86.0 142.9 87.0 143.9 88.0 145.2 89.0 146.5 90.0 145.0 91.0 143.9 92.0 141.9 93.0 140.9 94.0 143.0 95.0 145.7 96.0 147.1 97.0 150.5 98.0 146.7 99.0 144.4 100.0 146.9 101.0 145.4 102.0 145.2 103.0 145.4 104.0 147.2 105.0 145.1 106.0 145.7 107.0 144.7 108.0 144.5 109.0 144.7 110.0 145.5 111.0 145.1 112.0 141.0 113.0 139.5 114.0 137.0 115.0 133.1 116.0 132.2 117.0 136.2 118.0 142.6 119.0 142.4 120.0 145.0 121.0 145.5 122.0 139.6 123.0 139.7 124.0 137.9 125.0 139.0 126.0 142.7 127.0 149.2 128.0 146.1 129.0 146.1 130.0 143.1 131.0 140.0 132.0 139.8 133.0 141.4 134.0 143.5 135.0 147.2 136.0 148.1 137.0 151.2 138.0 150.7 139.0 151.7 140.0 149.0 141.0 148.8 142.0 151.0 143.0 149.5 144.0 150.9 145.0 151.9 146.0 151.6 147.0 148.4 148.0 145.6 149.0 149.2 150.0 146.8 151.0 146.0 152.0 145.3 153.0 146.6 154.0 146.9 155.0 147.7 156.0 146.3 157.0 146.4 158.0 149.7 159.0 146.7 160.0 147.1 161.0 145.1 162.0 143.9 163.0 143.9 164.0 144.8 165.0 146.7 166.0 146.7 167.0 148.1 168.0 148.5 169.0 148.5 170.0 147.2 171.0 148.7 172.0 148.7 173.0 147.7 174.0 144.5 175.0 145.7 176.0 145.1 177.0 145.8 178.0 145.6 179.0 149.2 180.0 145.8 181.0 144.8 182.0 144.5 183.0 144.7 184.0 139.8 185.0 142.8 186.0 144.4 187.0 144.3 188.0 145.8 189.0 145.9 190.0 147.7 191.0 149.3 192.0 146.9 193.0 148.6 194.0 148.4 195.0 150.5 196.0 148.5 197.0 147.2 198.0 145.2 199.0 145.0 200.0 144.3 201.0 145.7 202.0 146.2 203.0 147.2 204.0 148.3 205.0 149.2 206.0 147.5 207.0 146.1 208.0 144.5 209.0 142.8 210.0 143.5 211.0 142.3 212.0 141.2 213.0 145.1 214.0 147.9 215.0 149.5 216.0 151.1 217.0 148.0 218.0 149.2 219.0 149.6 220.0 151.3 221.0 153.0 222.0 151.2 223.0 150.5 224.0 150.2 225.0 149.2 226.0 148.5 227.0 147.9 228.0 147.9 229.0 148.5 230.0 149.5 231.0 146.6 232.0 147.4 233.0 149.4 234.0 148.8 235.0 149.2 236.0 149.0 237.0 149.8 238.0 151.2 239.0 149.8 240.0 145.3 241.0 144.8 242.0 144.5 243.0 144.7 244.0 144.4 245.0 143.8 246.0 141.7 247.0 144.4 248.0 145.7 249.0 144.9 250.0 145.2 251.0 147.6 252.0 144.9 253.0 143.9 254.0 145.7 255.0 147.1 256.0 150.2 257.0 145.6 258.0 146.9 259.0 147.8 260.0 148.8 261.0 150.0 262.0 150.9 263.0 148.4 264.0 151.6 265.0 152.3 266.0 151.4 267.0 151.7 268.0 153.0 269.0 149.3 270.0 148.3 271.0 148.7 272.0 148.3 273.0 150.0 274.0 149.2 275.0 149.4 276.0 148.3 277.0 148.2 278.0 150.5 279.0 149.8 280.0 149.0 281.0 150.1 282.0 150.5 283.0 150.7 284.0 148.2 285.0 147.8 286.0 146.3 287.0 146.8 288.0 147.2 289.0 145.7 290.0 143.6 291.0 143.6 292.0 145.9 293.0 142.0 294.0 144.3 295.0 144.5 296.0 144.9 297.0 146.6 298.0 145.3 299.0 144.4 300.0 143.7 301.0 146.6 302.0 148.6 303.0 148.2 304.0 146.8 305.0 148.9 306.0 147.7 307.0 149.3 308.0 149.9 309.0 148.4 310.0 148.8 311.0 149.5 312.0 149.9 313.0 148.5 314.0 149.8 315.0 151.5 316.0 146.2 317.0 145.0 318.0 146.4 319.0 145.5 320.0 143.7 321.0 146.7 322.0 146.0 323.0 147.6 324.0 148.9 325.0 146.6 326.0 144.7 327.0 146.3 328.0 146.7 329.0 148.0 330.0 148.0 331.0 146.7 332.0 149.5 333.0 150.2 334.0 150.9 335.0 151.0 336.0 148.4 337.0 147.2 338.0 146.5 339.0 148.9 340.0 148.2 341.0 151.0 342.0 149.7 343.0 152.9 344.0 148.5 345.0 150.6 346.0 147.3 347.0 146.8 348.0 144.3 349.0 143.7 350.0 143.6 351.0 143.7 352.0 138.1 353.0 139.6 354.0 140.8 355.0 141.2 356.0 142.3 357.0 144.5 358.0 146.0 359.0 143.2 360.0 140.5 361.0 138.3 362.0 138.5 363.0 138.0 364.0 142.1 365.0 143.1 366.0 145.4 367.0 146.2 368.0 145.2 369.0 144.5 370.0 147.7 371.0 146.2 372.0 144.5 373.0 143.5 374.0 140.3 375.0 138.1 376.0 141.4 377.0 140.7 378.0 142.2 379.0 143.2 380.0 146.1 381.0 146.8 382.0 148.3 383.0 145.0 384.0 144.1 385.0 143.1 386.0 145.2 387.0 147.0 388.0 147.4 389.0 149.5 390.0 148.0 391.0 147.2 392.0 148.6 393.0 150.4 394.0 150.4 395.0 148.5 396.0 147.0 397.0 149.5 398.0 147.3 399.0 147.7 400.0 146.1 401.0 149.1 402.0 147.6 403.0 151.4 404.0 149.5 405.0 148.6 406.0 147.8 407.0 146.9 408.0 145.2 409.0 146.9 410.0 148.7 411.0 148.7 412.0 148.6 413.0 148.9 414.0 147.8 415.0 149.8 416.0 151.6 417.0 153.5 418.0 153.1 419.0 152.4 420.0 152.7 421.0 150.2 422.0 150.9 423.0 151.6 424.0 152.3 425.0 150.9 426.0 151.2 427.0 150.7 428.0 152.5 429.0 150.1 430.0 148.0 431.0 149.6 432.0 151.6 433.0 151.7 434.0 150.1 435.0 148.7 436.0 146.8 437.0 149.0 438.0 149.4 439.0 148.4 440.0 146.9 441.0 146.3 442.0 150.0 443.0 146.5 444.0 144.2 445.0 145.9 446.0 146.8 447.0 146.8 448.0 143.3 449.0 143.9 450.0 145.8 451.0 145.7 452.0 147.1 453.0 145.9 454.0 145.3 455.0 147.4 456.0 148.5 457.0 147.3 458.0 146.2 459.0 146.5 460.0 145.3 461.0 142.2 462.0 141.4 463.0 142.1 464.0 144.6 465.0 141.8 466.0 141.3 467.0 146.2 468.0 144.4 469.0 144.8 470.0 147.8 471.0 146.7 472.0 146.9 473.0 149.1 474.0 153.3 475.0 152.0 476.0 149.0 477.0 146.2 478.0 144.8 479.0 147.0 480.0 147.5 481.0 145.2 482.0 144.7 483.0 146.4 484.0 144.5 485.0 141.4 486.0 142.0 487.0 141.1 488.0 143.3 489.0 144.5 490.0 146.5 491.0 150.0 492.0 148.6 493.0 148.3 494.0 149.5 495.0 148.7 496.0 146.7 497.0 148.0 498.0 146.5 499.0 148.0 500.0 146.2 501.0 150.2 502.0 146.6 503.0 151.1 504.0 151.9 505.0 150.1 506.0 152.2 507.0 152.4 508.0 153.8 509.0 154.5 510.0 154.2 511.0 152.4 512.0 149.4 513.0 151.1 514.0 152.5 515.0 151.7 516.0 155.5 517.0 151.0 518.0 150.2 519.0 149.1 520.0 149.5 521.0 148.9 522.0 143.2 523.0 139.9 524.0 140.8 525.0 142.8 526.0 145.2 527.0 144.1 528.0 139.2 529.0 138.1 530.0 139.3 531.0 138.0 532.0 140.6 533.0 142.3 534.0 141.6 535.0 144.3 536.0 146.2 537.0 146.4 538.0 143.4 539.0 143.3 540.0 145.5 541.0 144.8 542.0 148.8 543.0 149.5 544.0 149.8 545.0 148.3 546.0 150.6 547.0 150.5 548.0 147.4 549.0 146.4 550.0 149.0 551.0 148.0 552.0 147.7 553.0 149.1 554.0 148.1 555.0 151.1 556.0 148.4 557.0 147.8 558.0 146.1 559.0 146.6 560.0 143.0 561.0 141.4 562.0 139.8 563.0 142.1 564.0 141.4 565.0 142.1 566.0 144.4 567.0 143.8 568.0 141.9 569.0 141.0 570.0 139.8 571.0 143.4 572.0 143.4 573.0 147.1 574.0 148.9 575.0 148.5 576.0 148.2 577.0 146.9 578.0 146.3 579.0 145.2 580.0 146.5 581.0 147.2 582.0 147.9 583.0 146.1 584.0 146.3 585.0 146.8 586.0 143.7 587.0 146.0 588.0 144.3 589.0 142.7 590.0 143.2 591.0 147.0 592.0 144.9 593.0 143.3 594.0 144.7 595.0 146.9 596.0 148.2 597.0 148.8 598.0 148.1 599.0 147.5 600.0 146.5 601.0 147.6 602.0 150.0 603.0 149.5 604.0 149.4 605.0 149.5 606.0 150.3 607.0 148.1 608.0 148.8 609.0 149.2 610.0 149.0 611.0 148.3 612.0 150.2 613.0 147.9 614.0 145.3 615.0 142.8 616.0 142.5 617.0 139.8 618.0 140.9 619.0 139.4 620.0 140.5 621.0 143.4 622.0 141.9 623.0 146.3 624.0 146.3 625.0 149.3 626.0 146.9 627.0 146.8 628.0 145.9 629.0 146.2 630.0 145.0 631.0 141.0 632.0 140.1 633.0 137.7 634.0 142.1 635.0 144.3 636.0 147.4 637.0 148.0 638.0 150.1 639.0 149.2 640.0 148.8 641.0 147.8 642.0 146.8 643.0 146.0 644.0 144.9 645.0 147.4 646.0 149.3 647.0 146.7 648.0 149.3 649.0 148.5 650.0 148.0 651.0 146.6 652.0 147.3 653.0 147.7 654.0 149.0 655.0 146.5 656.0 147.6 657.0 148.5 658.0 145.5 659.0 144.2 660.0 148.9 661.0 149.1 662.0 147.5 663.0 149.3 664.0 152.6 665.0 151.5 666.0 151.9 667.0 148.7 668.0 145.5 669.0 143.8 670.0 146.3 671.0 147.7 672.0 145.0 673.0 145.9 674.0 142.3 675.0 144.8 676.0 143.9 677.0 143.8 678.0 144.9 679.0 144.9 680.0 144.6 681.0 148.3 682.0 147.3 683.0 146.2 684.0 148.9 685.0 147.0 686.0 147.1 687.0 149.3 688.0 149.0 689.0 150.1 690.0 149.6 691.0 149.4 692.0 147.4 693.0 151.0 694.0 149.3 695.0 147.7 696.0 148.9 697.0 148.6 698.0 147.7 699.0 144.6 700.0 144.0 701.0 140.4 702.0 139.9 703.0 137.0 704.0 140.8 705.0 143.2 706.0 147.2 707.0 146.9 708.0 148.2 709.0 147.2 710.0 148.5 711.0 148.1 712.0 146.2 713.0 145.4 714.0 147.1 715.0 148.8 716.0 149.9 717.0 148.6 718.0 149.4 719.0 151.6 720.0 152.4 721.0 149.2 722.0 151.7 723.0 150.0 724.0 148.9 725.0 145.2 726.0 144.7 727.0 146.7 728.0 147.9 729.0 145.6 730.0 147.0 731.0 146.4 732.0 144.3 733.0 143.1 734.0 142.6 735.0 144.4 736.0 146.4 737.0 146.5 738.0 144.6 739.0 146.2 740.0 145.6 741.0 146.3 742.0 144.4 743.0 145.5 744.0 146.2 745.0 147.7 746.0 148.6 747.0 147.2 748.0 147.5 749.0 146.8 750.0 147.3 751.0 146.8 752.0 145.8 753.0 144.9 754.0 144.0 755.0 144.7 756.0 146.4 757.0 148.0 758.0 146.4 759.0 147.1 760.0 146.6 761.0 149.1 762.0 146.8 763.0 147.7 764.0 147.2 765.0 149.4 766.0 148.7 767.0 148.1 768.0 146.3 769.0 143.7 770.0 144.4 771.0 145.1 772.0 143.7 773.0 145.2 774.0 147.0 775.0 147.3 776.0 144.4 777.0 145.8 778.0 144.1 779.0 147.0 780.0 147.1 781.0 147.8 782.0 146.7 783.0 148.8 784.0 149.5 785.0 150.0 786.0 149.8 787.0 145.4 788.0 144.5 789.0 146.5 790.0 146.7 791.0 145.0 792.0 145.9 793.0 147.0 794.0 147.2 795.0 146.2 796.0 146.6 797.0 147.0 798.0 148.2 799.0 148.2 800.0 150.6 801.0 149.3 802.0 150.4 803.0 150.2 804.0 150.4 805.0 151.8 806.0 151.7 807.0 149.4 808.0 153.6 809.0 155.8 810.0 154.5 811.0 152.3 812.0 150.6 813.0 152.6 814.0 155.1 815.0 153.4 816.0 155.5 817.0 152.9 818.0 153.3 819.0 153.1 820.0 150.6 821.0 150.8 822.0 147.4 823.0 151.0 824.0 148.2 825.0 149.1 826.0 147.6 827.0 147.5 828.0 147.5 829.0 148.5 830.0 145.3 831.0 144.9 832.0 147.0 833.0 145.5 834.0 143.3 835.0 139.1 836.0 142.9 837.0 141.6 838.0 141.5 839.0 142.2 840.0 143.1 841.0 145.8 842.0 145.5 843.0 146.7 844.0 146.8 845.0 145.0 846.0 142.0 847.0 144.3 848.0 142.4 849.0 144.3 850.0 146.0 851.0 147.9 852.0 149.1 853.0 146.1 854.0 144.6 855.0 144.3 856.0 147.3 857.0 146.2 858.0 146.4 859.0 142.6 860.0 143.2 861.0 143.4 862.0 142.5 863.0 139.2 864.0 139.9 865.0 137.5 866.0 139.6 867.0 140.0 868.0 139.7 869.0 138.4 870.0 137.6 871.0 140.1 872.0 140.6 873.0 142.0 874.0 143.7 875.0 144.6 876.0 145.1 877.0 143.3 878.0 141.4 879.0 141.8 880.0 142.2 881.0 141.5 882.0 140.9 883.0 144.2 884.0 143.6 885.0 145.3 886.0 143.8 887.0 142.9 888.0 144.1 889.0 142.7 890.0 142.4 891.0 145.2 892.0 148.0 893.0 148.4 894.0 149.8 895.0 148.0 896.0 148.0 897.0 149.8 898.0 148.6 899.0 148.2 900.0 147.7 901.0 146.5 902.0 145.6 903.0 148.3 904.0 146.6 905.0 147.0 906.0 147.8" fill="none" stroke="#33dc3c" stroke-width="1.05" stroke-linejoin="round"/><rect x="20" y="157" width="26" height="2" fill="#b05040" opacity=".5"/><rect x="50" y="157" width="40" height="2" fill="#8a8a8a" opacity=".5"/><rect x="96" y="157" width="16" height="2" fill="#777" opacity=".5"/><rect x="330" y="157" width="30" height="2" fill="#b0b0b0" opacity=".5"/><rect x="473" y="157" width="3" height="2" fill="#b06040" opacity=".5"/><rect x="480" y="157" width="80" height="2" fill="#8a8a8a" opacity=".5"/><rect x="692" y="157" width="3" height="2" fill="#b06040" opacity=".5"/><rect x="700" y="157" width="60" height="2" fill="#a8a8a8" opacity=".5"/><rect x="778" y="157" width="3" height="2" fill="#b06040" opacity=".5"/><rect x="790" y="157" width="10" height="2" fill="#999" opacity=".5"/><rect x="806" y="157" width="20" height="2" fill="#aaa" opacity=".5"/><rect x="832" y="157" width="48" height="2" fill="#b4b4b4" opacity=".5"/><rect x="-0.1" y="45" width="1.3" height="10.8" fill="#333"/><rect x="36.3" y="51" width="1.3" height="4.8" fill="#555"/><rect x="72.7" y="51" width="1.3" height="4.8" fill="#555"/><rect x="109.1" y="51" width="1.3" height="4.8" fill="#555"/><rect x="145.5" y="51" width="1.3" height="4.8" fill="#555"/><rect x="181.9" y="45" width="1.3" height="10.8" fill="#333"/><rect x="218.3" y="51" width="1.3" height="4.8" fill="#555"/><rect x="254.7" y="51" width="1.3" height="4.8" fill="#555"/><rect x="291.1" y="51" width="1.3" height="4.8" fill="#555"/><rect x="327.5" y="51" width="1.3" height="4.8" fill="#555"/><rect x="363.9" y="45" width="1.3" height="10.8" fill="#333"/><rect x="400.3" y="51" width="1.3" height="4.8" fill="#555"/><rect x="436.7" y="51" width="1.3" height="4.8" fill="#555"/><rect x="473.1" y="51" width="1.3" height="4.8" fill="#555"/><rect x="509.5" y="51" width="1.3" height="4.8" fill="#555"/><rect x="545.9" y="45" width="1.3" height="10.8" fill="#333"/><rect x="582.3" y="51" width="1.3" height="4.8" fill="#555"/><rect x="618.7" y="51" width="1.3" height="4.8" fill="#555"/><rect x="655.1" y="51" width="1.3" height="4.8" fill="#555"/><rect x="691.5" y="51" width="1.3" height="4.8" fill="#555"/><rect x="727.9" y="45" width="1.3" height="10.8" fill="#333"/><rect x="764.3" y="51" width="1.3" height="4.8" fill="#555"/><rect x="800.7" y="51" width="1.3" height="4.8" fill="#555"/><rect x="837.1" y="51" width="1.3" height="4.8" fill="#555"/><rect x="873.5" y="51" width="1.3" height="4.8" fill="#555"/><rect x="909.9" y="45" width="1.3" height="10.8" fill="#333"/><text x="182.5" y="46" font-family="Liberation Sans, sans-serif" font-size="16" text-anchor="middle" fill="#111">500</text><text x="364.5" y="46" font-family="Liberation Sans, sans-serif" font-size="16" text-anchor="middle" fill="#111">1000</text><text x="546.5" y="46" font-family="Liberation Sans, sans-serif" font-size="16" text-anchor="middle" fill="#111">1500</text><text x="728.5" y="46" font-family="Liberation Sans, sans-serif" font-size="16" text-anchor="middle" fill="#111">2000</text><text x="910.5" y="46" font-family="Liberation Sans, sans-serif" font-size="16" text-anchor="middle" fill="#111">2500</text><rect x="236" y="52.4" width="75" height="2" fill="#1a9a5c"/><rect x="271.8" y="47" width="2" height="6" fill="#1a9a5c"/><rect x="818.6" y="47.3" width="2.6" height="7" fill="#1a9a5c"/><path d="M311.8 47V41.8H327.2V47" fill="none" stroke="#e21c1c" stroke-width="2.4"/></svg><div style="left:0;top:158.8px;width:2.2px;height:660px;background:#161616"></div><div style="left:1.8px;top:158.8px;width:910px;height:660px;background:#f0f0f0;border-top-left-radius:8px;overflow:hidden" id="mw"><div style="left:0;top:0;width:910px;height:29.2px;background:linear-gradient(#c2c2c2,#d6d6d6 40%,#e2e2e2)"></div><div style="left:0;top:29.2px;width:910px;height:17px;background:linear-gradient(#ececec,#f6f6f6)"></div><div style="left:0;top:46.2px;width:910px;height:620px;background:#efefef"></div><div style="left:0;top:0;width:910px;height:46.2px;background:linear-gradient(to right,rgba(255,255,255,.5),rgba(255,255,255,.12) 30%,rgba(255,255,255,0) 55%,rgba(0,0,0,.05))"></div></div><svg style="left:7.800000000000001px;top:164.7px" width="18" height="18" viewBox="-9 -9 18 18"><defs><radialGradient id="gg173" cx=".74" cy=".58" r=".8"><stop offset="0" stop-color="#586af2"/><stop offset=".3" stop-color="#2e3ed2"/><stop offset=".75" stop-color="#1a22aa"/><stop offset="1" stop-color="#0e1478"/></radialGradient><clipPath id="gc173"><circle r="7.9"/></clipPath></defs><circle r="8.3" fill="#dfe6f4" opacity=".7"/><circle r="7.9" fill="url(#gg173)"/><g clip-path="url(#gc173)"><ellipse cx="1.6" cy="-7.4" rx="7" ry="3" fill="#148a60" opacity=".7"/><ellipse cx="-1.8" cy="-1.4" rx="3.8" ry="4.4" fill="#2aa66a" opacity=".5"/><ellipse cx="-2" cy="-1.2" rx="2.7" ry="3.2" fill="#22de38"/><ellipse cx="1.9" cy="5.6" rx="2.7" ry="2" fill="#2aa66a" opacity=".6"/><ellipse cx="1.9" cy="5.6" rx="1.9" ry="1.3" fill="#2cd03c"/></g></svg><div style="left:10.5px;top:231.3px;width:528.5px;height:15.4px;background:#ababab"></div><div style="left:544px;top:231.3px;width:370px;height:15.4px;background:#ababab"></div><div style="left:10.8px;top:253px;width:511.8px;height:536.9px;background:#fff;border-bottom:1.1px solid #9a9a9a;overflow:hidden" id="lp"><div class="row" style="left:3.2px;top:-11.15px;width:504px"><i style="left:248px"></i></div><div class="row " style="left:3.2px;top:3.25px;width:504.5px"><i style="left:240.0px"></i><span class="t">213400  –9  0.2  747 ~  F5SJF <b>CY0S</b> +00</span></div><div class="row " style="left:3.2px;top:17.65px;width:504.5px"><i style="left:232.0px"></i><span class="t">213400  –9  0.2  747 ~  LY4A <b>CY0S</b> +09</span></div><div class="row g" style="left:3.2px;top:32.05px;width:504.5px"><span class="t">–––––– 2026–03–19 – 21:34:30 UTC – 20m – FT8 ––––––</span></div><div class="row " style="left:3.2px;top:46.45px;width:504.5px"><i style="left:240.0px"></i><span class="t">213430  –8  0.2  748 ~  F5SJF <b>CY0S</b> +00</span></div><div class="row " style="left:3.2px;top:60.85px;width:504.5px"><i style="left:232.0px"></i><span class="t">213430  –8  0.2  748 ~  LY4A <b>CY0S</b> +09</span></div><div class="row " style="left:3.2px;top:75.25px;width:504.5px"><i style="left:240.0px"></i><span class="t">213430  –8  0.2  748 ~  DL4KG <b>CY0S</b> –07</span></div><div class="row " style="left:3.2px;top:89.65px;width:504.5px"><i style="left:240.0px"></i><span class="t">213430  –8  0.2  748 ~  ON6MM <b>CY0S</b> –09</span></div><div class="row g" style="left:3.2px;top:104.05px;width:504.5px"><span class="t">–––––– 2026–03–19 – 21:35:00 UTC – 20m – FT8 ––––––</span></div><div class="row " style="left:3.2px;top:118.45px;width:504.5px"><i style="left:240.0px"></i><span class="t">213500  –8  0.2  748 ~  DL4KG <b>CY0S</b> RR73</span></div><div class="row " style="left:3.2px;top:132.85px;width:504.5px"><i style="left:232.0px"></i><span class="t">213500  –8  0.2  748 ~  LY4A <b>CY0S</b> RR73</span></div><div class="row " style="left:3.2px;top:147.25px;width:504.5px"><i style="left:240.0px"></i><span class="t">213500  –8  0.2  748 ~  ON6MM <b>CY0S</b> –09</span></div><div class="row " style="left:3.2px;top:161.65px;width:504.5px"><i style="left:240.0px"></i><span class="t">213500  –8  0.2  748 ~  LA7NO <b>CY0S</b> –15</span></div><div class="row " style="left:3.2px;top:176.05px;width:504.5px"><i style="left:240.0px"></i><span class="t">213500  –8  0.2  748 ~  NL7WK <b>CY0S</b> –13</span></div><div class="row " style="left:3.2px;top:190.45px;width:504.5px"><i style="left:248.0px"></i><span class="t">213500  –8  0.2  748 ~  JN1XNI <b>CY0S</b> –17</span></div><div class="row g" style="left:3.2px;top:204.85px;width:504.5px"><span class="t">–––––– 2026–03–19 – 21:35:30 UTC – 20m – FT8 ––––––</span></div><div class="row " style="left:3.2px;top:219.25px;width:504.5px"><i style="left:240.0px"></i><span class="t">213530 –10  0.2  746 ~  LA7NO <b>CY0S</b> RR73</span></div><div class="row " style="left:3.2px;top:233.65px;width:504.5px"><i style="left:240.0px"></i><span class="t">213530 –10  0.2  746 ~  NL7WK <b>CY0S</b> RR73</span></div><div class="row " style="left:3.2px;top:248.05px;width:504.5px"><i style="left:240.0px"></i><span class="t">213530 –10  0.2  746 ~  ON6MM <b>CY0S</b> –09</span></div><div class="row " style="left:3.2px;top:262.45px;width:504.5px"><i style="left:248.0px"></i><span class="t">213530 –10  0.2  746 ~  JN1XNI <b>CY0S</b> –17</span></div><div class="row " style="left:3.2px;top:276.85px;width:504.5px"><i style="left:248.0px"></i><span class="t">213530 –10  0.2  746 ~  JH1QAX <b>CY0S</b> –14</span></div><div class="row " style="left:3.2px;top:291.25px;width:504.5px"><i style="left:248.0px"></i><span class="t">213530 –10  0.2  746 ~  IC8AIK <b>CY0S</b> –12</span></div><div class="row g" style="left:3.2px;top:305.65px;width:504.5px"><span class="t">–––––– 2026–03–19 – 21:36:30 UTC – 20m – FT8 ––––––</span></div><div class="row " style="left:3.2px;top:320.05px;width:504.5px"><i style="left:232.0px"></i><span class="t">213630  –9  0.2  748 ~  EA2W <b>CY0S</b> RR73</span></div><div class="row " style="left:3.2px;top:334.45px;width:504.5px"><i style="left:248.0px"></i><span class="t">213630  –9  0.2  748 ~  JE3AGN <b>CY0S</b> RR73</span></div><div class="row " style="left:3.2px;top:348.85px;width:504.5px"><i style="left:248.0px"></i><span class="t">213630  –9  0.2  748 ~  JH1QAX <b>CY0S</b> –14</span></div><div class="row " style="left:3.2px;top:363.25px;width:504.5px"><i style="left:248.0px"></i><span class="t">213630  –9  0.2  748 ~  IC8AIK <b>CY0S</b> –12</span></div><div class="row " style="left:3.2px;top:377.65px;width:504.5px"><i style="left:240.0px"></i><span class="t">213630  –9  0.2  748 ~  G1SAA <b>CY0S</b> –13</span></div><div class="row r" style="left:3.2px;top:392.05px;width:504.5px"><i style="left:248.0px"></i><span class="t">213630  –9  0.2  748 ~  JA2PTQ <b>CY0S</b> –16</span></div><div class="row g" style="left:3.2px;top:406.45px;width:504.5px"><span class="t">–––––– 2026–03–19 – 21:37:30 UTC – 20m – FT8 ––––––</span></div><div class="row " style="left:3.2px;top:420.85px;width:504.5px"><i style="left:248.0px"></i><span class="t">213730 –10  0.2  747 ~  IZ7AUH <b>CY0S</b> RR73</span></div><div class="row r" style="left:3.2px;top:435.25px;width:504.5px"><i style="left:248.0px"></i><span class="t">213730 –10  0.2  747 ~  JA2PTQ <b>CY0S</b> RR73</span></div><div class="row " style="left:3.2px;top:449.65px;width:504.5px"><i style="left:248.0px"></i><span class="t">213730 –10  0.2  747 ~  JA7OWD <b>CY0S</b> RR73</span></div><div class="row " style="left:3.2px;top:464.05px;width:504.5px"><i style="left:248.0px"></i><span class="t">213730 –10  0.2  747 ~  JA9BFM <b>CY0S</b> RR73</span></div><div class="row " style="left:3.2px;top:478.45px;width:504.5px"><i style="left:248.0px"></i><span class="t">213730 –10  0.2  747 ~  EA4IDH <b>CY0S</b> –12</span></div><div class="row " style="left:3.2px;top:492.85px;width:504.5px"><i style="left:248.0px"></i><span class="t">213730 –10  0.2  747 ~  JI2IXA <b>CY0S</b> –15</span></div><div class="row " style="left:3.2px;top:507.25px;width:504.5px"><i style="left:248.0px"></i><span class="t">213730 –10  0.2  747 ~  JA1LZU <b>CY0S</b> –08</span></div><div class="row " style="left:3.2px;top:521.65px;width:504.5px"><i style="left:248.0px"></i><span class="t">213730 –10  0.2  747 ~  JA8GQZ <b>CY0S</b> –17</span></div></div><div style="left:522.6px;top:253px;width:16.4px;height:536.9px;background:#f3f3f3"></div><div style="left:529px;top:414px;width:2.2px;height:355px;background:#808080;border-radius:1px"></div><div style="left:544.6px;top:253px;width:370px;height:286.2px;background:#fff;border-bottom:1.1px solid #a0a0a0;overflow:hidden" id="rp"><div class="row " style="left:3.4px;top:2.80px;width:370px"><span class="t">213300  –8  0.2  748 ~  JA4MOK CY0S –15</span></div><div class="row y" style="left:3.4px;top:17.20px;width:370px"><span class="t">213316  Tx       853 ~  CY0S JA2PTQ PM86</span></div><div class="row y" style="left:3.4px;top:31.60px;width:370px"><span class="t">213345  Tx       853 ~  CY0S JA2PTQ PM86</span></div><div class="row y" style="left:3.4px;top:46.00px;width:370px"><span class="t">213415  Tx       853 ~  CY0S JA2PTQ PM86</span></div><div class="row y" style="left:3.4px;top:60.40px;width:370px"><span class="t">213445  Tx       853 ~  CY0S JA2PTQ PM86</span></div><div class="row y" style="left:3.4px;top:74.80px;width:370px"><span class="t">213515  Tx       853 ~  CY0S JA2PTQ PM86</span></div><div class="row y" style="left:3.4px;top:89.20px;width:370px"><span class="t">213545  Tx       853 ~  CY0S JA2PTQ PM86</span></div><div class="row y" style="left:3.4px;top:103.60px;width:370px"><span class="t">213615  Tx       853 ~  CY0S JA2PTQ PM86</span></div><div class="row g" style="left:3.4px;top:118.00px;width:370px"><span class="t">––––––––––––––––––– 20m –––––––––––––––––</span></div><div class="row r" style="left:3.4px;top:132.40px;width:370px"><span class="t">213630  –9  0.2  748 ~  JA2PTQ CY0S –16</span></div><div class="row y" style="left:3.4px;top:146.80px;width:370px"><span class="t">213645  Tx       853 ~  CY0S JA2PTQ R–09</span></div><div class="row y" style="left:3.4px;top:161.20px;width:370px"><span class="t">213715  Tx       853 ~  CY0S JA2PTQ R–09</span></div><div class="row r" style="left:3.4px;top:175.60px;width:370px"><span class="t">213730 –10  0.2  747 ~  JA2PTQ CY0S RR73</span></div></div><div class="row" style="left:14px;top:232px;width:300px"><span class="t" style="color:#333">  UTC   dB   DT Freq</span></div><div class="row" style="left:548px;top:232px;width:300px"><span class="t" style="color:#333">  UTC   dB   DT Freq</span></div><div class="btn" style="left:544px;top:544.3px;width:71.5px;height:17.8px;line-height:16.5px">160</div><div class="btn" style="left:618px;top:544.3px;width:71.5px;height:17.8px;line-height:16.5px">80</div><div class="btn" style="left:692px;top:544.3px;width:71.5px;height:17.8px;line-height:16.5px">60</div><div class="btn" style="left:766px;top:544.3px;width:71.5px;height:17.8px;line-height:16.5px">40</div><div class="btn" style="left:840px;top:544.3px;width:71.5px;height:17.8px;line-height:16.5px">30</div><div style="left:544px;top:571.5px;width:12.6px;height:12.6px;background:#f6f6f6;border:1px solid #8a8a8a;border-radius:3px"></div><div style="left:561.2px;top:571.2px;line-height:14px;font-size:11px;color:#222">BP</div><div class="wbtn" style="left:586.6px;top:568.6px;width:101px;height:19.6px"></div><div class="wbtn" style="left:694.4px;top:568.6px;width:100.2px;height:19.6px"></div><div style="left:800.6px;top:568.6px;width:102.6px;height:18.8px;background:#14f01e;border:1.2px solid #1f8a2a;border-radius:5px"></div><div class="inp" style="left:544px;top:595px;width:74px;height:19.4px"></div><div style="left:548px;top:598px;line-height:14px;font-size:11.5px;color:#222">20m</div><svg style="left:604.5px;top:601.5px" width="11" height="7" viewBox="0 0 11 7"><path d="M1.500 1.200L5.500 5.200L9.500 1.200" fill="none" stroke="#555" stroke-width="1.1"/></svg><div style="left:623.2px;top:596.2px;width:17.6px;height:17.6px;border-radius:50%;background:#22dc32;border:1px solid #3cc048;text-align:center;font-weight:bold;font-size:12px;line-height:18.4px;color:#143c14">S</div><div style="left:646.4px;top:597.4px;width:235.6px;height:29.4px;background:#000"></div><div class="c" style="left:647.2px;top:597.4px;width:235.6px;height:29.4px;line-height:30.4px;font-size:21.5px;color:#f2f044;white-space:pre;transform:scaleX(.932)" id="fq">14.091 000</div><div style="left:887.4px;top:595.6px;width:12.2px;height:12.2px;background:#f6f6f6;border:1px solid #b0b0b0;border-radius:3px"></div><div class="inp" style="left:887.8px;top:614.6px;width:30px;height:16.6px"></div><div class="wbtn" style="left:887.8px;top:638px;width:30px;height:19.6px;border-radius:4px 0 0 4px"></div><svg style="left:892.5px;top:643px" width="15" height="10" viewBox="0 0 15 10"><path d="M0.500 9.500L7 0.500L13.500 9.500Z" fill="#111"/></svg><div class="inp" style="left:887.8px;top:665px;width:30px;height:16px"></div><div class="inp" style="left:887.8px;top:687.4px;width:30px;height:16px"></div><div style="left:887.4px;top:710px;width:12px;height:12px;background:#c6c6c6;border-radius:3px"></div><svg style="left:889px;top:712px" width="9" height="8" viewBox="0 0 9 8"><path d="M1.200 4.200L3.500 6.300L7.800 1.500" fill="none" stroke="#fff" stroke-width="1.2"/></svg><div style="left:903.6px;top:716px;width:2px;height:8px;background:#aaa"></div><div style="left:903.6px;top:599px;width:4px;height:1.5px;background:#999"></div><div style="left:544px;top:620px;width:50.4px;height:168.4px;background:#f4f4f4;border:1px solid #e2e2e2;border-radius:2px"></div><svg style="left:544px;top:620px" width="51" height="169" viewBox="544 620 51 169"><path d="M566 634.600H562.200V761.600H566" fill="none" stroke="#222" stroke-width="1.1"/><path d="M562.200 761.6h3" stroke="#222" stroke-width="1"/><path d="M562.200 747.5h3" stroke="#222" stroke-width="1"/><path d="M562.200 733.4h3" stroke="#222" stroke-width="1"/><path d="M562.200 719.3h3" stroke="#222" stroke-width="1"/><path d="M562.200 705.2h3" stroke="#222" stroke-width="1"/><path d="M562.200 691.1h3" stroke="#222" stroke-width="1"/><path d="M562.200 677.0h3" stroke="#222" stroke-width="1"/><path d="M562.200 662.9h3" stroke="#222" stroke-width="1"/><path d="M562.200 648.8h3" stroke="#222" stroke-width="1"/><rect x="553.8" y="673.6" width="7.6" height="88" fill="#56aa58"/><path d="M553.600 667.600L561.400 671.600L553.600 675.600Z" fill="#111"/><text x="565.4" y="653.0" font-family="Liberation Sans, sans-serif" font-size="11.5" fill="#222">80</text><text x="565.4" y="681.2" font-family="Liberation Sans, sans-serif" font-size="11.5" fill="#222">60</text><text x="565.4" y="709.4" font-family="Liberation Sans, sans-serif" font-size="11.5" fill="#222">40</text><text x="565.4" y="737.6" font-family="Liberation Sans, sans-serif" font-size="11.5" fill="#222">20</text><text x="565.4" y="765.8" font-family="Liberation Sans, sans-serif" font-size="11.5" fill="#222">0</text><text x="568.5" y="778.6" font-family="Liberation Sans, sans-serif" font-size="11.5" fill="#222" text-anchor="middle">63 dB</text></svg><div class="c" style="left:599px;top:621px;width:42.4px;height:18px;background:#f01414;border:1.3px solid #8c1a1a;border-radius:4px;color:#fff;line-height:16px;font-size:12px">H</div><div class="c" style="left:599px;top:645px;width:42.4px;height:18px;background:#14ee2c;border:1.3px solid #1f7a2a;border-radius:4px;color:#0f6a1a;line-height:16px;font-size:11.5px">FT8</div><div class="btn" style="left:599px;top:669px;width:42.4px;height:18.2px;line-height:16.5px;font-size:11.5px">FT4</div><div class="btn" style="left:599px;top:693px;width:42.4px;height:18.2px;line-height:16.5px;font-size:11.5px">FT2</div><div class="btn" style="left:599px;top:717px;width:42.4px;height:18.2px;line-height:16.5px;font-size:11.5px">MSK</div><div class="btn" style="left:599px;top:741px;width:42.4px;height:18.2px;line-height:16.5px;font-size:11.5px">Q65</div><div class="btn" style="left:599px;top:765px;width:42.4px;height:18.2px;line-height:16.5px;font-size:11.5px">JT65</div><div style="left:646.6px;top:637px;width:138px;height:19.6px;background:#ffff00;border:1.2px solid #4a4a20;border-radius:4px"></div><div style="left:790px;top:637px;width:92px;height:19.8px;background:#9fafd6"></div><div class="inp c" style="left:646.6px;top:661.6px;width:138px;height:19.4px;line-height:17.5px;font-size:11px;color:#2c2c2c">CY0S</div><div class="inp" style="left:790px;top:661.6px;width:91.6px;height:19.4px"></div><div class="wbtn" style="left:647.4px;top:703px;width:74.6px;height:20.2px"></div><div class="wbtn" style="left:726.8px;top:703px;width:75px;height:20.2px"></div><div class="wbtn" style="left:806.6px;top:703px;width:74.4px;height:20.2px"></div><div style="left:646.6px;top:735.4px;width:234.8px;height:51.4px;background:#000"></div><div class="c" style="left:646.6px;top:739px;width:234.8px;line-height:22px;font-size:20.5px;color:#f2f044;white-space:pre;word-spacing:1.2px" id="dt">2026 3 19</div><div class="c" style="left:646.6px;top:760.6px;width:234.8px;line-height:22px;font-size:20.5px;color:#f2f044;white-space:pre;transform:scaleX(.95)" id="dt2">21:37:49</div><div style="left:3px;top:800.8px;width:80px;height:14px;background:#00fe00"></div><div class="c" style="left:88px;top:800.8px;width:63.4px;height:14px;background:#fe6aa6;line-height:17px;font-size:12px;color:#333">FT8</div><div class="c" style="left:157px;top:800.8px;width:22.4px;height:14px;background:#f6f6f6;border:1px solid #c4c4c4;line-height:13.5px;font-size:12px;color:#222">9</div><div style="left:185.6px;top:800.8px;width:161.6px;height:14px;background:#f6f6f6;border:1px solid #c4c4c4"></div><div style="left:903px;top:800.8px;width:5px;height:14px;background:#2a8a34"></div><div style="left:352.5px;top:801px;width:1px;height:13px;background:#dcdcdc"></div><svg style="left:0;top:0;pointer-events:none" width="907" height="813" viewBox="0 0 907 813" font-family="'Liberation Sans','Noto Sans CJK JP',sans-serif"><g font-size="11.5" fill="#8b8b8b"><text x="30" y="21.4">WSJT-X</text><text x="73.6" y="21.4">-</text><text x="81.3" y="21.8" font-size="11" textLength="50" lengthAdjust="spacingAndGlyphs">ワイドグラフ</text><text x="30.5" y="178.9">WSJT-X</text><text x="80" y="178.9">v3.1.0</text><text x="117" y="178.9">improved</text><text x="170.3" y="178.9">PLUS</text><text x="201" y="178.9">edition</text></g><g font-size="11" fill="#929292"><text x="7.5" y="202.6" textLength="33.5" lengthAdjust="spacingAndGlyphs">ファイル</text><text x="54" y="202.6" textLength="83" lengthAdjust="spacingAndGlyphs">コンフィグレーション</text><text x="151" y="202.6" textLength="23" lengthAdjust="spacingAndGlyphs">表示</text><text x="187" y="202.6" textLength="32.5" lengthAdjust="spacingAndGlyphs">フィルタ</text><text x="232" y="202.6" textLength="26" lengthAdjust="spacingAndGlyphs">モード</text><text x="272" y="202.6" textLength="35" lengthAdjust="spacingAndGlyphs">デコード</text><text x="322.5" y="202.6" textLength="22" lengthAdjust="spacingAndGlyphs">保存</text><text x="358" y="202.6" textLength="27" lengthAdjust="spacingAndGlyphs">ツール</text><text x="399" y="202.6" textLength="27" lengthAdjust="spacingAndGlyphs">ヘルプ</text></g><text x="183.8" y="225" font-size="11" fill="#111" textLength="52" lengthAdjust="spacingAndGlyphs">バンド状況</text><text x="205" y="243" font-size="11.5" fill="#222" textLength="48" lengthAdjust="spacingAndGlyphs">メッセージ</text><text x="740.5" y="243" font-size="11.5" fill="#222" textLength="46.5" lengthAdjust="spacingAndGlyphs">メッセージ</text><g font-size="11.5" fill="#222"><text x="601.8" y="582.2" textLength="69.4" lengthAdjust="spacingAndGlyphs">QSOをログ(Q)</text><text x="725" y="582.2" textLength="39" lengthAdjust="spacingAndGlyphs">停止(S)</text><text x="825.8" y="581.5" fill="#0f6a1a" textLength="52.4" lengthAdjust="spacingAndGlyphs">モニター(M)</text><text x="693.8" y="651.4" textLength="42.4" lengthAdjust="spacingAndGlyphs">DXコール</text><text x="811.8" y="651.8" textLength="46.4" lengthAdjust="spacingAndGlyphs">DXグリッド</text><text x="665.8" y="717.4" textLength="37.2" lengthAdjust="spacingAndGlyphs">検索(L)</text><text x="752.5" y="718" textLength="23.3" lengthAdjust="spacingAndGlyphs">追加</text><text x="832.5" y="718" textLength="22.5" lengthAdjust="spacingAndGlyphs">無視</text><text x="25.8" y="813.3" fill="#0c5a14" font-weight="bold" textLength="33.2" lengthAdjust="spacingAndGlyphs">受信中</text><text x="187.6" y="811.8" textLength="157.8" lengthAdjust="spacingAndGlyphs">最終送信: CY0S JA2PTQ R-09</text></g></svg></body></html>
